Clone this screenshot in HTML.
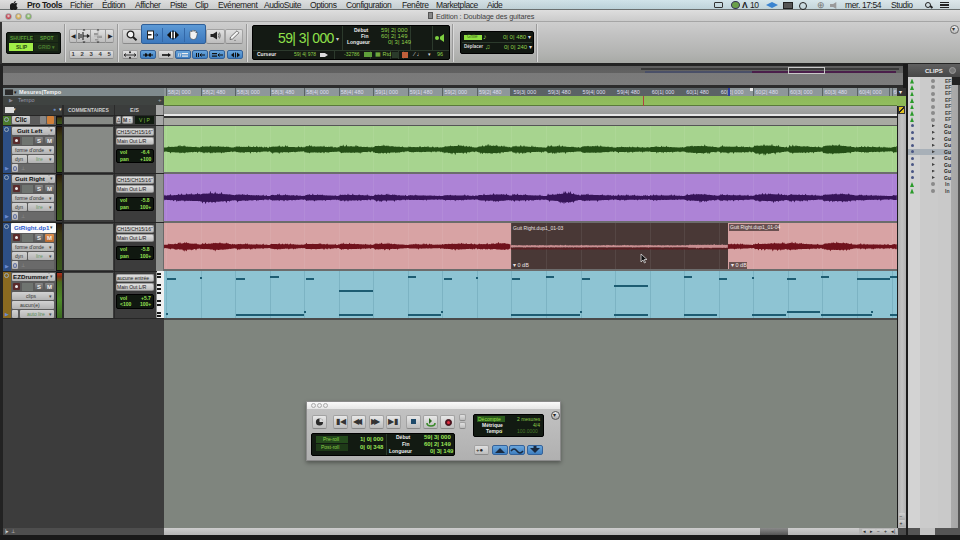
<!DOCTYPE html><html><head><meta charset="utf-8"><style>
*{margin:0;padding:0;box-sizing:border-box}
html,body{width:960px;height:540px;overflow:hidden;background:#1b1b1b;font-family:"Liberation Sans",sans-serif}
.a{position:absolute}
.mb{position:absolute;top:0;line-height:11px;font-size:8.5px;color:#1a1a1a;letter-spacing:-0.4px}
.btn{position:absolute;background:linear-gradient(#e0e0e0,#bdbdbd);border:1px solid #a2a2a2;border-bottom-color:#8a8a8a;border-radius:2px}
.bbl{position:absolute;background:linear-gradient(#6aa6dc,#3f7fc0);border:1px solid #34629a;border-radius:2px}
.lcd{position:absolute;background:#111611;border:1px solid #000;border-radius:2px}
.g{color:#9fe35a}
.w{color:#e8e8e8}
.t{position:absolute;white-space:nowrap}
.hb{position:absolute;background:linear-gradient(#d2d2d2,#b2b2b2);border-radius:1px}
.rl{position:absolute;top:88px;height:8px;font-size:5.5px;line-height:8px;color:#dde;white-space:nowrap}
</style></head><body>
<div class="a" style="left:0;top:0;width:960px;height:10px;background:linear-gradient(rgba(255,255,255,0.18),rgba(0,0,0,0.05)),linear-gradient(90deg,#d6d6d6 0,#d4d7d8 300px,#c4dce4 600px,#cde0e6 800px,#d6e2e6 960px);border-bottom:1px solid #6a7070"></div>
<svg class="a" style="left:10px;top:1px" width="8" height="9" viewBox="0 0 16 18"><path d="M11.5 0c.1 1.2-.4 2.3-1.1 3.1-.7.8-1.8 1.4-2.9 1.3-.1-1.1.4-2.3 1.1-3 .7-.8 1.9-1.4 2.9-1.4zM15.4 13.1c-.5 1.1-.7 1.5-1.3 2.5-.9 1.3-2.1 2.9-3.6 2.9-1.3 0-1.7-.9-3.5-.8-1.8 0-2.2.8-3.5.8-1.5 0-2.6-1.5-3.5-2.8C-1.6 12.200-.3 6.800 2.100 5.100c1-.7 2.200-1.100 3.300-1.100 1.200 0 2 .8 3.100.8 1 0 1.700-.8 3.200-.8 1 0 2.400.6 3.300 1.700-2.900 1.600-2.400 5.800.4 7.400z" fill="#1a1a1a"/></svg>
<span class="mb" style="left:27px;font-weight:bold;">Pro Tools</span>
<span class="mb" style="left:70px;">Fichier</span>
<span class="mb" style="left:102px;">Édition</span>
<span class="mb" style="left:135px;">Afficher</span>
<span class="mb" style="left:170px;">Piste</span>
<span class="mb" style="left:195px;">Clip</span>
<span class="mb" style="left:218px;">Evénement</span>
<span class="mb" style="left:264px;">AudioSuite</span>
<span class="mb" style="left:310px;">Options</span>
<span class="mb" style="left:346px;">Configuration</span>
<span class="mb" style="left:402px;">Fenêtre</span>
<span class="mb" style="left:436px;">Marketplace</span>
<span class="mb" style="left:487px;">Aide</span>
<span class="mb" style="left:845px;">mer. 17:54</span>
<span class="mb" style="left:891px;">Studio</span>
<div class="a" style="left:714px;top:2px;width:9px;height:6px;border:1.2px solid #333;border-radius:1px"></div>
<div class="a" style="left:731px;top:1px;width:9px;height:8px;border-radius:50%;background:#6aa04a;border:1px solid #335"></div>
<span class="mb" style="left:742px;font-weight:bold">&#923;</span><span class="mb" style="left:750px">10</span>
<div class="a" style="left:766px;top:2px;width:12px;height:6px;background:#3a84d0;transform:rotate(0deg);clip-path:polygon(0 50%,50% 0,100% 50%,50% 100%)"></div>
<div class="a" style="left:783px;top:2px;width:10px;height:7px;background:#555;border:1px solid #222"></div>
<div class="a" style="left:799px;top:1.5px;width:8px;height:8px;border:1.3px solid #222;border-radius:50%"></div>
<span class="mb" style="left:817px;color:#777">&#8853;</span>
<div class="a" style="left:830px;top:2px;width:9px;height:7px;background:#9a9a9a;clip-path:polygon(0 30%,35% 30%,70% 0,70% 100%,35% 70%,0 70%)"></div>
<div class="a" style="left:925px;top:1.5px;width:6px;height:6px;border:1.3px solid #222;border-radius:50%"></div><div class="a" style="left:930px;top:6px;width:3px;height:1.5px;background:#222;transform:rotate(45deg)"></div>
<div class="a" style="left:940px;top:2.0px;width:9px;height:1.3px;background:#222"></div>
<div class="a" style="left:940px;top:4.3px;width:9px;height:1.3px;background:#222"></div>
<div class="a" style="left:940px;top:6.6px;width:9px;height:1.3px;background:#222"></div>
<div class="a" style="left:0;top:10px;width:960px;height:12px;background:linear-gradient(#dedede,#cbcbcb);border-bottom:1px solid #a5a5a5"></div>
<div class="a" style="left:4.5px;top:12.5px;width:7px;height:7px;border-radius:50%;background:radial-gradient(circle at 50% 40%,#fff6 0,#c8404e 55%);border:1px solid #a0a0a0"></div>
<div class="a" style="left:14.5px;top:12.5px;width:7px;height:7px;border-radius:50%;background:radial-gradient(circle at 50% 40%,#fff6 0,#d8b050 55%);border:1px solid #a0a0a0"></div>
<div class="a" style="left:24.5px;top:12.5px;width:7px;height:7px;border-radius:50%;background:radial-gradient(circle at 50% 40%,#fff6 0,#80b860 55%);border:1px solid #a0a0a0"></div>
<div class="a" style="left:428px;top:12px;width:5px;height:7px;background:#888;border:1px solid #555"></div>
<span class="t" style="left:436px;top:11px;line-height:12px;font-size:7.3px;color:#404040;letter-spacing:-0.1px">Edition : Doublage des guitares</span>
<div class="a" style="left:0;top:22px;width:960px;height:42px;background:linear-gradient(#cecece,#c2c2c2 30%,#b2b3b1 75%,#a6a8a4)"></div>
<div class="a" style="left:64px;top:24px;width:1px;height:38px;background:#9a9a9a"></div><div class="a" style="left:65px;top:24px;width:1px;height:38px;background:#dadada"></div>
<div class="a" style="left:117px;top:24px;width:1px;height:38px;background:#9a9a9a"></div><div class="a" style="left:118px;top:24px;width:1px;height:38px;background:#dadada"></div>
<div class="a" style="left:246px;top:24px;width:1px;height:38px;background:#9a9a9a"></div><div class="a" style="left:247px;top:24px;width:1px;height:38px;background:#dadada"></div>
<div class="a" style="left:452px;top:24px;width:1px;height:38px;background:#9a9a9a"></div><div class="a" style="left:453px;top:24px;width:1px;height:38px;background:#dadada"></div>
<div class="a" style="left:536px;top:24px;width:1px;height:38px;background:#9a9a9a"></div><div class="a" style="left:537px;top:24px;width:1px;height:38px;background:#dadada"></div>
<div class="lcd" style="left:6px;top:32px;width:55px;height:22px;background:#142014;border:1px solid #050805"></div>
<div class="a" style="left:9px;top:35px;width:24px;height:7px;background:#1c2c16"></div>
<div class="a" style="left:34px;top:35px;width:24px;height:7px;background:#1c2c16"></div>
<div class="a" style="left:9px;top:43px;width:24px;height:8px;background:#a2ee48"></div>
<div class="a" style="left:34px;top:43px;width:24px;height:8px;background:#1c2c16"></div>
<span class="t" style="left:10px;top:35px;font-size:5px;line-height:7px;color:#5a9a3a;font-weight:bold">SHUFFLE</span>
<span class="t" style="left:40px;top:35px;font-size:5px;line-height:7px;color:#5a9a3a;font-weight:bold">SPOT</span>
<span class="t" style="left:16px;top:43px;font-size:5px;line-height:8px;color:#2a4a10;font-weight:bold">SLIP</span>
<span class="t" style="left:38px;top:43px;font-size:5px;line-height:8px;color:#4a7a30;font-weight:bold">GRID &#9662;</span>
<div class="btn" style="left:69px;top:29px;width:45px;height:14px"></div>
<div class="a" style="left:76px;top:29px;width:1px;height:14px;background:#9a9a9a"></div>
<div class="a" style="left:90px;top:29px;width:1px;height:14px;background:#9a9a9a"></div>
<div class="a" style="left:105px;top:29px;width:1px;height:14px;background:#9a9a9a"></div>
<span class="t" style="left:71px;top:32px;font-size:6px;color:#222">&#9664;</span><span class="t" style="left:108px;top:32px;font-size:6px;color:#222">&#9654;</span>
<svg class="a" style="left:77px;top:29px" width="14" height="14" viewBox="0 0 14 14"><path d="M2 4 V10 M4 5 V9 M6 3 V11" stroke="#333" stroke-width="1.2"/><path d="M6 7 H12 M10 5.5 L12 7 L10 8.5" stroke="#222" stroke-width="1.2" fill="none"/><path d="M5.5 1.5 L7 0 L8.5 1.5Z M5.5 12.5 L7 14 L8.5 12.5Z" fill="#222"/></svg>
<svg class="a" style="left:91px;top:29px" width="14" height="14" viewBox="0 0 14 14"><rect x="3" y="4" width="4" height="2" fill="#999"/><rect x="6" y="7" width="5" height="2" fill="#999"/><rect x="4" y="10" width="3" height="1.5" fill="#999"/><path d="M7 2 V12 M3 7 H11" stroke="#aaa" stroke-width="0.8"/><path d="M5.5 1.5 L7 0 L8.5 1.5Z M5.5 12.5 L7 14 L8.5 12.5Z" fill="#333"/></svg>
<div class="btn" style="left:69px;top:50px;width:45px;height:9px"></div>
<span class="t" style="left:71.5px;top:50px;font-size:6px;line-height:9px;color:#3a3a3a;font-weight:bold">1</span>
<span class="t" style="left:80.5px;top:50px;font-size:6px;line-height:9px;color:#3a3a3a;font-weight:bold">2</span>
<span class="t" style="left:89.5px;top:50px;font-size:6px;line-height:9px;color:#3a3a3a;font-weight:bold">3</span>
<span class="t" style="left:98.5px;top:50px;font-size:6px;line-height:9px;color:#3a3a3a;font-weight:bold">4</span>
<span class="t" style="left:107.5px;top:50px;font-size:6px;line-height:9px;color:#3a3a3a;font-weight:bold">5</span>
<div class="btn" style="left:122px;top:29px;width:20px;height:15px"></div>
<svg class="a" style="left:126px;top:30px" width="12" height="11" viewBox="0 0 12 11"><circle cx="4.5" cy="4.5" r="3.3" fill="#f4f4f4" stroke="#222" stroke-width="1.3"/><path d="M7 7 L10.5 10.2" stroke="#222" stroke-width="2"/></svg>
<div class="a" style="left:141px;top:24px;width:65px;height:20px;background:linear-gradient(#5d9ad6,#3c78bd);border:1px solid #2f5f98;border-radius:2px"></div>
<div class="a" style="left:162px;top:28px;width:1px;height:14px;background:#3368a8"></div>
<div class="a" style="left:184px;top:28px;width:1px;height:14px;background:#3368a8"></div>
<svg class="a" style="left:146px;top:30px" width="14" height="10" viewBox="0 0 14 10"><rect x="1.5" y="1" width="6" height="8" fill="#fff" stroke="#222" stroke-width="1"/><rect x="1.5" y="4" width="4" height="1.5" fill="#222"/><path d="M8.5 5 H12 M10.5 3.5 L12 5 L10.5 6.5" stroke="#1a3a6a" stroke-width="0.9" fill="none"/></svg>
<svg class="a" style="left:166px;top:30px" width="14" height="10" viewBox="0 0 14 10"><path d="M1 5 L5 1 L5 9 Z M13 5 L9 1 L9 9 Z" fill="#111"/><rect x="5" y="2" width="4" height="6" fill="#fff"/><rect x="6.3" y="0.5" width="1.4" height="9" fill="#111"/></svg>
<svg class="a" style="left:188px;top:30px" width="10" height="10" viewBox="0 0 10 10"><path d="M2 4 V2 Q2 1 3 1 Q4 1 4 2 V1 Q4 0 5 0 Q6 0 6 1 V1.5 Q6 0.5 7 0.5 Q8 0.5 8 1.5 V3 Q8 2 9 2.2 Q9.5 2.4 9.3 3.5 L8.5 7 Q8 9.5 5.5 9.5 Q2.5 9.5 2 7 Z" fill="#f2f2f2" stroke="#333" stroke-width="0.5"/></svg>
<div class="btn" style="left:206px;top:29px;width:19px;height:15px"></div>
<svg class="a" style="left:210px;top:31px" width="11" height="9" viewBox="0 0 11 9"><path d="M0.5 3 H3 L7 0.5 V8.5 L3 6 H0.5 Z" fill="#222"/><path d="M8.3 2.5 Q9.5 4.5 8.3 6.5 M9.5 1.5 Q11 4.5 9.5 7.5" stroke="#555" stroke-width="0.8" fill="none"/></svg>
<div class="btn" style="left:225px;top:29px;width:18px;height:15px"></div>
<svg class="a" style="left:228px;top:30px" width="12" height="11" viewBox="0 0 12 11"><path d="M2 9.5 L2.5 7 L9 0.8 L11 2.8 L4.5 9 Z" fill="#f4f4f4" stroke="#555" stroke-width="0.8"/><path d="M6 10.5 L7 9.8 L8 10.5 Z" fill="#333"/></svg>
<div class="btn" style="left:122px;top:50px;width:16px;height:9px"></div>
<svg class="a" style="left:123px;top:49.5px" width="14" height="10" viewBox="0 0 14 10"><path d="M1 5 H13 M1 5 L3 3.5 M1 5 L3 6.5 M13 5 L11 3.5 M13 5 L11 6.5" stroke="#222" stroke-width="0.9" fill="none"/><circle cx="7" cy="2.2" r="1" fill="#222"/><circle cx="7" cy="7.8" r="1" fill="#222"/></svg>
<div class="bbl" style="left:140px;top:50px;width:16px;height:9px"></div>
<svg class="a" style="left:141px;top:49.5px" width="14" height="10" viewBox="0 0 14 10"><path d="M2 5 H6 L5 3.5 M6 5 L5 6.5 M12 5 H8 L9 3.5 M8 5 L9 6.5" stroke="#111" stroke-width="1.1" fill="none"/><path d="M4 3 L7 5 L4 7Z M10 3 L7 5 L10 7Z" fill="#111"/></svg>
<div class="btn" style="left:158px;top:50px;width:16px;height:9px"></div>
<svg class="a" style="left:159px;top:49.5px" width="14" height="10" viewBox="0 0 14 10"><rect x="3" y="4.2" width="6" height="1.6" fill="#111"/><path d="M9 3 L12 5 L9 7Z" fill="#111"/></svg>
<div class="bbl" style="left:175px;top:50px;width:16px;height:9px"></div>
<svg class="a" style="left:176px;top:49.5px" width="14" height="10" viewBox="0 0 14 10"><path d="M2 7 L3 3 M4 7 L5 3" stroke="#eee" stroke-width="0.8"/><rect x="6" y="3" width="6" height="1.2" fill="#eee"/><rect x="6" y="5.5" width="6" height="1.2" fill="#eee"/></svg>
<div class="bbl" style="left:192px;top:50px;width:16px;height:9px"></div>
<svg class="a" style="left:193px;top:49.5px" width="14" height="10" viewBox="0 0 14 10"><rect x="3" y="3" width="1" height="4" fill="#111"/><rect x="5" y="3" width="1" height="4" fill="#111"/><path d="M7 5 H12 M8.5 3.5 L7 5 L8.5 6.5" stroke="#111" stroke-width="1" fill="none"/></svg>
<div class="bbl" style="left:209px;top:50px;width:16px;height:9px"></div>
<svg class="a" style="left:210px;top:49.5px" width="14" height="10" viewBox="0 0 14 10"><rect x="2" y="3" width="5" height="1.2" fill="#111"/><rect x="2" y="5.5" width="5" height="1.2" fill="#111"/><path d="M8 5 H13 M9.5 3.5 L8 5 L9.5 6.5" stroke="#111" stroke-width="1" fill="none"/></svg>
<div class="bbl" style="left:227px;top:50px;width:16px;height:9px"></div>
<svg class="a" style="left:228px;top:49.5px" width="14" height="10" viewBox="0 0 14 10"><path d="M6 2.5 L3 5 L6 7.5Z" fill="#111"/><rect x="7" y="2.5" width="1" height="5" fill="#111"/><path d="M9 2.5 L12 5 L9 7.5Z" fill="#111"/></svg>
<div class="lcd" style="left:252px;top:25px;width:198px;height:35px;background:#141a14"></div>
<div class="a" style="left:253px;top:50px;width:196px;height:1px;background:#2c3a2c"></div>
<div class="a" style="left:342px;top:26px;width:1px;height:24px;background:#2c3a2c"></div>
<div class="a" style="left:410px;top:26px;width:1px;height:24px;background:#2c3a2c"></div>
<div class="a" style="left:432px;top:26px;width:1px;height:24px;background:#2c3a2c"></div>
<div class="a" style="left:334px;top:51px;width:1px;height:8px;background:#2c3a2c"></div>
<div class="a" style="left:370px;top:51px;width:1px;height:8px;background:#2c3a2c"></div>
<div class="a" style="left:390px;top:51px;width:1px;height:8px;background:#2c3a2c"></div>
<div class="a" style="left:398px;top:51px;width:1px;height:8px;background:#2c3a2c"></div>
<div class="a" style="left:403px;top:51px;width:1px;height:8px;background:#2c3a2c"></div>
<span class="t g" style="left:278px;top:30px;font-size:14px;line-height:16px;color:#8fe04a;letter-spacing:-0.6px">59| 3| 000</span>
<span class="t" style="left:336px;top:35px;font-size:6px;color:#ccc">&#9662;</span>
<span class="t w" style="left:354px;top:27px;font-size:5px;line-height:6px;font-weight:bold">Début</span>
<span class="t w" style="left:361px;top:33px;font-size:5px;line-height:6px;font-weight:bold">Fin</span>
<span class="t w" style="left:347px;top:39px;font-size:5px;line-height:6px;font-weight:bold">Longueur</span>
<span class="t" style="left:381px;top:27px;font-size:6px;line-height:6px;color:#8fd04a">59| 2| 000</span>
<span class="t" style="left:381px;top:33px;font-size:6px;line-height:6px;color:#8fd04a">60| 2| 149</span>
<span class="t" style="left:388px;top:39px;font-size:6px;line-height:6px;color:#8fd04a">0| 3| 149</span>
<div class="a" style="left:435px;top:36px;width:4px;height:4px;border-radius:50%;background:#7ed040"></div><div class="a" style="left:440px;top:34px;width:4px;height:8px;background:#7ed040;clip-path:polygon(0 35%,100% 0,100% 100%,0 65%)"></div>
<span class="t w" style="left:257px;top:51px;font-size:5px;line-height:6px;font-weight:bold">Curseur</span>
<span class="t" style="left:294px;top:51px;font-size:5px;line-height:7px;color:#8fd04a">59| 4| 978</span>
<div class="a" style="left:320px;top:53px;width:8px;height:4px;background:#ddd;clip-path:polygon(0 0,60% 0,100% 50%,60% 100%,0 100%)"></div>
<span class="t" style="left:344px;top:51px;font-size:5px;line-height:7px;color:#8fd04a">-32786</span>
<div class="a" style="left:364px;top:52px;width:8px;height:5px;background:#5fa03a"></div>
<span class="t" style="left:375px;top:51px;font-size:5.5px;line-height:7px;color:#8fd04a">&#9638; Rtd</span>
<div class="a" style="left:392px;top:52px;width:6px;height:6px;background:#2a3a2a"></div>
<div class="a" style="left:402px;top:52px;width:6px;height:6px;background:#c0603a"></div>
<span class="t" style="left:414px;top:50px;font-size:6px;line-height:8px;color:#ddd">&#8260; &#9833;</span>
<span class="t" style="left:428px;top:51px;font-size:5px;line-height:6px;color:#ddd">&#9662;</span>
<span class="t" style="left:437px;top:51px;font-size:5.5px;line-height:7px;color:#8fd04a">96</span>
<div class="lcd" style="left:460px;top:31px;width:74px;height:23px;background:#121812"></div>
<div class="a" style="left:462px;top:42px;width:70px;height:1px;background:#2c3a2c"></div>
<div class="a" style="left:464px;top:35px;width:18px;height:5px;background:#8fe040"></div>
<span class="t" style="left:467px;top:34px;font-size:4.5px;line-height:6px;color:#3a6a1a">Grille</span>
<span class="t" style="left:483px;top:33px;font-size:7px;line-height:8px;color:#8fd04a">&#9834;</span>
<span class="t" style="left:464px;top:44px;font-size:4.5px;line-height:6px;color:#ddd;font-weight:bold">Déplacer</span>
<span class="t" style="left:485px;top:43px;font-size:7px;line-height:8px;color:#8fd04a">&#9835;</span>
<span class="t" style="left:503px;top:34px;font-size:6px;line-height:7px;color:#8fd04a">0| 0| 480 <span style="color:#ddd">&#9662;</span></span>
<span class="t" style="left:504px;top:44px;font-size:6px;line-height:7px;color:#8fd04a">0| 0| 240 <span style="color:#ddd">&#9662;</span></span>
<div class="a" style="left:950px;top:25px;width:9px;height:9px;border-radius:50%;border:1px solid #666;background:linear-gradient(#eee,#bbb)"></div><span class="t" style="left:952px;top:25px;font-size:6px;line-height:9px;color:#333">&#9662;</span>
<div class="a" style="left:0;top:63px;width:960px;height:3px;background:#242424"></div><div class="a" style="left:0;top:22px;width:2px;height:42px;background:#333"></div>
<div class="a" style="left:0;top:66px;width:3px;height:474px;background:#222"></div>
<div class="a" style="left:3px;top:66px;width:900px;height:20px;background:linear-gradient(#5e5e5e 0,#626262 35%,#7a7a7a 36%,#7c7c7c)"></div>
<div class="a" style="left:641px;top:68px;width:258px;height:2px;background:#3a3a3a"></div>
<div class="a" style="left:645px;top:71px;width:107px;height:2px;background:#4a5068"></div>
<div class="a" style="left:752px;top:71px;width:144px;height:2px;background:#4a1e4a"></div>
<div class="a" style="left:788px;top:67px;width:37px;height:7px;border:1px solid #c8c8c8"></div>
<div class="a" style="left:3px;top:85px;width:900px;height:3px;background:#2c2c2c"></div>
<div class="a" style="left:3px;top:88px;width:161px;height:440px;background:#3c3c3c"></div>
<div class="a" style="left:3px;top:88px;width:161px;height:8px;background:#7f8a8d"></div>
<div class="a" style="left:5px;top:89px;width:8px;height:6px;background:#2a2a2a;border-top:1px solid #555"></div>
<span class="t" style="left:14px;top:88px;font-size:5px;line-height:8px;color:#111">&#9662;</span><span class="t" style="left:19px;top:88px;font-size:5.6px;line-height:8px;color:#f4f4f4;font-weight:bold">Mesures|Tempo</span>
<div class="a" style="left:3px;top:96px;width:161px;height:9px;background:#3f4341"></div>
<span class="t" style="left:9px;top:96px;font-size:5px;line-height:9px;color:#889">&#9654;</span><span class="t" style="left:18px;top:96px;font-size:5.5px;line-height:9px;color:#99a">Tempo</span>
<span class="t" style="left:158px;top:96px;font-size:6px;line-height:9px;color:#aaa">+</span>
<div class="a" style="left:3px;top:105px;width:161px;height:10px;background:#3b3d3c"></div>
<div class="a" style="left:5px;top:107px;width:9px;height:6px;background:#ddd"></div><span class="t" style="left:13px;top:106px;font-size:5px;color:#ddd">&#9662;</span>
<span class="t" style="left:53px;top:106px;font-size:5px;color:#6a8ac0">&#9679;</span><span class="t" style="left:59px;top:106px;font-size:5px;color:#ddd">&#9662;</span>
<span class="t" style="left:68px;top:105px;font-size:5px;line-height:10px;color:#ccc;font-weight:bold">COMMENTAIRES</span>
<span class="t" style="left:130px;top:105px;font-size:5.5px;line-height:10px;color:#ccc;font-weight:bold">E/S</span>
<div class="a" style="left:62px;top:105px;width:2px;height:213px;background:#2a2a2a"></div>
<div class="a" style="left:114px;top:105px;width:1px;height:213px;background:#2a2a2a"></div>
<div class="a" style="left:156px;top:105px;width:8px;height:213px;background:#8f918f"></div><div class="a" style="left:156px;top:105px;width:8px;height:20px;background:#a6a6a6"></div>
<div class="a" style="left:163px;top:105px;width:1px;height:213px;background:#6a6a6a"></div>
<div class="a" style="left:3px;top:115px;width:161px;height:1px;background:#262626"></div>
<div class="a" style="left:3px;top:116px;width:8px;height:9px;background:#4c7a2c"></div>
<div class="a" style="left:4px;top:117px;width:5px;height:5px;border-radius:50%;border:1px solid #9ab"></div>
<div class="a" style="left:11px;top:116px;width:45px;height:9px;background:#5b5b5b"></div>
<div class="a" style="left:56px;top:116px;width:6px;height:9px;background:#101010"></div>
<div class="a" style="left:56.5px;top:117px;width:5px;height:7px;background:linear-gradient(#2a1a0c,#3a3a14 20%,#3a5a1e)"></div>
<div class="a" style="left:64px;top:117px;width:49px;height:7px;background:#878a86"></div>
<div class="hb" style="left:12px;top:116px;width:18px;height:8px"></div><span class="t" style="left:15px;top:116px;font-size:6.5px;line-height:8px;color:#111;font-weight:bold">Clic</span>
<div class="hb" style="left:40px;top:116px;width:6px;height:8px;background:#888"></div><div class="a" style="left:47px;top:116px;width:7px;height:8px;background:#d0803a;border-radius:1px"></div>
<div class="btn" style="left:116px;top:116px;width:5px;height:8px"></div><span class="t" style="left:117px;top:116px;font-size:5px;line-height:8px;color:#333">&#916;</span><div class="btn" style="left:122px;top:116px;width:11px;height:8px"></div><span class="t" style="left:123px;top:116px;font-size:5px;line-height:8px;color:#333;font-weight:bold">M &#8597;</span>
<div class="a" style="left:135px;top:116px;width:19px;height:8px;background:#101a10"></div><span class="t" style="left:139px;top:116px;font-size:5px;line-height:8px;color:#7fc040">V | P</span>
<div class="a" style="left:3px;top:125px;width:161px;height:1px;background:#262626"></div>
<div class="a" style="left:3px;top:126px;width:8px;height:47px;background:#2d4f86"></div>
<div class="a" style="left:4px;top:127px;width:5px;height:5px;border-radius:50%;border:1px solid #9ab"></div>
<div class="a" style="left:11px;top:126px;width:45px;height:47px;background:#5b5b5b"></div>
<div class="a" style="left:56px;top:126px;width:6px;height:47px;background:#101010"></div>
<div class="a" style="left:56.5px;top:127px;width:5px;height:45px;background:linear-gradient(#2a1a0c,#3a3a14 20%,#3a5a1e)"></div>
<div class="a" style="left:64px;top:127px;width:49px;height:45px;background:#878a86"></div>
<div class="hb" style="left:12px;top:127px;width:37px;height:8px"></div>
<div class="hb" style="left:49px;top:127px;width:6px;height:8px"></div>
<span class="t" style="left:50px;top:127px;font-size:5px;line-height:6px;color:#444">&#9662;</span>
<span class="t" style="left:17px;top:127px;font-size:6.2px;line-height:8px;color:#111;font-weight:bold">Guit Left</span>
<div class="a" style="left:13px;top:137px;width:7px;height:7px;border-radius:1px;background:#5a2a2a"></div><div class="a" style="left:15px;top:139px;width:3px;height:3px;border-radius:50%;background:#eee"></div>
<div class="a" style="left:22px;top:137px;width:11px;height:8px;background:#6f7470"></div>
<div class="hb" style="left:35px;top:137px;width:8px;height:8px;background:linear-gradient(#888,#555)"></div><span class="t" style="left:37px;top:137px;font-size:6px;line-height:8px;color:#eee;font-weight:bold">S</span>
<div class="hb" style="left:45px;top:137px;width:9px;height:8px;background:linear-gradient(#888,#555)"></div><span class="t" style="left:47px;top:137px;font-size:6px;line-height:8px;color:#eee;font-weight:bold">M</span>
<div class="hb" style="left:12px;top:146px;width:42px;height:8px"></div><span class="t" style="left:15px;top:146px;font-size:5px;line-height:8px;color:#333">forme d'onde</span>
<div class="hb" style="left:12px;top:155px;width:15px;height:8px"></div><span class="t" style="left:15px;top:155px;font-size:5px;line-height:8px;color:#333">dyn</span>
<div class="hb" style="left:28px;top:155px;width:26px;height:8px"></div><span class="t" style="left:36px;top:155px;font-size:5px;line-height:8px;color:#6a9a6a">lire</span>
<div class="a" style="left:12px;top:164px;width:42px;height:8px;background:#6a6a6a"></div><div class="hb" style="left:12px;top:164px;width:6px;height:8px"></div><div class="a" style="left:13px;top:165.5px;width:4px;height:5px;border:1px solid #5a6aa0;border-radius:50%"></div><span class="t" style="left:21px;top:164px;font-size:5px;line-height:8px;color:#999">&#8869;</span>
<span class="t" style="left:49px;top:146px;font-size:5px;line-height:8px;color:#444">&#9662;</span>
<span class="t" style="left:49px;top:155px;font-size:5px;line-height:8px;color:#444">&#9662;</span>
<span class="t" style="left:5px;top:165px;font-size:5px;color:#6a8ad0">&#9654;</span>
<div class="btn" style="left:116px;top:128px;width:38px;height:8px"></div><span class="t" style="left:117px;top:128px;font-size:5px;line-height:8px;color:#222">CH15/CH15/16"</span>
<div class="btn" style="left:116px;top:137px;width:38px;height:8px"></div><span class="t" style="left:117px;top:137px;font-size:5px;line-height:8px;color:#222">Main Out L/R</span>
<div class="lcd" style="left:116px;top:148.5px;width:38px;height:14.5px;background:#101810"></div>
<span class="t" style="left:120px;top:149px;font-size:5px;line-height:7px;color:#96e052;font-weight:bold">vol</span><span class="t" style="left:141px;top:149px;font-size:5px;line-height:7px;color:#96e052;font-weight:bold">-6.4</span>
<span class="t" style="left:120px;top:155.5px;font-size:5px;line-height:7px;color:#96e052;font-weight:bold">pan</span><span class="t" style="left:140px;top:155.5px;font-size:5px;line-height:7px;color:#96e052;font-weight:bold">+100</span>
<div class="a" style="left:3px;top:173px;width:161px;height:1px;background:#262626"></div>
<div class="a" style="left:3px;top:174px;width:8px;height:47px;background:#2d4f86"></div>
<div class="a" style="left:4px;top:175px;width:5px;height:5px;border-radius:50%;border:1px solid #9ab"></div>
<div class="a" style="left:11px;top:174px;width:45px;height:47px;background:#5b5b5b"></div>
<div class="a" style="left:56px;top:174px;width:6px;height:47px;background:#101010"></div>
<div class="a" style="left:56.5px;top:175px;width:5px;height:45px;background:linear-gradient(#2a1a0c,#3a3a14 20%,#3a5a1e)"></div>
<div class="a" style="left:64px;top:175px;width:49px;height:45px;background:#878a86"></div>
<div class="hb" style="left:12px;top:175px;width:37px;height:8px"></div>
<div class="hb" style="left:49px;top:175px;width:6px;height:8px"></div>
<span class="t" style="left:50px;top:175px;font-size:5px;line-height:6px;color:#444">&#9662;</span>
<span class="t" style="left:15px;top:175px;font-size:6.2px;line-height:8px;color:#111;font-weight:bold">Guit Right</span>
<div class="a" style="left:13px;top:185px;width:7px;height:7px;border-radius:1px;background:#5a2a2a"></div><div class="a" style="left:15px;top:187px;width:3px;height:3px;border-radius:50%;background:#eee"></div>
<div class="a" style="left:22px;top:185px;width:11px;height:8px;background:#6f7470"></div>
<div class="hb" style="left:35px;top:185px;width:8px;height:8px;background:linear-gradient(#888,#555)"></div><span class="t" style="left:37px;top:185px;font-size:6px;line-height:8px;color:#eee;font-weight:bold">S</span>
<div class="hb" style="left:45px;top:185px;width:9px;height:8px;background:linear-gradient(#888,#555)"></div><span class="t" style="left:47px;top:185px;font-size:6px;line-height:8px;color:#eee;font-weight:bold">M</span>
<div class="hb" style="left:12px;top:194px;width:42px;height:8px"></div><span class="t" style="left:15px;top:194px;font-size:5px;line-height:8px;color:#333">forme d'onde</span>
<div class="hb" style="left:12px;top:203px;width:15px;height:8px"></div><span class="t" style="left:15px;top:203px;font-size:5px;line-height:8px;color:#333">dyn</span>
<div class="hb" style="left:28px;top:203px;width:26px;height:8px"></div><span class="t" style="left:36px;top:203px;font-size:5px;line-height:8px;color:#6a9a6a">lire</span>
<div class="a" style="left:12px;top:212px;width:42px;height:8px;background:#6a6a6a"></div><div class="hb" style="left:12px;top:212px;width:6px;height:8px"></div><div class="a" style="left:13px;top:213.5px;width:4px;height:5px;border:1px solid #5a6aa0;border-radius:50%"></div><span class="t" style="left:21px;top:212px;font-size:5px;line-height:8px;color:#999">&#8869;</span>
<span class="t" style="left:49px;top:194px;font-size:5px;line-height:8px;color:#444">&#9662;</span>
<span class="t" style="left:49px;top:203px;font-size:5px;line-height:8px;color:#444">&#9662;</span>
<span class="t" style="left:5px;top:213px;font-size:5px;color:#6a8ad0">&#9654;</span>
<div class="btn" style="left:116px;top:176px;width:38px;height:8px"></div><span class="t" style="left:117px;top:176px;font-size:5px;line-height:8px;color:#222">CH15/CH15/16"</span>
<div class="btn" style="left:116px;top:185px;width:38px;height:8px"></div><span class="t" style="left:117px;top:185px;font-size:5px;line-height:8px;color:#222">Main Out L/R</span>
<div class="lcd" style="left:116px;top:196.5px;width:38px;height:14.5px;background:#101810"></div>
<span class="t" style="left:120px;top:197px;font-size:5px;line-height:7px;color:#96e052;font-weight:bold">vol</span><span class="t" style="left:141px;top:197px;font-size:5px;line-height:7px;color:#96e052;font-weight:bold">-5.8</span>
<span class="t" style="left:120px;top:203.5px;font-size:5px;line-height:7px;color:#96e052;font-weight:bold">pan</span><span class="t" style="left:140px;top:203.5px;font-size:5px;line-height:7px;color:#96e052;font-weight:bold">100+</span>
<div class="a" style="left:3px;top:222px;width:161px;height:1px;background:#262626"></div>
<div class="a" style="left:3px;top:223px;width:8px;height:47.5px;background:#2d4f86"></div>
<div class="a" style="left:4px;top:224px;width:5px;height:5px;border-radius:50%;border:1px solid #9ab"></div>
<div class="a" style="left:11px;top:223px;width:45px;height:47.5px;background:#5b5b5b"></div>
<div class="a" style="left:56px;top:223px;width:6px;height:47.5px;background:#101010"></div>
<div class="a" style="left:56.5px;top:224px;width:5px;height:45.5px;background:linear-gradient(#2a1a0c,#3a3a14 20%,#3a5a1e)"></div>
<div class="a" style="left:64px;top:224px;width:49px;height:45.5px;background:#878a86"></div>
<div class="a" style="left:11px;top:223px;width:45px;height:10px;background:#fafafa;border-radius:1px"></div>
<span class="t" style="left:50px;top:224px;font-size:5px;line-height:6px;color:#444">&#9662;</span>
<span class="t" style="left:14px;top:224px;font-size:6.2px;line-height:8px;color:#2a5ad0;font-weight:bold">GtRight.dp1</span>
<div class="a" style="left:13px;top:234px;width:7px;height:7px;border-radius:1px;background:#5a2a2a"></div><div class="a" style="left:15px;top:236px;width:3px;height:3px;border-radius:50%;background:#eee"></div>
<div class="a" style="left:22px;top:234px;width:11px;height:8px;background:#6f7470"></div>
<div class="hb" style="left:35px;top:234px;width:8px;height:8px;background:linear-gradient(#888,#555)"></div><span class="t" style="left:37px;top:234px;font-size:6px;line-height:8px;color:#eee;font-weight:bold">S</span>
<div class="hb" style="left:45px;top:234px;width:9px;height:8px;background:linear-gradient(#e09050,#b86a30)"></div><span class="t" style="left:47px;top:234px;font-size:6px;line-height:8px;color:#eee;font-weight:bold">M</span>
<div class="hb" style="left:12px;top:243px;width:42px;height:8px"></div><span class="t" style="left:15px;top:243px;font-size:5px;line-height:8px;color:#333">forme d'onde</span>
<div class="hb" style="left:12px;top:252px;width:15px;height:8px"></div><span class="t" style="left:15px;top:252px;font-size:5px;line-height:8px;color:#333">dyn</span>
<div class="hb" style="left:28px;top:252px;width:26px;height:8px"></div><span class="t" style="left:36px;top:252px;font-size:5px;line-height:8px;color:#6a9a6a">lire</span>
<div class="a" style="left:12px;top:261px;width:42px;height:8px;background:#6a6a6a"></div><div class="hb" style="left:12px;top:261px;width:6px;height:8px"></div><div class="a" style="left:13px;top:262.5px;width:4px;height:5px;border:1px solid #5a6aa0;border-radius:50%"></div><span class="t" style="left:21px;top:261px;font-size:5px;line-height:8px;color:#999">&#8869;</span>
<span class="t" style="left:49px;top:243px;font-size:5px;line-height:8px;color:#444">&#9662;</span>
<span class="t" style="left:49px;top:252px;font-size:5px;line-height:8px;color:#444">&#9662;</span>
<span class="t" style="left:5px;top:262.5px;font-size:5px;color:#6a8ad0">&#9654;</span>
<div class="btn" style="left:116px;top:225px;width:38px;height:8px"></div><span class="t" style="left:117px;top:225px;font-size:5px;line-height:8px;color:#222">CH15/CH15/16"</span>
<div class="btn" style="left:116px;top:234px;width:38px;height:8px"></div><span class="t" style="left:117px;top:234px;font-size:5px;line-height:8px;color:#222">Main Out L/R</span>
<div class="lcd" style="left:116px;top:245.5px;width:38px;height:14.5px;background:#101810"></div>
<span class="t" style="left:120px;top:246px;font-size:5px;line-height:7px;color:#96e052;font-weight:bold">vol</span><span class="t" style="left:141px;top:246px;font-size:5px;line-height:7px;color:#96e052;font-weight:bold">-5.8</span>
<span class="t" style="left:120px;top:252.5px;font-size:5px;line-height:7px;color:#96e052;font-weight:bold">pan</span><span class="t" style="left:140px;top:252.5px;font-size:5px;line-height:7px;color:#96e052;font-weight:bold">100+</span>
<div class="a" style="left:3px;top:270.5px;width:161px;height:1px;background:#262626"></div>
<div class="a" style="left:3px;top:271.5px;width:8px;height:47.0px;background:#8a6a20"></div>
<div class="a" style="left:4px;top:272.5px;width:5px;height:5px;border-radius:50%;border:1px solid #9ab"></div>
<div class="a" style="left:11px;top:271.5px;width:45px;height:47.0px;background:#5b5b5b"></div>
<div class="a" style="left:56px;top:271.5px;width:6px;height:47.0px;background:#101010"></div>
<div class="a" style="left:56.5px;top:272.5px;width:5px;height:45.0px;background:linear-gradient(#b03020,#803010 8%,#4a6a20 20%,#4e8a2a 60%,#3a6a20)"></div>
<div class="a" style="left:64px;top:272.5px;width:49px;height:45.0px;background:#878a86"></div>
<div class="hb" style="left:12px;top:272.5px;width:37px;height:8px"></div>
<div class="hb" style="left:49px;top:272.5px;width:6px;height:8px"></div>
<span class="t" style="left:50px;top:272.5px;font-size:5px;line-height:6px;color:#444">&#9662;</span>
<span class="t" style="left:13px;top:272.5px;font-size:6.2px;line-height:8px;color:#111;font-weight:bold">EZDrummer</span>
<div class="a" style="left:13px;top:282.5px;width:7px;height:7px;border-radius:1px;background:#5a2a2a"></div><div class="a" style="left:15px;top:284.5px;width:3px;height:3px;border-radius:50%;background:#eee"></div>
<div class="a" style="left:22px;top:282.5px;width:11px;height:8px;background:#6f7470"></div>
<div class="hb" style="left:35px;top:282.5px;width:8px;height:8px;background:linear-gradient(#888,#555)"></div><span class="t" style="left:37px;top:282.5px;font-size:6px;line-height:8px;color:#eee;font-weight:bold">S</span>
<div class="hb" style="left:45px;top:282.5px;width:9px;height:8px;background:linear-gradient(#888,#555)"></div><span class="t" style="left:47px;top:282.5px;font-size:6px;line-height:8px;color:#eee;font-weight:bold">M</span>
<div class="hb" style="left:12px;top:291.5px;width:42px;height:8px"></div><span class="t" style="left:26px;top:291.5px;font-size:5px;line-height:8px;color:#333">clips</span>
<div class="hb" style="left:12px;top:300.5px;width:42px;height:8px"></div><span class="t" style="left:20px;top:300.5px;font-size:5px;line-height:8px;color:#333">aucun(e)</span>
<div class="hb" style="left:12px;top:309.5px;width:6px;height:8px"></div><div class="hb" style="left:20px;top:309.5px;width:34px;height:8px"></div><span class="t" style="left:27px;top:309.5px;font-size:5px;line-height:8px;color:#5a8a5a">auto lire</span>
<span class="t" style="left:49px;top:291.5px;font-size:5px;line-height:8px;color:#444">&#9662;</span>
<span class="t" style="left:49px;top:309.5px;font-size:5px;line-height:8px;color:#444">&#9662;</span>
<span class="t" style="left:5px;top:310.5px;font-size:5px;color:#6a8ad0">&#9654;</span>
<div class="btn" style="left:116px;top:273.5px;width:38px;height:8px"></div><span class="t" style="left:117px;top:273.5px;font-size:5px;line-height:8px;color:#222">aucune entrée</span>
<div class="btn" style="left:116px;top:282.5px;width:38px;height:8px"></div><span class="t" style="left:117px;top:282.5px;font-size:5px;line-height:8px;color:#222">Main Out L/R</span>
<div class="lcd" style="left:116px;top:294.0px;width:38px;height:14.5px;background:#101810"></div>
<span class="t" style="left:120px;top:294.5px;font-size:5px;line-height:7px;color:#96e052;font-weight:bold">vol</span><span class="t" style="left:141px;top:294.5px;font-size:5px;line-height:7px;color:#96e052;font-weight:bold">+5.7</span>
<span class="t" style="left:120px;top:301.0px;font-size:5px;line-height:7px;color:#96e052;font-weight:bold">&lt;100</span><span class="t" style="left:140px;top:301.0px;font-size:5px;line-height:7px;color:#96e052;font-weight:bold">100+</span>
<div class="a" style="left:3px;top:318px;width:161px;height:1px;background:#262626"></div>
<div class="a" style="left:164px;top:88px;width:733px;height:440px;background:#7f857e"></div>
<div class="a" style="left:164px;top:88px;width:733px;height:8px;background:#8e979a"></div>
<div class="a" style="left:510px;top:88px;width:218px;height:8px;background:#5b6265"></div>
<div class="a" style="left:166.0px;top:88px;width:1px;height:8px;background:#5a6366"></div>
<span class="rl" style="left:168.0px">58|2| 000</span>
<div class="a" style="left:200.6px;top:88px;width:1px;height:8px;background:#5a6366"></div>
<span class="rl" style="left:202.6px">58|2| 480</span>
<div class="a" style="left:235.1px;top:88px;width:1px;height:8px;background:#5a6366"></div>
<span class="rl" style="left:237.1px">58|3| 000</span>
<div class="a" style="left:269.6px;top:88px;width:1px;height:8px;background:#5a6366"></div>
<span class="rl" style="left:271.6px">58|3| 480</span>
<div class="a" style="left:304.2px;top:88px;width:1px;height:8px;background:#5a6366"></div>
<span class="rl" style="left:306.2px">58|4| 000</span>
<div class="a" style="left:338.8px;top:88px;width:1px;height:8px;background:#5a6366"></div>
<span class="rl" style="left:340.8px">58|4| 480</span>
<div class="a" style="left:373.3px;top:88px;width:1px;height:8px;background:#5a6366"></div>
<span class="rl" style="left:375.3px">59|1| 000</span>
<div class="a" style="left:407.8px;top:88px;width:1px;height:8px;background:#5a6366"></div>
<span class="rl" style="left:409.8px">59|1| 480</span>
<div class="a" style="left:442.4px;top:88px;width:1px;height:8px;background:#5a6366"></div>
<span class="rl" style="left:444.4px">59|2| 000</span>
<div class="a" style="left:476.9px;top:88px;width:1px;height:8px;background:#5a6366"></div>
<span class="rl" style="left:478.9px">59|2| 480</span>
<div class="a" style="left:511.5px;top:88px;width:1px;height:8px;background:#5a6366"></div>
<span class="rl" style="left:513.5px">59|3| 000</span>
<div class="a" style="left:546.0px;top:88px;width:1px;height:8px;background:#5a6366"></div>
<span class="rl" style="left:548.0px">59|3| 480</span>
<div class="a" style="left:580.6px;top:88px;width:1px;height:8px;background:#5a6366"></div>
<span class="rl" style="left:582.6px">59|4| 000</span>
<div class="a" style="left:615.1px;top:88px;width:1px;height:8px;background:#5a6366"></div>
<span class="rl" style="left:617.1px">59|4| 480</span>
<div class="a" style="left:649.7px;top:88px;width:1px;height:8px;background:#5a6366"></div>
<span class="rl" style="left:651.7px">60|1| 000</span>
<div class="a" style="left:684.2px;top:88px;width:1px;height:8px;background:#5a6366"></div>
<span class="rl" style="left:686.2px">60|1| 480</span>
<div class="a" style="left:718.8px;top:88px;width:1px;height:8px;background:#5a6366"></div>
<span class="rl" style="left:720.8px">60|2| 000</span>
<div class="a" style="left:753.3px;top:88px;width:1px;height:8px;background:#5a6366"></div>
<span class="rl" style="left:755.3px">60|2| 480</span>
<div class="a" style="left:787.9px;top:88px;width:1px;height:8px;background:#5a6366"></div>
<span class="rl" style="left:789.9px">60|3| 000</span>
<div class="a" style="left:822.4px;top:88px;width:1px;height:8px;background:#5a6366"></div>
<span class="rl" style="left:824.4px">60|3| 480</span>
<div class="a" style="left:857.0px;top:88px;width:1px;height:8px;background:#5a6366"></div>
<span class="rl" style="left:859.0px">60|4| 000</span>
<div class="a" style="left:891.5px;top:88px;width:1px;height:8px;background:#5a6366"></div>
<span class="rl" style="left:893.5px">60|4| 480</span>
<div class="a" style="left:889px;top:88px;width:1px;height:8px;background:#5a6366"></div>
<div class="a" style="left:728px;top:88px;width:2px;height:8px;background:#3040a0"></div><div class="a" style="left:750px;top:88px;width:3px;height:3px;background:#eee"></div>
<div class="a" style="left:164px;top:96px;width:733px;height:9.5px;background:linear-gradient(#8cb858,#92bd5e 85%,#5a7a3a 90%)"></div>
<div class="a" style="left:643px;top:96px;width:1px;height:19px;background:#b04040"></div>
<div class="a" style="left:164px;top:105.5px;width:733px;height:9px;background:linear-gradient(#aaabaa,#9a9c9a 85%,#777 90%)"></div>
<div class="a" style="left:164px;top:114px;width:733px;height:2px;background:#e6e6e6"></div>
<div class="a" style="left:164px;top:116px;width:733px;height:1.5px;background:#333"></div>
<div class="a" style="left:164px;top:117.5px;width:733px;height:8px;background:#a8aaa2"></div>
<div class="a" style="left:164px;top:125px;width:733px;height:1px;background:#555"></div>
<div class="a" style="left:164px;top:126px;width:733px;height:46px;background:#a7d48f"></div>
<div class="a" style="left:164px;top:172px;width:733px;height:2px;background:#6c6c6c"></div>
<div class="a" style="left:164px;top:174px;width:733px;height:47px;background:#ad83d6"></div>
<div class="a" style="left:164px;top:221px;width:733px;height:2px;background:#6c6c6c"></div>
<div class="a" style="left:164px;top:223px;width:347px;height:46px;background:#d8a3a4"></div>
<div class="a" style="left:511px;top:223px;width:217px;height:47px;background:#493836"></div>
<div class="a" style="left:728px;top:223px;width:169px;height:46px;background:#d8a3a4"></div>
<div class="a" style="left:164px;top:269px;width:733px;height:2px;background:#6c6c6c"></div>
<div class="a" style="left:164px;top:271px;width:733px;height:47.5px;background:#8ec4d3"></div>
<div class="a" style="left:164px;top:318px;width:733px;height:1.5px;background:#4a4a4a"></div>
<div class="a" style="left:165.9px;top:126px;width:1px;height:46px;background:rgba(255,255,255,0.07)"></div>
<div class="a" style="left:165.9px;top:174px;width:1px;height:47px;background:rgba(255,255,255,0.07)"></div>
<div class="a" style="left:165.9px;top:223px;width:1px;height:46px;background:rgba(255,255,255,0.07)"></div>
<div class="a" style="left:165.9px;top:271px;width:1px;height:47px;background:rgba(0,60,80,0.12)"></div>
<div class="a" style="left:200.5px;top:126px;width:1px;height:46px;background:rgba(255,255,255,0.07)"></div>
<div class="a" style="left:200.5px;top:174px;width:1px;height:47px;background:rgba(255,255,255,0.07)"></div>
<div class="a" style="left:200.5px;top:223px;width:1px;height:46px;background:rgba(255,255,255,0.07)"></div>
<div class="a" style="left:200.5px;top:271px;width:1px;height:47px;background:rgba(0,60,80,0.12)"></div>
<div class="a" style="left:235.1px;top:126px;width:1px;height:46px;background:rgba(255,255,255,0.07)"></div>
<div class="a" style="left:235.1px;top:174px;width:1px;height:47px;background:rgba(255,255,255,0.07)"></div>
<div class="a" style="left:235.1px;top:223px;width:1px;height:46px;background:rgba(255,255,255,0.07)"></div>
<div class="a" style="left:235.1px;top:271px;width:1px;height:47px;background:rgba(0,60,80,0.12)"></div>
<div class="a" style="left:269.6px;top:126px;width:1px;height:46px;background:rgba(255,255,255,0.07)"></div>
<div class="a" style="left:269.6px;top:174px;width:1px;height:47px;background:rgba(255,255,255,0.07)"></div>
<div class="a" style="left:269.6px;top:223px;width:1px;height:46px;background:rgba(255,255,255,0.07)"></div>
<div class="a" style="left:269.6px;top:271px;width:1px;height:47px;background:rgba(0,60,80,0.12)"></div>
<div class="a" style="left:304.1px;top:126px;width:1px;height:46px;background:rgba(255,255,255,0.07)"></div>
<div class="a" style="left:304.1px;top:174px;width:1px;height:47px;background:rgba(255,255,255,0.07)"></div>
<div class="a" style="left:304.1px;top:223px;width:1px;height:46px;background:rgba(255,255,255,0.07)"></div>
<div class="a" style="left:304.1px;top:271px;width:1px;height:47px;background:rgba(0,60,80,0.12)"></div>
<div class="a" style="left:338.7px;top:126px;width:1px;height:46px;background:rgba(255,255,255,0.07)"></div>
<div class="a" style="left:338.7px;top:174px;width:1px;height:47px;background:rgba(255,255,255,0.07)"></div>
<div class="a" style="left:338.7px;top:223px;width:1px;height:46px;background:rgba(255,255,255,0.07)"></div>
<div class="a" style="left:338.7px;top:271px;width:1px;height:47px;background:rgba(0,60,80,0.12)"></div>
<div class="a" style="left:373.2px;top:126px;width:1px;height:46px;background:rgba(255,255,255,0.07)"></div>
<div class="a" style="left:373.2px;top:174px;width:1px;height:47px;background:rgba(255,255,255,0.07)"></div>
<div class="a" style="left:373.2px;top:223px;width:1px;height:46px;background:rgba(255,255,255,0.07)"></div>
<div class="a" style="left:373.2px;top:271px;width:1px;height:47px;background:rgba(0,60,80,0.12)"></div>
<div class="a" style="left:407.8px;top:126px;width:1px;height:46px;background:rgba(255,255,255,0.07)"></div>
<div class="a" style="left:407.8px;top:174px;width:1px;height:47px;background:rgba(255,255,255,0.07)"></div>
<div class="a" style="left:407.8px;top:223px;width:1px;height:46px;background:rgba(255,255,255,0.07)"></div>
<div class="a" style="left:407.8px;top:271px;width:1px;height:47px;background:rgba(0,60,80,0.12)"></div>
<div class="a" style="left:442.3px;top:126px;width:1px;height:46px;background:rgba(255,255,255,0.07)"></div>
<div class="a" style="left:442.3px;top:174px;width:1px;height:47px;background:rgba(255,255,255,0.07)"></div>
<div class="a" style="left:442.3px;top:223px;width:1px;height:46px;background:rgba(255,255,255,0.07)"></div>
<div class="a" style="left:442.3px;top:271px;width:1px;height:47px;background:rgba(0,60,80,0.12)"></div>
<div class="a" style="left:476.9px;top:126px;width:1px;height:46px;background:rgba(255,255,255,0.07)"></div>
<div class="a" style="left:476.9px;top:174px;width:1px;height:47px;background:rgba(255,255,255,0.07)"></div>
<div class="a" style="left:476.9px;top:223px;width:1px;height:46px;background:rgba(255,255,255,0.07)"></div>
<div class="a" style="left:476.9px;top:271px;width:1px;height:47px;background:rgba(0,60,80,0.12)"></div>
<div class="a" style="left:511.4px;top:126px;width:1px;height:46px;background:rgba(255,255,255,0.07)"></div>
<div class="a" style="left:511.4px;top:174px;width:1px;height:47px;background:rgba(255,255,255,0.07)"></div>
<div class="a" style="left:511.4px;top:223px;width:1px;height:46px;background:rgba(255,255,255,0.07)"></div>
<div class="a" style="left:511.4px;top:271px;width:1px;height:47px;background:rgba(0,60,80,0.12)"></div>
<div class="a" style="left:546.0px;top:126px;width:1px;height:46px;background:rgba(255,255,255,0.07)"></div>
<div class="a" style="left:546.0px;top:174px;width:1px;height:47px;background:rgba(255,255,255,0.07)"></div>
<div class="a" style="left:546.0px;top:223px;width:1px;height:46px;background:rgba(255,255,255,0.07)"></div>
<div class="a" style="left:546.0px;top:271px;width:1px;height:47px;background:rgba(0,60,80,0.12)"></div>
<div class="a" style="left:580.5px;top:126px;width:1px;height:46px;background:rgba(255,255,255,0.07)"></div>
<div class="a" style="left:580.5px;top:174px;width:1px;height:47px;background:rgba(255,255,255,0.07)"></div>
<div class="a" style="left:580.5px;top:223px;width:1px;height:46px;background:rgba(255,255,255,0.07)"></div>
<div class="a" style="left:580.5px;top:271px;width:1px;height:47px;background:rgba(0,60,80,0.12)"></div>
<div class="a" style="left:615.1px;top:126px;width:1px;height:46px;background:rgba(255,255,255,0.07)"></div>
<div class="a" style="left:615.1px;top:174px;width:1px;height:47px;background:rgba(255,255,255,0.07)"></div>
<div class="a" style="left:615.1px;top:223px;width:1px;height:46px;background:rgba(255,255,255,0.07)"></div>
<div class="a" style="left:615.1px;top:271px;width:1px;height:47px;background:rgba(0,60,80,0.12)"></div>
<div class="a" style="left:649.6px;top:126px;width:1px;height:46px;background:rgba(255,255,255,0.07)"></div>
<div class="a" style="left:649.6px;top:174px;width:1px;height:47px;background:rgba(255,255,255,0.07)"></div>
<div class="a" style="left:649.6px;top:223px;width:1px;height:46px;background:rgba(255,255,255,0.07)"></div>
<div class="a" style="left:649.6px;top:271px;width:1px;height:47px;background:rgba(0,60,80,0.12)"></div>
<div class="a" style="left:684.2px;top:126px;width:1px;height:46px;background:rgba(255,255,255,0.07)"></div>
<div class="a" style="left:684.2px;top:174px;width:1px;height:47px;background:rgba(255,255,255,0.07)"></div>
<div class="a" style="left:684.2px;top:223px;width:1px;height:46px;background:rgba(255,255,255,0.07)"></div>
<div class="a" style="left:684.2px;top:271px;width:1px;height:47px;background:rgba(0,60,80,0.12)"></div>
<div class="a" style="left:718.8px;top:126px;width:1px;height:46px;background:rgba(255,255,255,0.07)"></div>
<div class="a" style="left:718.8px;top:174px;width:1px;height:47px;background:rgba(255,255,255,0.07)"></div>
<div class="a" style="left:718.8px;top:223px;width:1px;height:46px;background:rgba(255,255,255,0.07)"></div>
<div class="a" style="left:718.8px;top:271px;width:1px;height:47px;background:rgba(0,60,80,0.12)"></div>
<div class="a" style="left:753.3px;top:126px;width:1px;height:46px;background:rgba(255,255,255,0.07)"></div>
<div class="a" style="left:753.3px;top:174px;width:1px;height:47px;background:rgba(255,255,255,0.07)"></div>
<div class="a" style="left:753.3px;top:223px;width:1px;height:46px;background:rgba(255,255,255,0.07)"></div>
<div class="a" style="left:753.3px;top:271px;width:1px;height:47px;background:rgba(0,60,80,0.12)"></div>
<div class="a" style="left:787.8px;top:126px;width:1px;height:46px;background:rgba(255,255,255,0.07)"></div>
<div class="a" style="left:787.8px;top:174px;width:1px;height:47px;background:rgba(255,255,255,0.07)"></div>
<div class="a" style="left:787.8px;top:223px;width:1px;height:46px;background:rgba(255,255,255,0.07)"></div>
<div class="a" style="left:787.8px;top:271px;width:1px;height:47px;background:rgba(0,60,80,0.12)"></div>
<div class="a" style="left:822.4px;top:126px;width:1px;height:46px;background:rgba(255,255,255,0.07)"></div>
<div class="a" style="left:822.4px;top:174px;width:1px;height:47px;background:rgba(255,255,255,0.07)"></div>
<div class="a" style="left:822.4px;top:223px;width:1px;height:46px;background:rgba(255,255,255,0.07)"></div>
<div class="a" style="left:822.4px;top:271px;width:1px;height:47px;background:rgba(0,60,80,0.12)"></div>
<div class="a" style="left:856.9px;top:126px;width:1px;height:46px;background:rgba(255,255,255,0.07)"></div>
<div class="a" style="left:856.9px;top:174px;width:1px;height:47px;background:rgba(255,255,255,0.07)"></div>
<div class="a" style="left:856.9px;top:223px;width:1px;height:46px;background:rgba(255,255,255,0.07)"></div>
<div class="a" style="left:856.9px;top:271px;width:1px;height:47px;background:rgba(0,60,80,0.12)"></div>
<div class="a" style="left:891.5px;top:126px;width:1px;height:46px;background:rgba(255,255,255,0.07)"></div>
<div class="a" style="left:891.5px;top:174px;width:1px;height:47px;background:rgba(255,255,255,0.07)"></div>
<div class="a" style="left:891.5px;top:223px;width:1px;height:46px;background:rgba(255,255,255,0.07)"></div>
<div class="a" style="left:891.5px;top:271px;width:1px;height:47px;background:rgba(0,60,80,0.12)"></div>
<svg class="a" style="left:0;top:0" width="960" height="540" viewBox="0 0 960 540"><path d="M164.0,147.5 L164.8,147.5 L165.6,147.5 L166.4,147.5 L167.2,147.3 L168.0,146.9 L168.8,146.3 L169.6,146.9 L170.4,147.0 L171.2,146.8 L172.0,146.9 L172.8,146.7 L173.6,146.9 L174.4,146.7 L175.2,146.7 L176.0,146.6 L176.8,146.8 L177.6,146.6 L178.4,145.6 L179.2,146.5 L180.0,144.7 L180.8,146.5 L181.6,145.9 L182.4,146.5 L183.2,145.5 L184.0,146.5 L184.8,145.3 L185.6,146.6 L186.4,146.8 L187.2,146.6 L188.0,146.8 L188.8,146.7 L189.6,146.8 L190.4,146.8 L191.2,146.7 L192.0,146.9 L192.8,147.1 L193.6,147.0 L194.4,147.1 L195.2,147.1 L196.0,146.5 L196.8,147.2 L197.6,147.2 L198.4,147.3 L199.2,147.4 L200.0,147.4 L200.8,146.7 L201.6,147.0 L202.4,145.9 L203.2,146.6 L204.0,146.8 L204.8,146.6 L205.6,146.5 L206.4,146.6 L207.2,146.4 L208.0,146.5 L208.8,146.7 L209.6,146.5 L210.4,145.4 L211.2,146.5 L212.0,146.6 L212.8,146.5 L213.6,146.6 L214.4,146.5 L215.2,146.6 L216.0,146.5 L216.8,146.7 L217.6,146.5 L218.4,146.0 L219.2,146.5 L220.0,146.8 L220.8,146.6 L221.6,146.8 L222.4,146.7 L223.2,146.5 L224.0,146.8 L224.8,147.0 L225.6,146.9 L226.4,146.6 L227.2,147.0 L228.0,146.4 L228.8,147.1 L229.6,147.2 L230.4,147.2 L231.2,147.4 L232.0,147.4 L232.8,147.5 L233.6,147.5 L234.4,147.1 L235.2,147.6 L236.0,146.3 L236.8,146.8 L237.6,146.5 L238.4,146.7 L239.2,146.2 L240.0,146.7 L240.8,146.9 L241.6,146.7 L242.4,146.9 L243.2,146.8 L244.0,146.9 L244.8,146.8 L245.6,146.9 L246.4,146.8 L247.2,146.9 L248.0,146.8 L248.8,145.5 L249.6,146.9 L250.4,146.8 L251.2,146.9 L252.0,147.1 L252.8,146.9 L253.6,146.3 L254.4,147.0 L255.2,147.1 L256.0,147.0 L256.8,145.7 L257.6,147.1 L258.4,147.3 L259.2,147.1 L260.0,146.5 L260.8,147.2 L261.6,146.6 L262.4,147.3 L263.2,147.5 L264.0,147.4 L264.8,146.4 L265.6,147.5 L266.4,146.8 L267.2,147.5 L268.0,147.7 L268.8,147.7 L269.6,146.6 L270.4,147.3 L271.2,147.0 L272.0,146.6 L272.8,146.7 L273.6,146.6 L274.4,146.7 L275.2,146.6 L276.0,146.8 L276.8,146.6 L277.6,146.4 L278.4,146.6 L279.2,145.3 L280.0,146.6 L280.8,146.8 L281.6,146.7 L282.4,146.2 L283.2,146.7 L284.0,146.8 L284.8,146.7 L285.6,145.1 L286.4,146.8 L287.2,145.4 L288.0,146.8 L288.8,146.9 L289.6,146.9 L290.4,147.0 L291.2,146.9 L292.0,147.1 L292.8,147.0 L293.6,146.9 L294.4,147.1 L295.2,147.2 L296.0,147.2 L296.8,147.3 L297.6,147.2 L298.4,146.1 L299.2,147.3 L300.0,146.7 L300.8,147.5 L301.6,146.6 L302.4,147.6 L303.2,146.8 L304.0,147.7 L304.8,146.7 L305.6,146.8 L306.4,145.9 L307.2,146.4 L308.0,145.8 L308.8,146.4 L309.6,144.7 L310.4,146.4 L311.2,145.3 L312.0,146.4 L312.8,146.6 L313.6,146.5 L314.4,146.3 L315.2,146.5 L316.0,146.7 L316.8,146.5 L317.6,146.6 L318.4,146.6 L319.2,146.5 L320.0,146.6 L320.8,146.2 L321.6,146.6 L322.4,146.6 L323.2,146.7 L324.0,145.5 L324.8,146.8 L325.6,147.0 L326.4,146.8 L327.2,147.0 L328.0,146.9 L328.8,146.5 L329.6,147.0 L330.4,146.5 L331.2,147.1 L332.0,145.9 L332.8,147.2 L333.6,147.4 L334.4,147.3 L335.2,147.1 L336.0,147.5 L336.8,147.6 L337.6,147.6 L338.4,147.1 L339.2,147.4 L340.0,145.4 L340.8,146.3 L341.6,145.8 L342.4,146.2 L343.2,144.4 L344.0,146.3 L344.8,146.5 L345.6,146.3 L346.4,144.5 L347.2,146.3 L348.0,146.5 L348.8,146.3 L349.6,146.5 L350.4,146.3 L351.2,146.0 L352.0,146.4 L352.8,146.5 L353.6,146.4 L354.4,146.6 L355.2,146.5 L356.0,144.8 L356.8,146.5 L357.6,145.8 L358.4,146.6 L359.2,146.8 L360.0,146.7 L360.8,146.6 L361.6,146.8 L362.4,147.0 L363.2,146.9 L364.0,146.8 L364.8,147.0 L365.6,147.0 L366.4,147.1 L367.2,146.5 L368.0,147.2 L368.8,147.3 L369.6,147.3 L370.4,147.2 L371.2,147.5 L372.0,146.4 L372.8,147.7 L373.6,147.0 L374.4,146.8 L375.2,145.9 L376.0,146.1 L376.8,146.1 L377.6,146.1 L378.4,145.8 L379.2,146.1 L380.0,146.0 L380.8,146.1 L381.6,145.7 L382.4,146.1 L383.2,144.4 L384.0,146.2 L384.8,145.1 L385.6,146.2 L386.4,145.6 L387.2,146.2 L388.0,145.2 L388.8,146.3 L389.6,146.2 L390.4,146.4 L391.2,146.0 L392.0,146.4 L392.8,146.0 L393.6,146.5 L394.4,146.7 L395.2,146.6 L396.0,146.8 L396.8,146.7 L397.6,146.7 L398.4,146.8 L399.2,146.4 L400.0,146.9 L400.8,147.1 L401.6,147.1 L402.4,146.2 L403.2,147.2 L404.0,146.9 L404.8,147.4 L405.6,147.2 L406.4,147.5 L407.2,147.1 L408.0,147.7 L408.8,146.2 L409.6,147.1 L410.4,146.8 L411.2,147.0 L412.0,147.2 L412.8,147.0 L413.6,147.1 L414.4,147.0 L415.2,147.2 L416.0,147.0 L416.8,147.2 L417.6,147.0 L418.4,147.2 L419.2,147.1 L420.0,145.7 L420.8,147.1 L421.6,147.2 L422.4,147.1 L423.2,147.0 L424.0,147.1 L424.8,146.4 L425.6,147.1 L426.4,146.7 L427.2,147.2 L428.0,145.8 L428.8,147.2 L429.6,147.3 L430.4,147.2 L431.2,147.3 L432.0,147.3 L432.8,146.3 L433.6,147.3 L434.4,147.5 L435.2,147.4 L436.0,146.7 L436.8,147.4 L437.6,146.7 L438.4,147.5 L439.2,147.6 L440.0,147.5 L440.8,147.2 L441.6,147.5 L442.4,147.3 L443.2,147.2 L444.0,146.9 L444.8,146.5 L445.6,146.2 L446.4,146.4 L447.2,146.5 L448.0,146.3 L448.8,146.3 L449.6,146.2 L450.4,145.5 L451.2,146.1 L452.0,146.3 L452.8,146.0 L453.6,146.2 L454.4,146.0 L455.2,146.1 L456.0,145.9 L456.8,145.9 L457.6,145.9 L458.4,144.5 L459.2,146.0 L460.0,145.0 L460.8,146.1 L461.6,145.4 L462.4,146.2 L463.2,145.3 L464.0,146.3 L464.8,146.6 L465.6,146.5 L466.4,145.8 L467.2,146.7 L468.0,146.4 L468.8,146.8 L469.6,146.0 L470.4,147.0 L471.2,146.3 L472.0,147.2 L472.8,147.2 L473.6,147.3 L474.4,147.5 L475.2,147.4 L476.0,147.6 L476.8,147.5 L477.6,147.2 L478.4,146.8 L479.2,146.6 L480.0,146.4 L480.8,146.4 L481.6,146.4 L482.4,145.3 L483.2,146.3 L484.0,146.4 L484.8,146.2 L485.6,145.2 L486.4,146.1 L487.2,144.2 L488.0,145.9 L488.8,143.8 L489.6,145.9 L490.4,145.2 L491.2,145.8 L492.0,145.9 L492.8,145.8 L493.6,145.6 L494.4,145.9 L495.2,145.5 L496.0,146.0 L496.8,144.8 L497.6,146.1 L498.4,146.4 L499.2,146.3 L500.0,146.6 L500.8,146.5 L501.6,145.4 L502.4,146.7 L503.2,145.5 L504.0,146.9 L504.8,145.5 L505.6,147.1 L506.4,146.6 L507.2,147.3 L508.0,146.5 L508.8,147.4 L509.6,146.8 L510.4,147.6 L511.2,147.3 L512.0,147.4 L512.8,145.9 L513.6,146.5 L514.4,146.3 L515.2,146.5 L516.0,145.6 L516.8,146.5 L517.6,146.6 L518.4,146.5 L519.2,146.4 L520.0,146.5 L520.8,144.7 L521.6,146.6 L522.4,146.6 L523.2,146.6 L524.0,145.3 L524.8,146.6 L525.6,146.6 L526.4,146.6 L527.2,146.6 L528.0,146.7 L528.8,146.8 L529.6,146.7 L530.4,146.9 L531.2,146.8 L532.0,145.2 L532.8,146.9 L533.6,146.5 L534.4,146.9 L535.2,146.5 L536.0,147.0 L536.8,147.2 L537.6,147.1 L538.4,147.3 L539.2,147.2 L540.0,147.3 L540.8,147.3 L541.6,147.2 L542.4,147.4 L543.2,147.5 L544.0,147.5 L544.8,147.5 L545.6,147.7 L546.4,147.6 L547.2,146.9 L548.0,145.3 L548.8,146.3 L549.6,146.4 L550.4,146.3 L551.2,144.9 L552.0,146.3 L552.8,146.4 L553.6,146.4 L554.4,146.4 L555.2,146.4 L556.0,146.3 L556.8,146.4 L557.6,145.7 L558.4,146.4 L559.2,144.6 L560.0,146.5 L560.8,146.6 L561.6,146.5 L562.4,145.5 L563.2,146.6 L564.0,146.6 L564.8,146.6 L565.6,146.4 L566.4,146.7 L567.2,146.9 L568.0,146.8 L568.8,146.9 L569.6,146.9 L570.4,147.0 L571.2,146.9 L572.0,146.6 L572.8,147.1 L573.6,146.7 L574.4,147.2 L575.2,147.3 L576.0,147.3 L576.8,147.5 L577.6,147.4 L578.4,147.1 L579.2,147.6 L580.0,147.8 L580.8,147.6 L581.6,147.1 L582.4,146.4 L583.2,146.4 L584.0,146.2 L584.8,146.3 L585.6,146.2 L586.4,146.3 L587.2,146.2 L588.0,145.7 L588.8,146.2 L589.6,146.4 L590.4,146.2 L591.2,146.4 L592.0,146.3 L592.8,145.9 L593.6,146.3 L594.4,146.2 L595.2,146.3 L596.0,145.4 L596.8,146.4 L597.6,145.2 L598.4,146.4 L599.2,146.4 L600.0,146.5 L600.8,145.3 L601.6,146.6 L602.4,146.6 L603.2,146.7 L604.0,146.6 L604.8,146.8 L605.6,146.8 L606.4,146.9 L607.2,146.6 L608.0,147.0 L608.8,146.6 L609.6,147.2 L610.4,146.9 L611.2,147.3 L612.0,146.5 L612.8,147.5 L613.6,147.6 L614.4,147.6 L615.2,147.7 L616.0,147.5 L616.8,147.3 L617.6,147.1 L618.4,147.2 L619.2,147.1 L620.0,147.2 L620.8,147.1 L621.6,146.5 L622.4,147.1 L623.2,147.1 L624.0,147.1 L624.8,147.3 L625.6,147.1 L626.4,147.3 L627.2,147.1 L628.0,147.3 L628.8,147.2 L629.6,146.5 L630.4,147.2 L631.2,147.3 L632.0,147.2 L632.8,146.6 L633.6,147.2 L634.4,147.3 L635.2,147.3 L636.0,147.4 L636.8,147.3 L637.6,146.6 L638.4,147.3 L639.2,147.3 L640.0,147.4 L640.8,147.5 L641.6,147.4 L642.4,147.1 L643.2,147.5 L644.0,147.5 L644.8,147.5 L645.6,147.7 L646.4,147.6 L647.2,147.1 L648.0,147.6 L648.8,147.2 L649.6,147.7 L650.4,147.3 L651.2,147.1 L652.0,147.1 L652.8,146.9 L653.6,147.1 L654.4,146.9 L655.2,146.2 L656.0,146.9 L656.8,146.1 L657.6,146.9 L658.4,146.7 L659.2,147.0 L660.0,147.0 L660.8,147.0 L661.6,145.8 L662.4,147.0 L663.2,146.4 L664.0,147.0 L664.8,146.8 L665.6,147.0 L666.4,145.8 L667.2,147.1 L668.0,146.8 L668.8,147.1 L669.6,147.3 L670.4,147.1 L671.2,146.9 L672.0,147.2 L672.8,147.3 L673.6,147.2 L674.4,147.3 L675.2,147.3 L676.0,147.4 L676.8,147.3 L677.6,147.4 L678.4,147.4 L679.2,147.5 L680.0,147.4 L680.8,147.3 L681.6,147.5 L682.4,147.1 L683.2,147.5 L684.0,147.6 L684.8,147.3 L685.6,147.0 L686.4,146.5 L687.2,146.3 L688.0,146.4 L688.8,146.2 L689.6,146.4 L690.4,146.0 L691.2,146.3 L692.0,145.5 L692.8,146.2 L693.6,146.4 L694.4,146.1 L695.2,146.2 L696.0,146.1 L696.8,146.2 L697.6,146.0 L698.4,146.1 L699.2,146.0 L700.0,146.2 L700.8,146.0 L701.6,145.7 L702.4,146.0 L703.2,146.3 L704.0,146.1 L704.8,144.3 L705.6,146.2 L706.4,145.9 L707.2,146.3 L708.0,146.6 L708.8,146.5 L709.6,146.6 L710.4,146.6 L711.2,146.8 L712.0,146.8 L712.8,146.2 L713.6,146.9 L714.4,147.1 L715.2,147.1 L716.0,147.1 L716.8,147.3 L717.6,147.4 L718.4,147.5 L719.2,147.4 L720.0,146.9 L720.8,146.6 L721.6,146.5 L722.4,145.1 L723.2,146.5 L724.0,146.5 L724.8,146.5 L725.6,146.7 L726.4,146.6 L727.2,146.7 L728.0,146.6 L728.8,146.8 L729.6,146.6 L730.4,146.8 L731.2,146.7 L732.0,146.8 L732.8,146.7 L733.6,146.8 L734.4,146.7 L735.2,146.4 L736.0,146.8 L736.8,145.4 L737.6,146.8 L738.4,146.9 L739.2,146.9 L740.0,146.7 L740.8,146.9 L741.6,146.2 L742.4,147.0 L743.2,146.3 L744.0,147.0 L744.8,147.2 L745.6,147.1 L746.4,147.0 L747.2,147.1 L748.0,146.9 L748.8,147.2 L749.6,146.5 L750.4,147.2 L751.2,147.4 L752.0,147.3 L752.8,147.4 L753.6,147.1 L754.4,145.6 L755.2,146.1 L756.0,145.5 L756.8,145.8 L757.6,145.6 L758.4,145.7 L759.2,145.9 L760.0,145.6 L760.8,145.8 L761.6,145.6 L762.4,145.7 L763.2,145.5 L764.0,143.9 L764.8,145.5 L765.6,145.7 L766.4,145.5 L767.2,145.5 L768.0,145.6 L768.8,145.8 L769.6,145.6 L770.4,145.4 L771.2,145.7 L772.0,143.7 L772.8,145.9 L773.6,145.7 L774.4,146.0 L775.2,146.3 L776.0,146.2 L776.8,145.6 L777.6,146.4 L778.4,144.7 L779.2,146.6 L780.0,146.8 L780.8,146.8 L781.6,147.0 L782.4,147.0 L783.2,147.0 L784.0,147.1 L784.8,147.4 L785.6,147.3 L786.4,146.4 L787.2,147.5 L788.0,147.7 L788.8,147.0 L789.6,144.8 L790.4,146.2 L791.2,146.4 L792.0,146.2 L792.8,144.5 L793.6,146.2 L794.4,146.2 L795.2,146.3 L796.0,145.1 L796.8,146.3 L797.6,145.8 L798.4,146.3 L799.2,146.0 L800.0,146.3 L800.8,146.6 L801.6,146.4 L802.4,146.4 L803.2,146.4 L804.0,146.1 L804.8,146.5 L805.6,146.6 L806.4,146.5 L807.2,145.9 L808.0,146.6 L808.8,146.4 L809.6,146.7 L810.4,146.9 L811.2,146.8 L812.0,147.0 L812.8,146.9 L813.6,147.0 L814.4,147.0 L815.2,146.4 L816.0,147.0 L816.8,147.2 L817.6,147.2 L818.4,146.3 L819.2,147.3 L820.0,147.1 L820.8,147.4 L821.6,147.5 L822.4,147.5 L823.2,146.3 L824.0,146.2 L824.8,145.9 L825.6,145.7 L826.4,145.8 L827.2,145.6 L828.0,145.8 L828.8,145.6 L829.6,145.4 L830.4,145.5 L831.2,145.8 L832.0,145.5 L832.8,144.6 L833.6,145.5 L834.4,145.6 L835.2,145.5 L836.0,145.3 L836.8,145.5 L837.6,145.7 L838.4,145.5 L839.2,144.1 L840.0,145.6 L840.8,145.8 L841.6,145.7 L842.4,146.0 L843.2,145.8 L844.0,146.1 L844.8,146.0 L845.6,145.9 L846.4,146.2 L847.2,146.5 L848.0,146.4 L848.8,146.6 L849.6,146.6 L850.4,145.9 L851.2,146.8 L852.0,147.0 L852.8,147.0 L853.6,146.9 L854.4,147.2 L855.2,147.5 L856.0,147.4 L856.8,146.5 L857.6,147.4 L858.4,147.3 L859.2,146.9 L860.0,147.1 L860.8,147.0 L861.6,146.0 L862.4,147.0 L863.2,147.0 L864.0,147.0 L864.8,146.0 L865.6,147.0 L866.4,147.2 L867.2,147.0 L868.0,145.9 L868.8,147.0 L869.6,147.1 L870.4,147.1 L871.2,147.2 L872.0,147.1 L872.8,146.2 L873.6,147.1 L874.4,146.9 L875.2,147.1 L876.0,147.3 L876.8,147.2 L877.6,147.3 L878.4,147.2 L879.2,146.2 L880.0,147.3 L880.8,147.4 L881.6,147.3 L882.4,147.5 L883.2,147.4 L884.0,146.6 L884.8,147.4 L885.6,147.2 L886.4,147.5 L887.2,147.6 L888.0,147.5 L888.8,147.7 L889.6,147.6 L890.4,147.7 L891.2,147.7 L892.0,147.2 L892.8,147.2 L893.6,146.9 L894.4,146.8 L895.2,147.0 L896.0,146.8 L896.8,145.7 L896.8,152.3 L896.0,152.2 L895.2,152.2 L894.4,152.2 L893.6,153.3 L892.8,151.8 L892.0,151.4 L891.2,151.3 L890.4,151.3 L889.6,151.4 L888.8,151.3 L888.0,151.5 L887.2,151.4 L886.4,151.5 L885.6,151.5 L884.8,151.6 L884.0,152.4 L883.2,151.6 L882.4,151.6 L881.6,151.7 L880.8,151.8 L880.0,151.7 L879.2,152.6 L878.4,151.8 L877.6,151.8 L876.8,151.8 L876.0,152.1 L875.2,151.9 L874.4,151.7 L873.6,151.9 L872.8,152.3 L872.0,151.9 L871.2,151.8 L870.4,151.9 L869.6,151.9 L868.8,152.0 L868.0,153.2 L867.2,152.0 L866.4,152.7 L865.6,152.0 L864.8,153.1 L864.0,152.0 L863.2,152.0 L862.4,152.0 L861.6,152.4 L860.8,152.0 L860.0,151.9 L859.2,152.1 L858.4,151.8 L857.6,151.6 L856.8,152.0 L856.0,151.6 L855.2,151.5 L854.4,151.8 L853.6,151.9 L852.8,152.0 L852.0,151.9 L851.2,152.2 L850.4,153.5 L849.6,152.4 L848.8,152.4 L848.0,152.6 L847.2,152.5 L846.4,152.8 L845.6,152.9 L844.8,153.0 L844.0,152.9 L843.2,153.2 L842.4,153.1 L841.6,153.3 L840.8,153.1 L840.0,153.4 L839.2,153.2 L838.4,153.5 L837.6,153.3 L836.8,153.5 L836.0,153.3 L835.2,153.5 L834.4,153.3 L833.6,153.5 L832.8,154.4 L832.0,153.5 L831.2,153.6 L830.4,153.5 L829.6,153.3 L828.8,153.4 L828.0,153.7 L827.2,153.4 L826.4,153.5 L825.6,153.3 L824.8,153.3 L824.0,152.8 L823.2,153.2 L822.4,151.5 L821.6,151.5 L820.8,151.6 L820.0,151.9 L819.2,151.7 L818.4,151.7 L817.6,151.8 L816.8,151.9 L816.0,152.0 L815.2,152.1 L814.4,152.0 L813.6,153.5 L812.8,152.1 L812.0,152.6 L811.2,152.2 L810.4,152.1 L809.6,152.3 L808.8,153.1 L808.0,152.4 L807.2,152.3 L806.4,152.5 L805.6,153.3 L804.8,152.5 L804.0,152.5 L803.2,152.6 L802.4,153.1 L801.6,152.6 L800.8,152.7 L800.0,152.7 L799.2,152.5 L798.4,152.7 L797.6,152.8 L796.8,152.7 L796.0,152.7 L795.2,152.7 L794.4,152.8 L793.6,152.8 L792.8,153.9 L792.0,152.8 L791.2,152.8 L790.4,152.8 L789.6,152.5 L788.8,152.0 L788.0,151.3 L787.2,151.5 L786.4,151.6 L785.6,151.7 L784.8,151.6 L784.0,151.9 L783.2,151.9 L782.4,152.0 L781.6,152.2 L780.8,152.2 L780.0,153.0 L779.2,152.4 L778.4,152.3 L777.6,152.6 L776.8,152.5 L776.0,152.8 L775.2,154.8 L774.4,153.0 L773.6,152.8 L772.8,153.1 L772.0,153.0 L771.2,153.3 L770.4,153.8 L769.6,153.4 L768.8,154.3 L768.0,153.4 L767.2,153.3 L766.4,153.5 L765.6,155.4 L764.8,153.5 L764.0,155.8 L763.2,153.5 L762.4,153.5 L761.6,153.4 L760.8,154.2 L760.0,153.4 L759.2,155.2 L758.4,153.3 L757.6,153.5 L756.8,153.2 L756.0,154.3 L755.2,152.9 L754.4,152.7 L753.6,151.9 L752.8,151.8 L752.0,151.7 L751.2,152.7 L750.4,151.8 L749.6,151.6 L748.8,151.8 L748.0,152.7 L747.2,151.9 L746.4,152.2 L745.6,151.9 L744.8,153.0 L744.0,152.0 L743.2,152.2 L742.4,152.0 L741.6,152.7 L740.8,152.1 L740.0,153.1 L739.2,152.1 L738.4,152.4 L737.6,152.2 L736.8,152.4 L736.0,152.2 L735.2,152.2 L734.4,152.3 L733.6,154.0 L732.8,152.3 L732.0,152.4 L731.2,152.3 L730.4,152.2 L729.6,152.4 L728.8,153.7 L728.0,152.4 L727.2,153.6 L726.4,152.4 L725.6,152.5 L724.8,152.5 L724.0,152.5 L723.2,152.5 L722.4,152.3 L721.6,152.5 L720.8,153.5 L720.0,152.1 L719.2,151.8 L718.4,151.5 L717.6,151.5 L716.8,151.7 L716.0,152.7 L715.2,151.9 L714.4,152.3 L713.6,152.1 L712.8,152.1 L712.0,152.2 L711.2,152.1 L710.4,152.4 L709.6,153.9 L708.8,152.5 L708.0,154.0 L707.2,152.7 L706.4,152.6 L705.6,152.8 L704.8,153.2 L704.0,152.9 L703.2,154.1 L702.4,153.0 L701.6,153.3 L700.8,153.0 L700.0,153.0 L699.2,153.0 L698.4,153.1 L697.6,153.0 L696.8,154.1 L696.0,152.9 L695.2,152.7 L694.4,152.9 L693.6,153.0 L692.8,152.8 L692.0,152.7 L691.2,152.7 L690.4,152.5 L689.6,152.6 L688.8,152.8 L688.0,152.6 L687.2,152.4 L686.4,152.5 L685.6,152.0 L684.8,151.7 L684.0,151.4 L683.2,151.5 L682.4,151.4 L681.6,151.5 L680.8,152.3 L680.0,151.6 L679.2,152.3 L678.4,151.6 L677.6,151.5 L676.8,151.7 L676.0,151.8 L675.2,151.7 L674.4,151.9 L673.6,151.8 L672.8,153.0 L672.0,151.8 L671.2,151.9 L670.4,151.9 L669.6,152.2 L668.8,151.9 L668.0,152.0 L667.2,151.9 L666.4,152.4 L665.6,152.0 L664.8,152.1 L664.0,152.0 L663.2,153.3 L662.4,152.0 L661.6,152.4 L660.8,152.0 L660.0,151.9 L659.2,152.0 L658.4,152.6 L657.6,152.1 L656.8,153.4 L656.0,152.1 L655.2,152.0 L654.4,152.1 L653.6,151.9 L652.8,152.1 L652.0,152.0 L651.2,151.9 L650.4,151.7 L649.6,151.3 L648.8,151.7 L648.0,151.4 L647.2,151.4 L646.4,151.4 L645.6,151.4 L644.8,151.5 L644.0,152.2 L643.2,151.5 L642.4,152.8 L641.6,151.6 L640.8,151.9 L640.0,151.6 L639.2,151.5 L638.4,151.7 L637.6,151.7 L636.8,151.7 L636.0,151.7 L635.2,151.7 L634.4,152.1 L633.6,151.8 L632.8,152.9 L632.0,151.8 L631.2,152.0 L630.4,151.8 L629.6,152.6 L628.8,151.8 L628.0,153.3 L627.2,151.9 L626.4,151.7 L625.6,151.9 L624.8,152.3 L624.0,151.9 L623.2,152.1 L622.4,151.9 L621.6,152.1 L620.8,151.9 L620.0,152.0 L619.2,151.9 L618.4,153.2 L617.6,151.9 L616.8,152.1 L616.0,151.5 L615.2,151.3 L614.4,151.4 L613.6,152.3 L612.8,151.5 L612.0,151.5 L611.2,151.7 L610.4,151.6 L609.6,151.8 L608.8,152.3 L608.0,152.0 L607.2,152.2 L606.4,152.1 L605.6,152.1 L604.8,152.2 L604.0,152.1 L603.2,152.3 L602.4,152.2 L601.6,152.4 L600.8,152.8 L600.0,152.5 L599.2,152.7 L598.4,152.6 L597.6,152.5 L596.8,152.6 L596.0,153.0 L595.2,152.7 L594.4,152.6 L593.6,152.7 L592.8,152.6 L592.0,152.7 L591.2,152.6 L590.4,152.8 L589.6,152.7 L588.8,152.8 L588.0,152.6 L587.2,152.8 L586.4,152.6 L585.6,152.8 L584.8,153.1 L584.0,152.8 L583.2,152.7 L582.4,152.6 L581.6,151.9 L580.8,151.4 L580.0,151.5 L579.2,151.4 L578.4,151.6 L577.6,151.6 L576.8,151.5 L576.0,151.7 L575.2,151.8 L574.4,151.8 L573.6,152.2 L572.8,151.9 L572.0,152.1 L571.2,152.1 L570.4,152.3 L569.6,152.1 L568.8,152.0 L568.0,152.2 L567.2,152.2 L566.4,152.3 L565.6,153.9 L564.8,152.4 L564.0,152.2 L563.2,152.4 L562.4,152.3 L561.6,152.5 L560.8,152.6 L560.0,152.5 L559.2,153.0 L558.4,152.6 L557.6,152.5 L556.8,152.6 L556.0,154.0 L555.2,152.6 L554.4,153.9 L553.6,152.6 L552.8,154.1 L552.0,152.7 L551.2,152.5 L550.4,152.7 L549.6,153.1 L548.8,152.7 L548.0,153.4 L547.2,152.1 L546.4,151.4 L545.6,151.3 L544.8,151.4 L544.0,151.5 L543.2,152.6 L542.4,151.6 L541.6,153.0 L540.8,151.7 L540.0,152.2 L539.2,151.8 L538.4,151.7 L537.6,151.9 L536.8,151.8 L536.0,152.0 L535.2,152.1 L534.4,152.1 L533.6,152.1 L532.8,152.1 L532.0,152.0 L531.2,152.2 L530.4,153.3 L529.6,152.3 L528.8,152.3 L528.0,152.3 L527.2,152.2 L526.4,152.4 L525.6,153.2 L524.8,152.4 L524.0,153.8 L523.2,152.4 L522.4,153.9 L521.6,152.4 L520.8,153.1 L520.0,152.5 L519.2,154.2 L518.4,152.5 L517.6,152.4 L516.8,152.5 L516.0,154.1 L515.2,152.5 L514.4,152.7 L513.6,152.5 L512.8,152.6 L512.0,151.6 L511.2,151.2 L510.4,151.4 L509.6,151.5 L508.8,151.6 L508.0,152.3 L507.2,151.7 L506.4,151.9 L505.6,151.9 L504.8,151.9 L504.0,152.1 L503.2,152.9 L502.4,152.3 L501.6,152.3 L500.8,152.5 L500.0,153.9 L499.2,152.7 L498.4,152.7 L497.6,152.9 L496.8,153.4 L496.0,153.0 L495.2,153.2 L494.4,153.1 L493.6,153.0 L492.8,153.2 L492.0,154.0 L491.2,153.2 L490.4,153.4 L489.6,153.1 L488.8,153.3 L488.0,153.1 L487.2,153.4 L486.4,152.9 L485.6,153.5 L484.8,152.8 L484.0,152.9 L483.2,152.7 L482.4,154.2 L481.6,152.6 L480.8,154.0 L480.0,152.6 L479.2,152.4 L478.4,152.2 L477.6,151.9 L476.8,151.5 L476.0,151.4 L475.2,151.6 L474.4,152.3 L473.6,151.7 L472.8,151.6 L472.0,151.8 L471.2,151.8 L470.4,152.0 L469.6,152.5 L468.8,152.2 L468.0,152.3 L467.2,152.3 L466.4,154.0 L465.6,152.5 L464.8,152.8 L464.0,152.7 L463.2,154.0 L462.4,152.8 L461.6,152.7 L460.8,152.9 L460.0,152.8 L459.2,153.0 L458.4,152.8 L457.6,153.1 L456.8,152.8 L456.0,153.1 L455.2,155.2 L454.4,153.0 L453.6,152.8 L452.8,153.0 L452.0,154.5 L451.2,152.9 L450.4,153.6 L449.6,152.8 L448.8,153.2 L448.0,152.7 L447.2,152.6 L446.4,152.6 L445.6,152.7 L444.8,152.5 L444.0,153.6 L443.2,151.8 L442.4,152.6 L441.6,151.5 L440.8,152.2 L440.0,151.5 L439.2,151.4 L438.4,151.5 L437.6,151.4 L436.8,151.6 L436.0,152.6 L435.2,151.6 L434.4,151.6 L433.6,151.7 L432.8,151.6 L432.0,151.7 L431.2,152.6 L430.4,151.8 L429.6,151.7 L428.8,151.8 L428.0,151.7 L427.2,151.8 L426.4,151.8 L425.6,151.9 L424.8,151.9 L424.0,151.9 L423.2,151.8 L422.4,151.9 L421.6,152.3 L420.8,151.9 L420.0,152.2 L419.2,151.9 L418.4,151.8 L417.6,152.0 L416.8,151.8 L416.0,152.0 L415.2,151.9 L414.4,152.0 L413.6,152.5 L412.8,152.0 L412.0,152.5 L411.2,152.0 L410.4,151.9 L409.6,151.9 L408.8,151.6 L408.0,151.3 L407.2,151.3 L406.4,151.5 L405.6,151.5 L404.8,151.6 L404.0,152.5 L403.2,151.8 L402.4,151.8 L401.6,151.9 L400.8,152.2 L400.0,152.1 L399.2,152.9 L398.4,152.2 L397.6,152.8 L396.8,152.3 L396.0,153.3 L395.2,152.4 L394.4,152.3 L393.6,152.5 L392.8,152.5 L392.0,152.6 L391.2,152.4 L390.4,152.6 L389.6,153.4 L388.8,152.7 L388.0,152.8 L387.2,152.8 L386.4,154.1 L385.6,152.8 L384.8,153.1 L384.0,152.8 L383.2,153.8 L382.4,152.9 L381.6,152.8 L380.8,152.9 L380.0,153.7 L379.2,152.9 L378.4,153.6 L377.6,152.9 L376.8,152.9 L376.0,152.9 L375.2,152.9 L374.4,152.2 L373.6,152.7 L372.8,151.3 L372.0,151.4 L371.2,151.5 L370.4,152.4 L369.6,151.7 L368.8,151.6 L368.0,151.8 L367.2,152.2 L366.4,151.9 L365.6,152.0 L364.8,152.0 L364.0,152.0 L363.2,152.1 L362.4,152.3 L361.6,152.2 L360.8,153.8 L360.0,152.3 L359.2,153.2 L358.4,152.4 L357.6,152.6 L356.8,152.5 L356.0,152.6 L355.2,152.5 L354.4,153.0 L353.6,152.6 L352.8,152.8 L352.0,152.6 L351.2,152.9 L350.4,152.7 L349.6,152.5 L348.8,152.7 L348.0,152.6 L347.2,152.7 L346.4,152.5 L345.6,152.7 L344.8,152.6 L344.0,152.7 L343.2,152.7 L342.4,152.8 L341.6,153.3 L340.8,152.7 L340.0,152.0 L339.2,151.6 L338.4,151.5 L337.6,151.4 L336.8,151.9 L336.0,151.5 L335.2,152.0 L334.4,151.7 L333.6,151.9 L332.8,151.8 L332.0,152.0 L331.2,151.9 L330.4,152.1 L329.6,152.0 L328.8,152.9 L328.0,152.1 L327.2,152.8 L326.4,152.2 L325.6,152.0 L324.8,152.2 L324.0,153.6 L323.2,152.3 L322.4,152.2 L321.6,152.4 L320.8,153.0 L320.0,152.4 L319.2,152.5 L318.4,152.4 L317.6,152.8 L316.8,152.5 L316.0,152.4 L315.2,152.5 L314.4,152.3 L313.6,152.5 L312.8,152.4 L312.0,152.6 L311.2,152.6 L310.4,152.6 L309.6,153.5 L308.8,152.6 L308.0,153.0 L307.2,152.6 L306.4,152.4 L305.6,152.2 L304.8,152.6 L304.0,151.3 L303.2,151.3 L302.4,151.4 L301.6,151.4 L300.8,151.5 L300.0,151.5 L299.2,151.7 L298.4,151.6 L297.6,151.8 L296.8,151.9 L296.0,151.8 L295.2,152.6 L294.4,151.9 L293.6,151.8 L292.8,152.0 L292.0,151.9 L291.2,152.1 L290.4,152.2 L289.6,152.1 L288.8,153.1 L288.0,152.2 L287.2,152.2 L286.4,152.2 L285.6,152.3 L284.8,152.3 L284.0,152.1 L283.2,152.3 L282.4,152.7 L281.6,152.3 L280.8,152.6 L280.0,152.4 L279.2,154.0 L278.4,152.4 L277.6,152.4 L276.8,152.4 L276.0,152.2 L275.2,152.4 L274.4,152.4 L273.6,152.4 L272.8,154.1 L272.0,152.4 L271.2,152.7 L270.4,151.7 L269.6,151.3 L268.8,151.3 L268.0,152.2 L267.2,151.5 L266.4,151.4 L265.6,151.5 L264.8,151.6 L264.0,151.6 L263.2,151.6 L262.4,151.7 L261.6,151.7 L260.8,151.8 L260.0,152.6 L259.2,151.9 L258.4,151.7 L257.6,151.9 L256.8,153.0 L256.0,152.0 L255.2,151.9 L254.4,152.0 L253.6,152.3 L252.8,152.1 L252.0,151.9 L251.2,152.1 L250.4,153.7 L249.6,152.1 L248.8,152.1 L248.0,152.2 L247.2,152.0 L246.4,152.2 L245.6,152.1 L244.8,152.2 L244.0,153.3 L243.2,152.2 L242.4,152.6 L241.6,152.3 L240.8,152.7 L240.0,152.3 L239.2,152.4 L238.4,152.3 L237.6,152.1 L236.8,152.2 L236.0,151.7 L235.2,151.4 L234.4,151.4 L233.6,151.5 L232.8,152.3 L232.0,151.6 L231.2,151.6 L230.4,151.8 L229.6,152.0 L228.8,151.9 L228.0,152.0 L227.2,152.0 L226.4,152.2 L225.6,152.1 L224.8,152.7 L224.0,152.2 L223.2,153.1 L222.4,152.3 L221.6,153.6 L220.8,152.4 L220.0,152.4 L219.2,152.5 L218.4,152.5 L217.6,152.5 L216.8,152.6 L216.0,152.5 L215.2,152.9 L214.4,152.5 L213.6,152.4 L212.8,152.5 L212.0,153.6 L211.2,152.5 L210.4,153.4 L209.6,152.5 L208.8,152.3 L208.0,152.5 L207.2,152.8 L206.4,152.4 L205.6,152.5 L204.8,152.4 L204.0,153.5 L203.2,152.4 L202.4,152.4 L201.6,152.0 L200.8,152.4 L200.0,151.6 L199.2,151.8 L198.4,151.7 L197.6,153.0 L196.8,151.8 L196.0,152.0 L195.2,151.9 L194.4,151.8 L193.6,152.0 L192.8,152.5 L192.0,152.1 L191.2,152.1 L190.4,152.2 L189.6,152.2 L188.8,152.3 L188.0,152.5 L187.2,152.4 L186.4,152.2 L185.6,152.4 L184.8,153.5 L184.0,152.5 L183.2,152.9 L182.4,152.5 L181.6,153.0 L180.8,152.5 L180.0,153.6 L179.2,152.5 L178.4,152.6 L177.6,152.4 L176.8,152.4 L176.0,152.4 L175.2,152.4 L174.4,152.3 L173.6,152.3 L172.8,152.3 L172.0,152.3 L171.2,152.2 L170.4,153.5 L169.6,152.1 L168.8,152.0 L168.0,152.1 L167.2,151.7 L166.4,151.5 L165.6,151.5 L164.8,151.5 L164.0,152.3Z" fill="#244f16"/><path d="M164.0,194.6 L164.8,195.8 L165.6,195.2 L166.4,195.7 L167.2,195.3 L168.0,195.3 L168.8,195.3 L169.6,195.3 L170.4,194.0 L171.2,195.2 L172.0,195.4 L172.8,195.2 L173.6,195.2 L174.4,195.1 L175.2,195.2 L176.0,195.1 L176.8,195.0 L177.6,195.0 L178.4,193.8 L179.2,195.0 L180.0,194.3 L180.8,194.9 L181.6,193.3 L182.4,194.8 L183.2,194.8 L184.0,194.8 L184.8,194.7 L185.6,194.7 L186.4,193.3 L187.2,194.6 L188.0,194.0 L188.8,194.6 L189.6,194.0 L190.4,194.5 L191.2,193.0 L192.0,194.4 L192.8,194.3 L193.6,194.4 L194.4,194.5 L195.2,194.3 L196.0,193.9 L196.8,194.3 L197.6,192.7 L198.4,194.2 L199.2,193.8 L200.0,194.2 L200.8,194.4 L201.6,193.9 L202.4,193.8 L203.2,193.5 L204.0,193.7 L204.8,193.4 L205.6,193.7 L206.4,193.4 L207.2,193.7 L208.0,193.4 L208.8,193.6 L209.6,193.4 L210.4,190.8 L211.2,193.4 L212.0,193.0 L212.8,193.4 L213.6,193.7 L214.4,193.5 L215.2,191.6 L216.0,193.5 L216.8,193.5 L217.6,193.6 L218.4,193.9 L219.2,193.7 L220.0,193.5 L220.8,193.8 L221.6,191.8 L222.4,193.9 L223.2,194.2 L224.0,194.1 L224.8,194.3 L225.6,194.2 L226.4,194.2 L227.2,194.3 L228.0,194.6 L228.8,194.5 L229.6,194.2 L230.4,194.6 L231.2,194.7 L232.0,194.8 L232.8,194.9 L233.6,195.0 L234.4,195.2 L235.2,195.1 L236.0,194.7 L236.8,194.6 L237.6,194.7 L238.4,194.5 L239.2,194.6 L240.0,194.6 L240.8,194.7 L241.6,194.7 L242.4,193.9 L243.2,194.8 L244.0,194.5 L244.8,194.8 L245.6,195.1 L246.4,194.9 L247.2,194.0 L248.0,195.0 L248.8,195.1 L249.6,195.1 L250.4,195.3 L251.2,195.1 L252.0,195.3 L252.8,195.2 L253.6,195.3 L254.4,195.3 L255.2,195.4 L256.0,195.3 L256.8,195.1 L257.6,195.4 L258.4,195.1 L259.2,195.5 L260.0,195.6 L260.8,195.5 L261.6,195.5 L262.4,195.6 L263.2,194.6 L264.0,195.7 L264.8,195.7 L265.6,195.8 L266.4,194.9 L267.2,195.9 L268.0,196.0 L268.8,195.9 L269.6,196.1 L270.4,195.7 L271.2,195.0 L272.0,195.1 L272.8,194.7 L273.6,195.1 L274.4,195.3 L275.2,195.1 L276.0,195.3 L276.8,195.1 L277.6,194.0 L278.4,195.1 L279.2,193.5 L280.0,195.1 L280.8,195.2 L281.6,195.2 L282.4,195.3 L283.2,195.2 L284.0,194.7 L284.8,195.2 L285.6,193.9 L286.4,195.2 L287.2,194.7 L288.0,195.3 L288.8,195.3 L289.6,195.3 L290.4,195.5 L291.2,195.4 L292.0,195.1 L292.8,195.4 L293.6,195.0 L294.4,195.5 L295.2,195.7 L296.0,195.6 L296.8,195.1 L297.6,195.6 L298.4,195.8 L299.2,195.7 L300.0,195.6 L300.8,195.8 L301.6,196.0 L302.4,195.9 L303.2,195.7 L304.0,196.0 L304.8,195.8 L305.6,195.3 L306.4,195.1 L307.2,195.0 L308.0,194.2 L308.8,195.0 L309.6,193.9 L310.4,195.0 L311.2,195.0 L312.0,195.0 L312.8,193.5 L313.6,195.0 L314.4,195.0 L315.2,195.0 L316.0,195.0 L316.8,195.0 L317.6,194.2 L318.4,195.1 L319.2,194.8 L320.0,195.1 L320.8,194.8 L321.6,195.1 L322.4,194.4 L323.2,195.2 L324.0,195.2 L324.8,195.2 L325.6,195.4 L326.4,195.3 L327.2,195.4 L328.0,195.4 L328.8,195.4 L329.6,195.4 L330.4,195.5 L331.2,195.5 L332.0,195.7 L332.8,195.6 L333.6,195.7 L334.4,195.7 L335.2,195.2 L336.0,195.8 L336.8,195.9 L337.6,195.9 L338.4,195.7 L339.2,195.8 L340.0,194.4 L340.8,194.8 L341.6,195.0 L342.4,194.8 L343.2,194.9 L344.0,194.8 L344.8,194.8 L345.6,194.8 L346.4,195.0 L347.2,194.9 L348.0,193.5 L348.8,194.9 L349.6,194.8 L350.4,194.9 L351.2,195.0 L352.0,194.9 L352.8,193.6 L353.6,195.0 L354.4,195.1 L355.2,195.0 L356.0,195.2 L356.8,195.1 L357.6,195.2 L358.4,195.1 L359.2,194.2 L360.0,195.2 L360.8,195.1 L361.6,195.2 L362.4,195.1 L363.2,195.3 L364.0,195.3 L364.8,195.4 L365.6,195.3 L366.4,195.5 L367.2,194.3 L368.0,195.6 L368.8,195.6 L369.6,195.7 L370.4,195.9 L371.2,195.8 L372.0,196.0 L372.8,196.0 L373.6,195.9 L374.4,195.3 L375.2,194.4 L376.0,194.7 L376.8,194.9 L377.6,194.7 L378.4,194.5 L379.2,194.7 L380.0,194.9 L380.8,194.7 L381.6,194.3 L382.4,194.7 L383.2,194.9 L384.0,194.8 L384.8,194.9 L385.6,194.8 L386.4,193.7 L387.2,194.8 L388.0,193.5 L388.8,194.9 L389.6,194.6 L390.4,194.9 L391.2,195.0 L392.0,195.0 L392.8,194.2 L393.6,195.0 L394.4,194.4 L395.2,195.1 L396.0,194.7 L396.8,195.2 L397.6,195.4 L398.4,195.3 L399.2,195.1 L400.0,195.4 L400.8,195.6 L401.6,195.5 L402.4,195.4 L403.2,195.6 L404.0,195.4 L404.8,195.7 L405.6,194.7 L406.4,195.9 L407.2,196.1 L408.0,196.0 L408.8,194.9 L409.6,195.5 L410.4,195.0 L411.2,195.4 L412.0,195.1 L412.8,195.5 L413.6,195.5 L414.4,195.5 L415.2,194.4 L416.0,195.5 L416.8,194.9 L417.6,195.5 L418.4,195.5 L419.2,195.5 L420.0,195.6 L420.8,195.5 L421.6,195.6 L422.4,195.5 L423.2,195.3 L424.0,195.5 L424.8,195.6 L425.6,195.6 L426.4,195.7 L427.2,195.6 L428.0,195.7 L428.8,195.6 L429.6,195.6 L430.4,195.6 L431.2,195.5 L432.0,195.7 L432.8,195.8 L433.6,195.7 L434.4,195.5 L435.2,195.8 L436.0,195.9 L436.8,195.8 L437.6,195.9 L438.4,195.9 L439.2,195.6 L440.0,195.9 L440.8,196.1 L441.6,196.0 L442.4,196.1 L443.2,195.7 L444.0,195.4 L444.8,195.3 L445.6,195.2 L446.4,195.3 L447.2,195.0 L448.0,195.3 L448.8,195.2 L449.6,195.3 L450.4,194.7 L451.2,195.3 L452.0,195.5 L452.8,195.3 L453.6,195.5 L454.4,195.4 L455.2,195.1 L456.0,195.4 L456.8,195.5 L457.6,195.4 L458.4,195.5 L459.2,195.4 L460.0,195.5 L460.8,195.5 L461.6,195.6 L462.4,195.5 L463.2,195.3 L464.0,195.5 L464.8,194.3 L465.6,195.6 L466.4,195.7 L467.2,195.6 L468.0,194.9 L468.8,195.7 L469.6,195.7 L470.4,195.7 L471.2,195.9 L472.0,195.8 L472.8,195.5 L473.6,195.8 L474.4,196.0 L475.2,195.9 L476.0,195.1 L476.8,196.0 L477.6,195.8 L478.4,195.3 L479.2,195.0 L480.0,195.1 L480.8,194.9 L481.6,195.0 L482.4,195.2 L483.2,195.0 L484.0,193.4 L484.8,194.9 L485.6,194.9 L486.4,194.9 L487.2,195.0 L488.0,194.8 L488.8,194.9 L489.6,194.7 L490.4,194.5 L491.2,194.7 L492.0,194.7 L492.8,194.6 L493.6,192.9 L494.4,194.6 L495.2,194.7 L496.0,194.5 L496.8,194.3 L497.6,194.5 L498.4,194.6 L499.2,194.6 L500.0,194.4 L500.8,194.6 L501.6,193.9 L502.4,194.7 L503.2,194.1 L504.0,194.8 L504.8,194.6 L505.6,194.9 L506.4,193.5 L507.2,195.1 L508.0,194.7 L508.8,195.3 L509.6,195.5 L510.4,195.4 L511.2,195.5 L512.0,195.4 L512.8,193.8 L513.6,194.7 L514.4,193.9 L515.2,194.8 L516.0,194.8 L516.8,194.8 L517.6,193.4 L518.4,194.9 L519.2,195.1 L520.0,194.9 L520.8,194.7 L521.6,195.0 L522.4,195.2 L523.2,195.0 L524.0,194.6 L524.8,195.1 L525.6,194.0 L526.4,195.1 L527.2,195.0 L528.0,195.2 L528.8,195.3 L529.6,195.2 L530.4,195.2 L531.2,195.3 L532.0,195.4 L532.8,195.3 L533.6,195.5 L534.4,195.4 L535.2,195.2 L536.0,195.4 L536.8,195.4 L537.6,195.5 L538.4,195.6 L539.2,195.6 L540.0,194.6 L540.8,195.7 L541.6,195.8 L542.4,195.8 L543.2,195.9 L544.0,195.9 L544.8,196.0 L545.6,196.0 L546.4,195.9 L547.2,195.4 L548.0,193.4 L548.8,194.8 L549.6,194.8 L550.4,194.8 L551.2,194.7 L552.0,194.7 L552.8,193.8 L553.6,194.7 L554.4,194.8 L555.2,194.5 L556.0,194.4 L556.8,194.4 L557.6,193.4 L558.4,194.2 L559.2,193.6 L560.0,193.9 L560.8,194.1 L561.6,193.7 L562.4,193.8 L563.2,193.5 L564.0,190.9 L564.8,193.3 L565.6,190.9 L566.4,193.2 L567.2,193.5 L568.0,193.2 L568.8,191.6 L569.6,193.4 L570.4,191.0 L571.2,193.6 L572.0,194.0 L572.8,193.9 L573.6,192.9 L574.4,194.2 L575.2,194.6 L576.0,194.6 L576.8,194.7 L577.6,195.0 L578.4,194.5 L579.2,195.3 L580.0,195.6 L580.8,195.5 L581.6,194.2 L582.4,194.7 L583.2,194.7 L584.0,194.6 L584.8,194.8 L585.6,194.7 L586.4,194.0 L587.2,194.7 L588.0,193.4 L588.8,194.8 L589.6,194.9 L590.4,194.8 L591.2,194.7 L592.0,194.8 L592.8,194.8 L593.6,194.9 L594.4,195.0 L595.2,194.9 L596.0,195.1 L596.8,194.9 L597.6,195.1 L598.4,195.0 L599.2,195.2 L600.0,195.0 L600.8,195.1 L601.6,195.1 L602.4,194.3 L603.2,195.2 L604.0,195.3 L604.8,195.3 L605.6,195.4 L606.4,195.4 L607.2,194.7 L608.0,195.5 L608.8,194.8 L609.6,195.6 L610.4,195.0 L611.2,195.7 L612.0,195.6 L612.8,195.8 L613.6,195.0 L614.4,196.0 L615.2,195.4 L616.0,195.8 L616.8,195.7 L617.6,195.5 L618.4,194.2 L619.2,195.5 L620.0,195.5 L620.8,195.5 L621.6,194.9 L622.4,195.5 L623.2,195.2 L624.0,195.5 L624.8,195.4 L625.6,195.5 L626.4,194.2 L627.2,195.6 L628.0,194.5 L628.8,195.6 L629.6,195.7 L630.4,195.6 L631.2,195.4 L632.0,195.6 L632.8,195.1 L633.6,195.6 L634.4,194.5 L635.2,195.6 L636.0,195.8 L636.8,195.7 L637.6,195.4 L638.4,195.7 L639.2,195.7 L640.0,195.7 L640.8,195.9 L641.6,195.8 L642.4,195.9 L643.2,195.8 L644.0,194.8 L644.8,195.9 L645.6,194.8 L646.4,195.9 L647.2,195.0 L648.0,196.0 L648.8,196.1 L649.6,196.0 L650.4,195.1 L651.2,195.6 L652.0,195.5 L652.8,195.4 L653.6,194.2 L654.4,195.4 L655.2,195.0 L656.0,195.4 L656.8,194.4 L657.6,195.4 L658.4,195.5 L659.2,195.4 L660.0,195.5 L660.8,195.4 L661.6,194.4 L662.4,195.4 L663.2,195.2 L664.0,195.4 L664.8,195.6 L665.6,195.5 L666.4,195.6 L667.2,195.5 L668.0,195.6 L668.8,195.5 L669.6,195.3 L670.4,195.6 L671.2,194.2 L672.0,195.6 L672.8,195.6 L673.6,195.6 L674.4,194.5 L675.2,195.7 L676.0,195.4 L676.8,195.7 L677.6,195.8 L678.4,195.8 L679.2,195.6 L680.0,195.8 L680.8,195.9 L681.6,195.8 L682.4,195.9 L683.2,195.9 L684.0,195.9 L684.8,195.7 L685.6,195.5 L686.4,195.1 L687.2,193.7 L688.0,195.0 L688.8,195.1 L689.6,194.9 L690.4,194.6 L691.2,194.8 L692.0,194.1 L692.8,194.7 L693.6,193.6 L694.4,194.6 L695.2,194.4 L696.0,194.5 L696.8,193.7 L697.6,194.4 L698.4,193.9 L699.2,194.4 L700.0,193.9 L700.8,194.4 L701.6,194.1 L702.4,194.4 L703.2,194.5 L704.0,194.4 L704.8,193.7 L705.6,194.6 L706.4,194.6 L707.2,194.7 L708.0,194.9 L708.8,194.8 L709.6,194.7 L710.4,195.0 L711.2,195.1 L712.0,195.2 L712.8,195.3 L713.6,195.4 L714.4,195.0 L715.2,195.5 L716.0,195.4 L716.8,195.7 L717.6,195.7 L718.4,195.8 L719.2,195.3 L720.0,195.4 L720.8,194.0 L721.6,195.0 L722.4,194.0 L723.2,195.1 L724.0,195.1 L724.8,195.1 L725.6,195.3 L726.4,195.1 L727.2,194.3 L728.0,195.1 L728.8,195.3 L729.6,195.1 L730.4,195.2 L731.2,195.2 L732.0,195.3 L732.8,195.2 L733.6,194.4 L734.4,195.2 L735.2,195.2 L736.0,195.3 L736.8,195.4 L737.6,195.3 L738.4,195.2 L739.2,195.3 L740.0,194.6 L740.8,195.4 L741.6,195.6 L742.4,195.4 L743.2,195.6 L744.0,195.5 L744.8,195.3 L745.6,195.6 L746.4,195.4 L747.2,195.6 L748.0,194.6 L748.8,195.7 L749.6,195.9 L750.4,195.8 L751.2,195.4 L752.0,195.9 L752.8,195.8 L753.6,195.8 L754.4,195.5 L755.2,194.9 L756.0,194.2 L756.8,194.8 L757.6,194.9 L758.4,194.7 L759.2,194.0 L760.0,194.7 L760.8,194.3 L761.6,194.6 L762.4,192.8 L763.2,194.5 L764.0,194.1 L764.8,194.4 L765.6,193.0 L766.4,194.4 L767.2,194.5 L768.0,194.3 L768.8,193.2 L769.6,194.3 L770.4,193.4 L771.2,194.2 L772.0,194.0 L772.8,194.2 L773.6,194.3 L774.4,194.3 L775.2,194.4 L776.0,194.3 L776.8,194.4 L777.6,194.4 L778.4,193.0 L779.2,194.6 L780.0,194.5 L780.8,194.7 L781.6,193.8 L782.4,194.9 L783.2,195.1 L784.0,195.1 L784.8,194.5 L785.6,195.3 L786.4,194.7 L787.2,195.5 L788.0,195.6 L788.8,195.1 L789.6,194.9 L790.4,194.5 L791.2,194.0 L792.0,194.6 L792.8,194.8 L793.6,194.7 L794.4,194.8 L795.2,194.7 L796.0,194.8 L796.8,194.8 L797.6,195.0 L798.4,194.8 L799.2,194.3 L800.0,194.9 L800.8,195.0 L801.6,194.9 L802.4,194.5 L803.2,195.0 L804.0,195.1 L804.8,195.0 L805.6,193.8 L806.4,195.1 L807.2,195.2 L808.0,195.1 L808.8,195.3 L809.6,195.2 L810.4,195.2 L811.2,195.3 L812.0,194.4 L812.8,195.3 L813.6,195.4 L814.4,195.4 L815.2,194.4 L816.0,195.5 L816.8,195.5 L817.6,195.6 L818.4,195.6 L819.2,195.8 L820.0,195.6 L820.8,195.9 L821.6,195.5 L822.4,196.0 L823.2,194.7 L824.0,195.0 L824.8,194.5 L825.6,194.6 L826.4,194.7 L827.2,194.6 L828.0,194.8 L828.8,194.6 L829.6,194.5 L830.4,194.5 L831.2,194.3 L832.0,194.5 L832.8,193.7 L833.6,194.4 L834.4,194.0 L835.2,194.3 L836.0,193.3 L836.8,194.3 L837.6,194.4 L838.4,194.2 L839.2,194.4 L840.0,194.1 L840.8,193.5 L841.6,194.1 L842.4,193.5 L843.2,194.1 L844.0,194.3 L844.8,194.1 L845.6,194.4 L846.4,194.2 L847.2,194.5 L848.0,194.3 L848.8,193.3 L849.6,194.5 L850.4,194.8 L851.2,194.7 L852.0,194.8 L852.8,194.9 L853.6,195.0 L854.4,195.2 L855.2,195.4 L856.0,195.4 L856.8,195.5 L857.6,195.5 L858.4,195.3 L859.2,195.1 L860.0,194.6 L860.8,195.2 L861.6,194.6 L862.4,195.3 L863.2,195.4 L864.0,195.4 L864.8,195.2 L865.6,195.4 L866.4,194.8 L867.2,195.4 L868.0,195.4 L868.8,195.5 L869.6,195.6 L870.4,195.5 L871.2,194.8 L872.0,195.5 L872.8,195.7 L873.6,195.5 L874.4,195.6 L875.2,195.6 L876.0,195.2 L876.8,195.6 L877.6,195.7 L878.4,195.6 L879.2,195.7 L880.0,195.7 L880.8,195.6 L881.6,195.7 L882.4,195.7 L883.2,195.7 L884.0,195.7 L884.8,195.8 L885.6,195.9 L886.4,195.8 L887.2,196.0 L888.0,195.9 L888.8,196.0 L889.6,195.9 L890.4,195.9 L891.2,196.0 L892.0,195.9 L892.8,195.6 L893.6,195.1 L894.4,195.3 L895.2,195.4 L896.0,195.3 L896.8,195.3 L896.8,199.9 L896.0,200.1 L895.2,199.9 L894.4,200.1 L893.6,200.0 L892.8,199.8 L892.0,199.5 L891.2,199.4 L890.4,199.3 L889.6,199.5 L888.8,200.0 L888.0,199.5 L887.2,199.5 L886.4,199.6 L885.6,199.6 L884.8,199.6 L884.0,199.5 L883.2,199.7 L882.4,199.8 L881.6,199.7 L880.8,200.9 L880.0,199.7 L879.2,199.6 L878.4,199.8 L877.6,200.2 L876.8,199.8 L876.0,199.7 L875.2,199.8 L874.4,199.7 L873.6,199.9 L872.8,199.8 L872.0,199.9 L871.2,199.8 L870.4,199.9 L869.6,199.8 L868.8,199.9 L868.0,199.8 L867.2,200.0 L866.4,200.0 L865.6,200.0 L864.8,200.6 L864.0,200.0 L863.2,200.9 L862.4,200.1 L861.6,200.5 L860.8,200.2 L860.0,200.1 L859.2,200.3 L858.4,200.2 L857.6,199.9 L856.8,200.2 L856.0,200.0 L855.2,201.4 L854.4,200.2 L853.6,200.6 L852.8,200.5 L852.0,200.4 L851.2,200.7 L850.4,201.8 L849.6,200.9 L848.8,200.8 L848.0,201.1 L847.2,201.9 L846.4,201.2 L845.6,201.8 L844.8,201.3 L844.0,201.5 L843.2,201.3 L842.4,202.4 L841.6,201.3 L840.8,201.1 L840.0,201.3 L839.2,201.0 L838.4,201.2 L837.6,201.7 L836.8,201.1 L836.0,200.9 L835.2,201.1 L834.4,201.6 L833.6,201.0 L832.8,202.2 L832.0,200.9 L831.2,200.8 L830.4,200.9 L829.6,202.1 L828.8,200.8 L828.0,200.9 L827.2,200.8 L826.4,201.1 L825.6,200.8 L824.8,201.7 L824.0,200.4 L823.2,201.1 L822.4,199.4 L821.6,199.8 L820.8,199.5 L820.0,199.9 L819.2,199.6 L818.4,199.6 L817.6,199.8 L816.8,199.7 L816.0,199.9 L815.2,199.9 L814.4,200.0 L813.6,200.3 L812.8,200.1 L812.0,200.0 L811.2,200.1 L810.4,200.3 L809.6,200.2 L808.8,200.1 L808.0,200.3 L807.2,201.8 L806.4,200.3 L805.6,200.7 L804.8,200.4 L804.0,200.3 L803.2,200.4 L802.4,201.5 L801.6,200.5 L800.8,201.7 L800.0,200.5 L799.2,201.4 L798.4,200.6 L797.6,200.7 L796.8,200.6 L796.0,200.6 L795.2,200.7 L794.4,202.5 L793.6,200.7 L792.8,200.7 L792.0,200.8 L791.2,202.2 L790.4,200.9 L789.6,201.5 L788.8,200.3 L788.0,200.7 L787.2,199.9 L786.4,199.9 L785.6,200.1 L784.8,200.2 L784.0,200.3 L783.2,201.3 L782.4,200.5 L781.6,200.4 L780.8,200.7 L780.0,201.1 L779.2,200.8 L778.4,201.9 L777.6,201.0 L776.8,201.0 L776.0,201.1 L775.2,202.0 L774.4,201.1 L773.6,203.3 L772.8,201.2 L772.0,201.4 L771.2,201.2 L770.4,201.0 L769.6,201.1 L768.8,201.0 L768.0,201.1 L767.2,201.6 L766.4,201.0 L765.6,200.9 L764.8,201.0 L764.0,200.8 L763.2,200.9 L762.4,200.7 L761.6,200.8 L760.8,202.0 L760.0,200.7 L759.2,202.1 L758.4,200.7 L757.6,200.5 L756.8,200.6 L756.0,201.0 L755.2,200.5 L754.4,199.9 L753.6,199.6 L752.8,199.5 L752.0,199.5 L751.2,199.6 L750.4,199.6 L749.6,199.8 L748.8,199.7 L748.0,200.1 L747.2,199.8 L746.4,199.7 L745.6,199.8 L744.8,199.8 L744.0,199.9 L743.2,200.5 L742.4,200.0 L741.6,200.1 L740.8,200.0 L740.0,199.9 L739.2,200.1 L738.4,200.8 L737.6,200.1 L736.8,200.1 L736.0,200.1 L735.2,200.2 L734.4,200.2 L733.6,201.5 L732.8,200.2 L732.0,200.1 L731.2,200.2 L730.4,200.4 L729.6,200.3 L728.8,200.3 L728.0,200.3 L727.2,201.5 L726.4,200.3 L725.6,200.6 L724.8,200.3 L724.0,200.3 L723.2,200.3 L722.4,201.0 L721.6,200.4 L720.8,201.2 L720.0,200.0 L719.2,200.5 L718.4,199.6 L717.6,199.6 L716.8,199.7 L716.0,200.6 L715.2,199.9 L714.4,200.8 L713.6,200.0 L712.8,200.1 L712.0,200.2 L711.2,200.6 L710.4,200.4 L709.6,200.3 L708.8,200.6 L708.0,200.9 L707.2,200.7 L706.4,201.9 L705.6,200.8 L704.8,202.1 L704.0,201.0 L703.2,200.8 L702.4,201.0 L701.6,202.2 L700.8,201.0 L700.0,203.0 L699.2,201.0 L698.4,200.8 L697.6,201.0 L696.8,200.8 L696.0,200.9 L695.2,200.7 L694.4,200.8 L693.6,200.6 L692.8,200.7 L692.0,200.5 L691.2,200.6 L690.4,200.9 L689.6,200.5 L688.8,200.3 L688.0,200.4 L687.2,201.0 L686.4,200.3 L685.6,199.9 L684.8,199.7 L684.0,199.4 L683.2,199.5 L682.4,199.5 L681.6,199.6 L680.8,199.8 L680.0,199.6 L679.2,199.6 L678.4,199.6 L677.6,199.9 L676.8,199.7 L676.0,199.6 L675.2,199.7 L674.4,200.0 L673.6,199.8 L672.8,200.1 L672.0,199.8 L671.2,199.7 L670.4,199.8 L669.6,199.8 L668.8,199.9 L668.0,199.8 L667.2,199.9 L666.4,200.0 L665.6,199.9 L664.8,199.8 L664.0,200.0 L663.2,199.9 L662.4,200.0 L661.6,199.8 L660.8,200.0 L660.0,200.3 L659.2,200.0 L658.4,199.9 L657.6,200.0 L656.8,201.0 L656.0,200.0 L655.2,200.3 L654.4,200.0 L653.6,201.0 L652.8,200.0 L652.0,199.9 L651.2,199.8 L650.4,200.1 L649.6,199.4 L648.8,199.3 L648.0,199.4 L647.2,200.3 L646.4,199.5 L645.6,199.7 L644.8,199.5 L644.0,199.7 L643.2,199.6 L642.4,200.1 L641.6,199.6 L640.8,200.0 L640.0,199.7 L639.2,199.6 L638.4,199.7 L637.6,200.5 L636.8,199.7 L636.0,199.7 L635.2,199.8 L634.4,200.0 L633.6,199.8 L632.8,199.7 L632.0,199.8 L631.2,199.8 L630.4,199.8 L629.6,199.7 L628.8,199.8 L628.0,200.0 L627.2,199.8 L626.4,200.3 L625.6,199.9 L624.8,200.8 L624.0,199.9 L623.2,199.8 L622.4,199.9 L621.6,199.7 L620.8,199.9 L620.0,200.8 L619.2,199.9 L618.4,199.9 L617.6,199.9 L616.8,199.7 L616.0,199.6 L615.2,199.4 L614.4,199.4 L613.6,200.3 L612.8,199.6 L612.0,199.6 L611.2,199.7 L610.4,199.7 L609.6,199.8 L608.8,200.4 L608.0,199.9 L607.2,199.9 L606.4,200.0 L605.6,200.0 L604.8,200.1 L604.0,200.1 L603.2,200.2 L602.4,200.1 L601.6,200.3 L600.8,200.2 L600.0,200.4 L599.2,200.2 L598.4,200.4 L597.6,201.9 L596.8,200.5 L596.0,200.6 L595.2,200.5 L594.4,200.5 L593.6,200.5 L592.8,200.5 L592.0,200.6 L591.2,200.5 L590.4,200.6 L589.6,201.0 L588.8,200.6 L588.0,200.5 L587.2,200.7 L586.4,200.5 L585.6,200.7 L584.8,201.2 L584.0,200.8 L583.2,200.7 L582.4,200.7 L581.6,200.2 L580.8,199.9 L580.0,199.9 L579.2,200.1 L578.4,200.1 L577.6,200.4 L576.8,200.4 L576.0,200.8 L575.2,200.8 L574.4,201.2 L573.6,202.9 L572.8,201.5 L572.0,202.1 L571.2,201.8 L570.4,202.6 L569.6,202.0 L568.8,203.1 L568.0,202.2 L567.2,201.9 L566.4,202.2 L565.6,203.1 L564.8,202.1 L564.0,204.3 L563.2,201.9 L562.4,202.9 L561.6,201.7 L560.8,203.4 L560.0,201.5 L559.2,202.4 L558.4,201.2 L557.6,200.9 L556.8,201.0 L556.0,200.8 L555.2,200.9 L554.4,200.8 L553.6,200.7 L552.8,200.6 L552.0,200.7 L551.2,200.4 L550.4,200.6 L549.6,202.1 L548.8,200.6 L548.0,200.3 L547.2,200.0 L546.4,199.7 L545.6,199.4 L544.8,200.1 L544.0,199.5 L543.2,200.1 L542.4,199.6 L541.6,199.6 L540.8,199.7 L540.0,200.5 L539.2,199.8 L538.4,199.7 L537.6,199.9 L536.8,199.8 L536.0,200.0 L535.2,199.9 L534.4,200.0 L533.6,200.8 L532.8,200.1 L532.0,201.0 L531.2,200.1 L530.4,200.0 L529.6,200.2 L528.8,201.0 L528.0,200.2 L527.2,200.1 L526.4,200.3 L525.6,201.8 L524.8,200.3 L524.0,200.2 L523.2,200.4 L522.4,200.2 L521.6,200.4 L520.8,200.4 L520.0,200.5 L519.2,201.4 L518.4,200.5 L517.6,200.5 L516.8,200.6 L516.0,200.4 L515.2,200.6 L514.4,202.0 L513.6,200.7 L512.8,200.6 L512.0,200.0 L511.2,201.2 L510.4,200.0 L509.6,200.4 L508.8,200.1 L508.0,200.2 L507.2,200.3 L506.4,200.3 L505.6,200.5 L504.8,200.8 L504.0,200.6 L503.2,201.0 L502.4,200.7 L501.6,200.7 L500.8,200.8 L500.0,201.0 L499.2,200.8 L498.4,202.0 L497.6,200.9 L496.8,201.4 L496.0,200.9 L495.2,201.9 L494.4,200.8 L493.6,201.8 L492.8,200.8 L492.0,200.6 L491.2,200.7 L490.4,200.6 L489.6,200.7 L488.8,201.2 L488.0,200.6 L487.2,200.8 L486.4,200.5 L485.6,202.0 L484.8,200.5 L484.0,200.6 L483.2,200.4 L482.4,200.4 L481.6,200.4 L480.8,200.5 L480.0,200.3 L479.2,200.2 L478.4,200.1 L477.6,199.6 L476.8,199.4 L476.0,199.4 L475.2,199.5 L474.4,200.0 L473.6,199.6 L472.8,199.5 L472.0,199.6 L471.2,199.8 L470.4,199.7 L469.6,199.7 L468.8,199.7 L468.0,199.6 L467.2,199.8 L466.4,200.1 L465.6,199.8 L464.8,199.7 L464.0,199.9 L463.2,200.5 L462.4,199.9 L461.6,200.5 L460.8,199.9 L460.0,199.9 L459.2,200.0 L458.4,200.3 L457.6,200.0 L456.8,200.3 L456.0,200.0 L455.2,201.2 L454.4,200.0 L453.6,200.0 L452.8,200.1 L452.0,199.9 L451.2,200.1 L450.4,200.2 L449.6,200.1 L448.8,199.9 L448.0,200.1 L447.2,199.9 L446.4,200.1 L445.6,200.8 L444.8,200.1 L444.0,199.9 L443.2,199.7 L442.4,199.4 L441.6,199.4 L440.8,199.7 L440.0,199.5 L439.2,199.6 L438.4,199.5 L437.6,199.9 L436.8,199.6 L436.0,199.5 L435.2,199.6 L434.4,199.7 L433.6,199.7 L432.8,199.6 L432.0,199.7 L431.2,199.6 L430.4,199.8 L429.6,199.7 L428.8,199.8 L428.0,199.7 L427.2,199.8 L426.4,200.7 L425.6,199.8 L424.8,199.7 L424.0,199.9 L423.2,200.2 L422.4,199.9 L421.6,200.1 L420.8,199.9 L420.0,199.9 L419.2,199.9 L418.4,199.8 L417.6,199.9 L416.8,199.9 L416.0,199.9 L415.2,199.8 L414.4,199.9 L413.6,200.0 L412.8,199.9 L412.0,199.8 L411.2,200.0 L410.4,200.0 L409.6,199.9 L408.8,199.8 L408.0,199.4 L407.2,200.0 L406.4,199.5 L405.6,200.4 L404.8,199.7 L404.0,199.8 L403.2,199.8 L402.4,199.7 L401.6,199.9 L400.8,200.5 L400.0,200.0 L399.2,200.6 L398.4,200.1 L397.6,200.0 L396.8,200.2 L396.0,200.6 L395.2,200.3 L394.4,201.9 L393.6,200.4 L392.8,200.6 L392.0,200.4 L391.2,200.4 L390.4,200.5 L389.6,200.4 L388.8,200.5 L388.0,200.4 L387.2,200.6 L386.4,201.9 L385.6,200.6 L384.8,200.5 L384.0,200.6 L383.2,200.5 L382.4,200.7 L381.6,201.9 L380.8,200.7 L380.0,202.1 L379.2,200.7 L378.4,200.5 L377.6,200.7 L376.8,202.0 L376.0,200.7 L375.2,200.4 L374.4,200.1 L373.6,199.5 L372.8,199.4 L372.0,199.4 L371.2,199.6 L370.4,200.6 L369.6,199.7 L368.8,199.6 L368.0,199.8 L367.2,200.6 L366.4,199.9 L365.6,200.1 L364.8,200.0 L364.0,200.3 L363.2,200.1 L362.4,200.1 L361.6,200.2 L360.8,201.1 L360.0,200.2 L359.2,200.2 L358.4,200.3 L357.6,201.0 L356.8,200.3 L356.0,200.2 L355.2,200.4 L354.4,200.4 L353.6,200.4 L352.8,200.3 L352.0,200.5 L351.2,200.8 L350.4,200.5 L349.6,200.4 L348.8,200.5 L348.0,201.7 L347.2,200.5 L346.4,200.4 L345.6,200.6 L344.8,201.8 L344.0,200.6 L343.2,200.4 L342.4,200.6 L341.6,200.9 L340.8,200.6 L340.0,201.3 L339.2,199.6 L338.4,200.3 L337.6,199.5 L336.8,200.3 L336.0,199.6 L335.2,199.8 L334.4,199.7 L333.6,199.7 L332.8,199.8 L332.0,199.7 L331.2,199.9 L330.4,200.2 L329.6,200.0 L328.8,199.9 L328.0,200.0 L327.2,199.9 L326.4,200.1 L325.6,200.9 L324.8,200.2 L324.0,200.0 L323.2,200.2 L322.4,200.5 L321.6,200.3 L320.8,200.2 L320.0,200.3 L319.2,200.3 L318.4,200.3 L317.6,200.2 L316.8,200.4 L316.0,200.5 L315.2,200.4 L314.4,201.4 L313.6,200.4 L312.8,200.3 L312.0,200.4 L311.2,200.3 L310.4,200.4 L309.6,200.3 L308.8,200.4 L308.0,200.4 L307.2,200.4 L306.4,201.1 L305.6,200.1 L304.8,199.6 L304.0,199.4 L303.2,199.9 L302.4,199.5 L301.6,199.4 L300.8,199.6 L300.0,199.7 L299.2,199.7 L298.4,199.9 L297.6,199.8 L296.8,200.0 L296.0,199.8 L295.2,200.5 L294.4,199.9 L293.6,200.1 L292.8,200.0 L292.0,200.7 L291.2,200.0 L290.4,200.1 L289.6,200.1 L288.8,200.4 L288.0,200.1 L287.2,201.0 L286.4,200.2 L285.6,200.1 L284.8,200.2 L284.0,201.5 L283.2,200.2 L282.4,200.3 L281.6,200.2 L280.8,200.1 L280.0,200.3 L279.2,201.0 L278.4,200.3 L277.6,200.3 L276.8,200.3 L276.0,200.4 L275.2,200.3 L274.4,200.4 L273.6,200.3 L272.8,200.7 L272.0,200.3 L271.2,199.9 L270.4,199.7 L269.6,199.3 L268.8,199.5 L268.0,200.6 L267.2,199.5 L266.4,199.7 L265.6,199.6 L264.8,199.6 L264.0,199.7 L263.2,200.4 L262.4,199.8 L261.6,199.9 L260.8,199.9 L260.0,199.9 L259.2,199.9 L258.4,200.6 L257.6,200.0 L256.8,201.3 L256.0,200.1 L255.2,200.0 L254.4,200.1 L253.6,200.2 L252.8,200.2 L252.0,200.8 L251.2,200.3 L250.4,200.2 L249.6,200.3 L248.8,200.4 L248.0,200.4 L247.2,200.9 L246.4,200.5 L245.6,201.0 L244.8,200.6 L244.0,200.5 L243.2,200.6 L242.4,200.6 L241.6,200.7 L240.8,200.9 L240.0,200.8 L239.2,200.9 L238.4,200.9 L237.6,202.4 L236.8,200.8 L236.0,200.6 L235.2,200.3 L234.4,200.2 L233.6,200.4 L232.8,200.3 L232.0,200.6 L231.2,200.8 L230.4,200.8 L229.6,201.8 L228.8,200.9 L228.0,201.0 L227.2,201.1 L226.4,203.2 L225.6,201.2 L224.8,201.1 L224.0,201.3 L223.2,201.6 L222.4,201.5 L221.6,201.3 L220.8,201.6 L220.0,201.6 L219.2,201.7 L218.4,201.7 L217.6,201.8 L216.8,201.6 L216.0,201.9 L215.2,202.9 L214.4,201.9 L213.6,201.9 L212.8,202.0 L212.0,202.9 L211.2,202.0 L210.4,201.8 L209.6,202.0 L208.8,202.7 L208.0,202.0 L207.2,201.8 L206.4,202.0 L205.6,204.3 L204.8,202.0 L204.0,201.8 L203.2,201.9 L202.4,203.5 L201.6,201.5 L200.8,201.4 L200.0,201.2 L199.2,201.0 L198.4,201.2 L197.6,200.9 L196.8,201.1 L196.0,200.9 L195.2,201.1 L194.4,200.9 L193.6,201.0 L192.8,201.1 L192.0,201.0 L191.2,200.8 L190.4,200.9 L189.6,200.7 L188.8,200.8 L188.0,200.9 L187.2,200.8 L186.4,200.8 L185.6,200.7 L184.8,201.7 L184.0,200.6 L183.2,200.7 L182.4,200.6 L181.6,200.4 L180.8,200.5 L180.0,201.2 L179.2,200.4 L178.4,201.2 L177.6,200.4 L176.8,202.0 L176.0,200.3 L175.2,200.1 L174.4,200.3 L173.6,201.3 L172.8,200.2 L172.0,200.0 L171.2,200.2 L170.4,200.3 L169.6,200.1 L168.8,200.1 L168.0,200.1 L167.2,200.1 L166.4,199.7 L165.6,200.0 L164.8,199.6 L164.0,200.7Z" fill="#361458"/><path d="M164.0,244.8 L164.8,244.8 L165.6,244.7 L166.4,244.8 L167.2,244.7 L168.0,244.4 L168.8,243.6 L169.6,244.3 L170.4,244.0 L171.2,244.3 L172.0,243.9 L172.8,244.2 L173.6,244.2 L174.4,244.1 L175.2,243.5 L176.0,243.9 L176.8,243.9 L177.6,243.8 L178.4,242.6 L179.2,243.6 L180.0,241.9 L180.8,243.5 L181.6,243.4 L182.4,243.4 L183.2,243.1 L184.0,243.3 L184.8,242.1 L185.6,243.3 L186.4,242.0 L187.2,243.3 L188.0,242.7 L188.8,243.3 L189.6,243.5 L190.4,243.4 L191.2,243.7 L192.0,243.6 L192.8,243.8 L193.6,243.7 L194.4,243.6 L195.2,243.9 L196.0,243.0 L196.8,244.1 L197.6,244.3 L198.4,244.3 L199.2,244.5 L200.0,244.4 L200.8,244.5 L201.6,244.2 L202.4,242.9 L203.2,244.0 L204.0,243.6 L204.8,243.9 L205.6,242.6 L206.4,243.9 L207.2,244.0 L208.0,243.8 L208.8,243.6 L209.6,243.7 L210.4,243.8 L211.2,243.6 L212.0,243.2 L212.8,243.5 L213.6,242.8 L214.4,243.3 L215.2,242.8 L216.0,243.2 L216.8,242.9 L217.6,243.2 L218.4,243.2 L219.2,243.1 L220.0,242.3 L220.8,243.2 L221.6,243.3 L222.4,243.3 L223.2,243.5 L224.0,243.4 L224.8,243.6 L225.6,243.5 L226.4,242.6 L227.2,243.7 L228.0,242.7 L228.8,243.9 L229.6,243.9 L230.4,244.1 L231.2,244.4 L232.0,244.3 L232.8,243.8 L233.6,244.5 L234.4,244.0 L235.2,244.6 L236.0,244.4 L236.8,244.2 L237.6,244.2 L238.4,244.1 L239.2,244.1 L240.0,244.2 L240.8,243.7 L241.6,244.2 L242.4,244.3 L243.2,244.2 L244.0,244.1 L244.8,244.2 L245.6,243.3 L246.4,244.3 L247.2,243.3 L248.0,244.3 L248.8,244.4 L249.6,244.3 L250.4,244.4 L251.2,244.3 L252.0,244.5 L252.8,244.4 L253.6,244.5 L254.4,244.4 L255.2,244.5 L256.0,244.4 L256.8,243.8 L257.6,244.5 L258.4,244.6 L259.2,244.5 L260.0,244.6 L260.8,244.6 L261.6,244.7 L262.4,244.6 L263.2,243.6 L264.0,244.7 L264.8,244.8 L265.6,244.7 L266.4,244.6 L267.2,244.8 L268.0,245.0 L268.8,244.9 L269.6,245.0 L270.4,244.6 L271.2,243.7 L272.0,244.1 L272.8,244.1 L273.6,244.1 L274.4,244.1 L275.2,244.1 L276.0,244.0 L276.8,244.1 L277.6,244.2 L278.4,244.1 L279.2,243.1 L280.0,244.2 L280.8,244.3 L281.6,244.2 L282.4,243.5 L283.2,244.2 L284.0,244.3 L284.8,244.2 L285.6,243.6 L286.4,244.2 L287.2,243.4 L288.0,244.3 L288.8,244.4 L289.6,244.3 L290.4,243.2 L291.2,244.4 L292.0,243.9 L292.8,244.4 L293.6,244.0 L294.4,244.5 L295.2,244.4 L296.0,244.5 L296.8,244.7 L297.6,244.6 L298.4,244.7 L299.2,244.7 L300.0,244.8 L300.8,244.7 L301.6,244.4 L302.4,244.8 L303.2,244.6 L304.0,244.9 L304.8,243.9 L305.6,244.3 L306.4,242.8 L307.2,244.0 L308.0,244.1 L308.8,244.0 L309.6,244.1 L310.4,244.0 L311.2,244.1 L312.0,244.0 L312.8,243.8 L313.6,244.0 L314.4,244.0 L315.2,244.0 L316.0,244.1 L316.8,244.1 L317.6,244.0 L318.4,244.1 L319.2,243.3 L320.0,244.1 L320.8,243.3 L321.6,244.2 L322.4,244.2 L323.2,244.2 L324.0,243.9 L324.8,244.2 L325.6,244.4 L326.4,244.3 L327.2,243.5 L328.0,244.4 L328.8,244.5 L329.6,244.4 L330.4,244.6 L331.2,244.5 L332.0,244.4 L332.8,244.6 L333.6,244.6 L334.4,244.7 L335.2,243.7 L336.0,244.8 L336.8,244.9 L337.6,244.9 L338.4,244.2 L339.2,244.7 L340.0,243.7 L340.8,243.9 L341.6,243.5 L342.4,243.9 L343.2,242.4 L344.0,243.9 L344.8,243.8 L345.6,243.9 L346.4,243.7 L347.2,243.9 L348.0,244.1 L348.8,243.9 L349.6,242.7 L350.4,243.9 L351.2,243.7 L352.0,244.0 L352.8,244.1 L353.6,244.0 L354.4,243.4 L355.2,244.0 L356.0,244.2 L356.8,244.1 L357.6,244.0 L358.4,244.1 L359.2,244.2 L360.0,244.2 L360.8,244.3 L361.6,244.2 L362.4,244.4 L363.2,244.3 L364.0,244.5 L364.8,244.4 L365.6,243.8 L366.4,244.5 L367.2,244.6 L368.0,244.6 L368.8,244.7 L369.6,244.7 L370.4,244.2 L371.2,244.8 L372.0,244.7 L372.8,244.9 L373.6,244.5 L374.4,244.3 L375.2,243.6 L376.0,243.7 L376.8,243.4 L377.6,243.7 L378.4,243.9 L379.2,243.8 L380.0,243.4 L380.8,243.8 L381.6,242.6 L382.4,243.8 L383.2,244.0 L384.0,243.8 L384.8,243.7 L385.6,243.8 L386.4,243.4 L387.2,243.9 L388.0,242.6 L388.8,243.9 L389.6,243.2 L390.4,243.9 L391.2,243.4 L392.0,244.0 L392.8,244.2 L393.6,244.1 L394.4,243.7 L395.2,244.1 L396.0,244.3 L396.8,244.2 L397.6,244.4 L398.4,244.3 L399.2,244.4 L400.0,244.4 L400.8,244.5 L401.6,244.5 L402.4,244.5 L403.2,244.6 L404.0,244.7 L404.8,244.7 L405.6,244.9 L406.4,244.8 L407.2,244.9 L408.0,244.9 L408.8,244.7 L409.6,244.5 L410.4,244.5 L411.2,244.4 L412.0,244.2 L412.8,244.4 L413.6,244.0 L414.4,244.4 L415.2,243.4 L416.0,244.4 L416.8,243.8 L417.6,244.4 L418.4,244.1 L419.2,244.5 L420.0,244.6 L420.8,244.5 L421.6,244.6 L422.4,244.5 L423.2,243.3 L424.0,244.5 L424.8,243.5 L425.6,244.5 L426.4,243.5 L427.2,244.5 L428.0,244.7 L428.8,244.6 L429.6,243.6 L430.4,244.6 L431.2,244.0 L432.0,244.6 L432.8,244.7 L433.6,244.7 L434.4,244.8 L435.2,244.7 L436.0,244.4 L436.8,244.7 L437.6,244.4 L438.4,244.8 L439.2,244.5 L440.0,244.8 L440.8,244.6 L441.6,244.8 L442.4,244.1 L443.2,244.6 L444.0,244.4 L444.8,244.1 L445.6,243.9 L446.4,244.1 L447.2,244.2 L448.0,244.0 L448.8,243.8 L449.6,244.0 L450.4,244.1 L451.2,243.9 L452.0,243.6 L452.8,243.8 L453.6,243.9 L454.4,243.8 L455.2,243.9 L456.0,243.7 L456.8,243.9 L457.6,243.7 L458.4,243.4 L459.2,243.6 L460.0,243.7 L460.8,243.7 L461.6,242.7 L462.4,243.7 L463.2,243.6 L464.0,243.7 L464.8,243.9 L465.6,243.8 L466.4,243.3 L467.2,243.9 L468.0,244.1 L468.8,244.0 L469.6,244.1 L470.4,244.1 L471.2,243.1 L472.0,244.3 L472.8,244.1 L473.6,244.4 L474.4,243.4 L475.2,244.5 L476.0,244.1 L476.8,244.7 L477.6,244.6 L478.4,244.2 L479.2,243.5 L480.0,244.0 L480.8,244.2 L481.6,244.1 L482.4,244.2 L483.2,244.1 L484.0,244.3 L484.8,244.1 L485.6,244.3 L486.4,244.1 L487.2,242.8 L488.0,244.2 L488.8,244.2 L489.6,244.1 L490.4,244.2 L491.2,244.1 L492.0,243.0 L492.8,244.0 L493.6,243.2 L494.4,243.9 L495.2,243.7 L496.0,243.7 L496.8,242.9 L497.6,243.5 L498.4,241.7 L499.2,243.4 L500.0,243.3 L500.8,243.2 L501.6,243.4 L502.4,243.2 L503.2,243.3 L504.0,243.3 L504.8,243.0 L505.6,243.4 L506.4,243.7 L507.2,243.7 L508.0,243.8 L508.8,244.0 L509.6,244.3 L510.4,244.3 L510.4,248.7 L509.6,248.7 L508.8,249.0 L508.0,250.0 L507.2,249.3 L506.4,249.3 L505.6,249.6 L504.8,250.1 L504.0,249.7 L503.2,249.6 L502.4,249.8 L501.6,249.7 L500.8,249.8 L500.0,249.6 L499.2,249.6 L498.4,249.4 L497.6,249.5 L496.8,249.4 L496.0,249.3 L495.2,249.0 L494.4,249.1 L493.6,248.9 L492.8,249.0 L492.0,249.7 L491.2,248.9 L490.4,249.7 L489.6,248.9 L488.8,248.9 L488.0,248.8 L487.2,249.8 L486.4,248.9 L485.6,249.4 L484.8,248.9 L484.0,248.8 L483.2,248.9 L482.4,249.4 L481.6,248.9 L480.8,249.5 L480.0,249.0 L479.2,248.9 L478.4,248.8 L477.6,249.5 L476.8,248.3 L476.0,248.4 L475.2,248.5 L474.4,249.4 L473.6,248.6 L472.8,249.7 L472.0,248.7 L471.2,249.3 L470.4,248.9 L469.6,248.8 L468.8,249.0 L468.0,249.0 L467.2,249.1 L466.4,249.1 L465.6,249.2 L464.8,249.3 L464.0,249.3 L463.2,249.3 L462.4,249.3 L461.6,249.6 L460.8,249.3 L460.0,249.6 L459.2,249.4 L458.4,249.7 L457.6,249.3 L456.8,249.3 L456.0,249.3 L455.2,250.8 L454.4,249.2 L453.6,249.0 L452.8,249.2 L452.0,249.9 L451.2,249.1 L450.4,249.2 L449.6,249.0 L448.8,248.9 L448.0,249.0 L447.2,248.8 L446.4,248.9 L445.6,248.8 L444.8,248.9 L444.0,248.7 L443.2,248.4 L442.4,248.5 L441.6,248.2 L440.8,248.9 L440.0,248.2 L439.2,248.1 L438.4,248.2 L437.6,248.2 L436.8,248.3 L436.0,248.3 L435.2,248.3 L434.4,248.2 L433.6,248.3 L432.8,248.3 L432.0,248.4 L431.2,248.5 L430.4,248.4 L429.6,248.3 L428.8,248.4 L428.0,248.4 L427.2,248.5 L426.4,248.3 L425.6,248.5 L424.8,248.4 L424.0,248.5 L423.2,248.5 L422.4,248.5 L421.6,248.8 L420.8,248.5 L420.0,248.4 L419.2,248.5 L418.4,249.7 L417.6,248.6 L416.8,248.8 L416.0,248.6 L415.2,248.5 L414.4,248.6 L413.6,248.5 L412.8,248.6 L412.0,248.5 L411.2,248.6 L410.4,248.4 L409.6,248.5 L408.8,248.3 L408.0,248.1 L407.2,248.1 L406.4,248.2 L405.6,248.3 L404.8,248.3 L404.0,248.3 L403.2,248.4 L402.4,248.4 L401.6,248.5 L400.8,248.5 L400.0,248.6 L399.2,248.8 L398.4,248.7 L397.6,249.8 L396.8,248.8 L396.0,248.9 L395.2,248.9 L394.4,249.0 L393.6,248.9 L392.8,248.8 L392.0,249.0 L391.2,249.1 L390.4,249.1 L389.6,250.4 L388.8,249.1 L388.0,249.6 L387.2,249.1 L386.4,249.0 L385.6,249.2 L384.8,250.5 L384.0,249.2 L383.2,249.1 L382.4,249.2 L381.6,249.1 L380.8,249.2 L380.0,249.2 L379.2,249.2 L378.4,249.4 L377.6,249.3 L376.8,249.3 L376.0,249.3 L375.2,249.7 L374.4,248.7 L373.6,248.2 L372.8,248.1 L372.0,248.3 L371.2,248.2 L370.4,249.0 L369.6,248.3 L368.8,248.3 L368.0,248.4 L367.2,248.4 L366.4,248.5 L365.6,249.0 L364.8,248.6 L364.0,248.5 L363.2,248.7 L362.4,248.6 L361.6,248.8 L360.8,249.6 L360.0,248.8 L359.2,248.8 L358.4,248.9 L357.6,248.8 L356.8,248.9 L356.0,248.9 L355.2,249.0 L354.4,249.1 L353.6,249.0 L352.8,248.9 L352.0,249.0 L351.2,249.2 L350.4,249.1 L349.6,248.9 L348.8,249.1 L348.0,250.2 L347.2,249.1 L346.4,249.0 L345.6,249.1 L344.8,249.0 L344.0,249.1 L343.2,249.5 L342.4,249.1 L341.6,249.9 L340.8,249.1 L340.0,249.2 L339.2,248.3 L338.4,248.0 L337.6,248.1 L336.8,248.4 L336.0,248.2 L335.2,248.3 L334.4,248.3 L333.6,248.4 L332.8,248.4 L332.0,248.8 L331.2,248.5 L330.4,249.2 L329.6,248.6 L328.8,248.6 L328.0,248.6 L327.2,249.6 L326.4,248.7 L325.6,248.6 L324.8,248.8 L324.0,250.0 L323.2,248.8 L322.4,248.7 L321.6,248.8 L320.8,248.8 L320.0,248.9 L319.2,249.0 L318.4,248.9 L317.6,249.1 L316.8,248.9 L316.0,249.6 L315.2,249.0 L314.4,248.9 L313.6,249.0 L312.8,248.9 L312.0,249.0 L311.2,249.4 L310.4,249.0 L309.6,248.9 L308.8,249.0 L308.0,248.9 L307.2,249.0 L306.4,249.1 L305.6,248.7 L304.8,248.2 L304.0,248.1 L303.2,248.2 L302.4,248.2 L301.6,248.1 L300.8,248.3 L300.0,248.3 L299.2,248.3 L298.4,248.3 L297.6,248.4 L296.8,248.6 L296.0,248.5 L295.2,249.2 L294.4,248.5 L293.6,249.6 L292.8,248.6 L292.0,248.7 L291.2,248.6 L290.4,248.8 L289.6,248.7 L288.8,249.5 L288.0,248.7 L287.2,248.6 L286.4,248.8 L285.6,248.6 L284.8,248.8 L284.0,249.0 L283.2,248.8 L282.4,249.1 L281.6,248.8 L280.8,249.6 L280.0,248.8 L279.2,249.5 L278.4,248.9 L277.6,249.8 L276.8,248.9 L276.0,249.3 L275.2,248.9 L274.4,249.3 L273.6,248.9 L272.8,248.8 L272.0,248.9 L271.2,248.6 L270.4,248.4 L269.6,248.0 L268.8,248.1 L268.0,248.2 L267.2,248.2 L266.4,248.2 L265.6,248.3 L264.8,248.2 L264.0,248.3 L263.2,249.0 L262.4,248.4 L261.6,248.3 L260.8,248.4 L260.0,248.5 L259.2,248.5 L258.4,248.4 L257.6,248.5 L256.8,248.4 L256.0,248.6 L255.2,249.2 L254.4,248.6 L253.6,248.5 L252.8,248.6 L252.0,249.5 L251.2,248.7 L250.4,249.8 L249.6,248.7 L248.8,248.6 L248.0,248.7 L247.2,248.9 L246.4,248.7 L245.6,249.1 L244.8,248.8 L244.0,248.7 L243.2,248.8 L242.4,248.7 L241.6,248.8 L240.8,249.6 L240.0,248.8 L239.2,250.1 L238.4,248.9 L237.6,250.2 L236.8,248.8 L236.0,248.6 L235.2,248.4 L234.4,248.3 L233.6,248.5 L232.8,248.5 L232.0,248.7 L231.2,248.7 L230.4,248.9 L229.6,248.8 L228.8,249.1 L228.0,249.2 L227.2,249.3 L226.4,249.2 L225.6,249.5 L224.8,249.4 L224.0,249.6 L223.2,249.7 L222.4,249.7 L221.6,249.6 L220.8,249.8 L220.0,249.6 L219.2,249.9 L218.4,250.1 L217.6,249.8 L216.8,249.7 L216.0,249.8 L215.2,251.5 L214.4,249.7 L213.6,250.3 L212.8,249.5 L212.0,249.5 L211.2,249.4 L210.4,249.6 L209.6,249.3 L208.8,249.1 L208.0,249.2 L207.2,249.0 L206.4,249.1 L205.6,249.1 L204.8,249.1 L204.0,249.3 L203.2,249.0 L202.4,248.9 L201.6,248.8 L200.8,249.4 L200.0,248.6 L199.2,248.6 L198.4,248.7 L197.6,248.7 L196.8,248.9 L196.0,250.5 L195.2,249.1 L194.4,249.0 L193.6,249.3 L192.8,250.1 L192.0,249.4 L191.2,250.4 L190.4,249.6 L189.6,249.4 L188.8,249.7 L188.0,249.5 L187.2,249.7 L186.4,251.5 L185.6,249.7 L184.8,251.7 L184.0,249.7 L183.2,251.1 L182.4,249.6 L181.6,249.5 L180.8,249.5 L180.0,249.4 L179.2,249.4 L178.4,249.1 L177.6,249.2 L176.8,249.9 L176.0,249.1 L175.2,250.0 L174.4,248.9 L173.6,248.7 L172.8,248.8 L172.0,248.6 L171.2,248.7 L170.4,249.6 L169.6,248.7 L168.8,248.7 L168.0,248.6 L167.2,248.3 L166.4,248.2 L165.6,248.1 L164.8,248.2 L164.0,248.3Z" fill="#70121c"/><path d="M728.0,244.3 L728.8,244.1 L729.6,244.3 L730.4,244.2 L731.2,243.6 L732.0,244.2 L732.8,244.3 L733.6,244.2 L734.4,243.5 L735.2,244.2 L736.0,244.3 L736.8,244.3 L737.6,243.4 L738.4,244.3 L739.2,244.3 L740.0,244.4 L740.8,243.3 L741.6,244.4 L742.4,243.5 L743.2,244.5 L744.0,244.4 L744.8,244.5 L745.6,244.7 L746.4,244.6 L747.2,244.7 L748.0,244.6 L748.8,244.7 L749.6,244.7 L750.4,244.8 L751.2,244.8 L752.0,244.9 L752.8,244.9 L753.6,244.0 L754.4,244.4 L755.2,243.5 L756.0,243.9 L756.8,244.1 L757.6,243.9 L758.4,242.8 L759.2,243.9 L760.0,244.0 L760.8,243.9 L761.6,243.9 L762.4,243.8 L763.2,243.9 L764.0,243.8 L764.8,243.8 L765.6,243.7 L766.4,243.9 L767.2,243.7 L768.0,243.8 L768.8,243.6 L769.6,243.7 L770.4,243.5 L771.2,243.0 L772.0,243.4 L772.8,243.6 L773.6,243.4 L774.4,242.6 L775.2,243.3 L776.0,243.5 L776.8,243.3 L777.6,243.5 L778.4,243.3 L779.2,243.5 L780.0,243.4 L780.8,243.6 L781.6,243.4 L782.4,242.0 L783.2,243.6 L784.0,242.3 L784.8,243.7 L785.6,243.7 L786.4,243.9 L787.2,242.9 L788.0,244.0 L788.8,242.8 L789.6,243.3 L790.4,242.7 L791.2,243.2 L792.0,241.5 L792.8,243.3 L793.6,242.9 L794.4,243.4 L795.2,241.8 L796.0,243.5 L796.8,243.3 L797.6,243.6 L798.4,243.8 L799.2,243.7 L800.0,242.7 L800.8,243.8 L801.6,242.8 L802.4,243.9 L803.2,243.5 L804.0,243.9 L804.8,244.0 L805.6,244.0 L806.4,243.8 L807.2,244.1 L808.0,244.3 L808.8,244.1 L809.6,244.3 L810.4,244.2 L811.2,244.1 L812.0,244.3 L812.8,244.4 L813.6,244.4 L814.4,244.5 L815.2,244.4 L816.0,244.5 L816.8,244.5 L817.6,243.8 L818.4,244.6 L819.2,244.7 L820.0,244.7 L820.8,244.8 L821.6,244.8 L822.4,244.7 L823.2,244.4 L824.0,244.0 L824.8,243.6 L825.6,243.5 L826.4,243.5 L827.2,243.6 L828.0,243.4 L828.8,242.9 L829.6,243.3 L830.4,243.3 L831.2,243.3 L832.0,242.3 L832.8,243.2 L833.6,242.3 L834.4,243.1 L835.2,243.3 L836.0,243.1 L836.8,241.5 L837.6,243.0 L838.4,242.7 L839.2,243.0 L840.0,243.3 L840.8,243.1 L841.6,243.3 L842.4,243.2 L843.2,242.3 L844.0,243.3 L844.8,243.1 L845.6,243.5 L846.4,242.8 L847.2,243.6 L848.0,243.3 L848.8,243.8 L849.6,244.0 L850.4,244.0 L851.2,243.1 L852.0,244.2 L852.8,244.4 L853.6,244.4 L854.4,244.5 L855.2,244.6 L856.0,244.7 L856.8,244.8 L857.6,244.4 L858.4,244.5 L859.2,244.1 L860.0,244.4 L860.8,243.1 L861.6,244.4 L862.4,244.5 L863.2,244.4 L864.0,243.5 L864.8,244.4 L865.6,244.5 L866.4,244.4 L867.2,244.1 L868.0,244.4 L868.8,244.4 L869.6,244.5 L870.4,244.6 L871.2,244.5 L872.0,244.6 L872.8,244.5 L873.6,244.2 L874.4,244.5 L875.2,244.4 L876.0,244.5 L876.8,244.5 L877.6,244.6 L878.4,244.7 L879.2,244.6 L880.0,244.6 L880.8,244.6 L881.6,244.7 L882.4,244.7 L883.2,244.8 L884.0,244.7 L884.8,244.1 L885.6,244.7 L886.4,244.7 L887.2,244.8 L888.0,243.8 L888.8,244.8 L889.6,244.9 L890.4,244.9 L891.2,245.0 L892.0,244.8 L892.8,244.3 L893.6,244.3 L894.4,244.1 L895.2,244.3 L896.0,244.4 L896.8,244.3 L896.8,248.7 L896.0,249.6 L895.2,248.7 L894.4,248.6 L893.6,248.7 L892.8,249.3 L892.0,248.2 L891.2,248.2 L890.4,248.1 L889.6,248.7 L888.8,248.2 L888.0,248.5 L887.2,248.2 L886.4,248.6 L885.6,248.3 L884.8,248.9 L884.0,248.3 L883.2,249.3 L882.4,248.3 L881.6,248.3 L880.8,248.4 L880.0,248.7 L879.2,248.4 L878.4,248.3 L877.6,248.4 L876.8,248.3 L876.0,248.5 L875.2,248.8 L874.4,248.5 L873.6,249.6 L872.8,248.5 L872.0,249.4 L871.2,248.5 L870.4,248.4 L869.6,248.5 L868.8,248.4 L868.0,248.6 L867.2,248.7 L866.4,248.6 L865.6,249.7 L864.8,248.6 L864.0,249.1 L863.2,248.6 L862.4,248.5 L861.6,248.6 L860.8,249.6 L860.0,248.6 L859.2,248.5 L858.4,248.5 L857.6,248.5 L856.8,248.2 L856.0,248.2 L855.2,248.4 L854.4,248.5 L853.6,248.6 L852.8,248.9 L852.0,248.8 L851.2,249.3 L850.4,249.0 L849.6,250.3 L848.8,249.2 L848.0,249.9 L847.2,249.4 L846.4,251.1 L845.6,249.5 L844.8,249.7 L844.0,249.7 L843.2,250.7 L842.4,249.8 L841.6,249.7 L840.8,249.9 L840.0,250.4 L839.2,250.0 L838.4,249.8 L837.6,250.0 L836.8,249.9 L836.0,249.9 L835.2,249.7 L834.4,249.9 L833.6,249.8 L832.8,249.8 L832.0,250.1 L831.2,249.7 L830.4,251.2 L829.6,249.7 L828.8,249.9 L828.0,249.6 L827.2,250.3 L826.4,249.5 L825.6,249.3 L824.8,249.4 L824.0,249.2 L823.2,248.6 L822.4,248.9 L821.6,248.2 L820.8,248.2 L820.0,248.3 L819.2,248.9 L818.4,248.4 L817.6,248.3 L816.8,248.5 L816.0,249.3 L815.2,248.6 L814.4,248.8 L813.6,248.6 L812.8,248.7 L812.0,248.7 L811.2,248.7 L810.4,248.8 L809.6,249.6 L808.8,248.9 L808.0,248.8 L807.2,248.9 L806.4,249.0 L805.6,249.0 L804.8,249.1 L804.0,249.1 L803.2,249.0 L802.4,249.1 L801.6,249.3 L800.8,249.2 L800.0,249.1 L799.2,249.3 L798.4,249.1 L797.6,249.4 L796.8,249.6 L796.0,249.5 L795.2,249.9 L794.4,249.6 L793.6,249.4 L792.8,249.7 L792.0,249.5 L791.2,249.8 L790.4,250.4 L789.6,249.7 L788.8,249.7 L788.0,249.0 L787.2,250.3 L786.4,249.1 L785.6,249.1 L784.8,249.3 L784.0,249.8 L783.2,249.4 L782.4,249.7 L781.6,249.6 L780.8,250.8 L780.0,249.6 L779.2,249.5 L778.4,249.7 L777.6,251.0 L776.8,249.7 L776.0,249.6 L775.2,249.7 L774.4,249.6 L773.6,249.6 L772.8,251.5 L772.0,249.6 L771.2,249.3 L770.4,249.5 L769.6,249.3 L768.8,249.4 L768.0,249.2 L767.2,249.3 L766.4,249.1 L765.6,249.3 L764.8,250.8 L764.0,249.2 L763.2,249.0 L762.4,249.2 L761.6,250.5 L760.8,249.1 L760.0,249.0 L759.2,249.1 L758.4,250.5 L757.6,249.1 L756.8,249.1 L756.0,249.1 L755.2,249.2 L754.4,248.6 L753.6,248.1 L752.8,248.1 L752.0,248.5 L751.2,248.2 L750.4,248.1 L749.6,248.3 L748.8,248.3 L748.0,248.4 L747.2,248.6 L746.4,248.4 L745.6,248.4 L744.8,248.5 L744.0,248.5 L743.2,248.5 L742.4,248.7 L741.6,248.6 L740.8,249.4 L740.0,248.6 L739.2,248.5 L738.4,248.7 L737.6,248.6 L736.8,248.7 L736.0,249.0 L735.2,248.8 L734.4,249.5 L733.6,248.8 L732.8,248.7 L732.0,248.8 L731.2,248.7 L730.4,248.8 L729.6,248.8 L728.8,248.9 L728.0,248.7Z" fill="#70121c"/><path d="M511.0,247.4 L511.8,247.6 L512.6,247.7 L513.4,247.6 L514.2,247.6 L515.0,247.6 L515.8,247.4 L516.6,247.6 L517.4,247.7 L518.2,247.6 L519.0,247.3 L519.8,247.6 L520.6,247.7 L521.4,247.6 L522.2,247.7 L523.0,247.6 L523.8,247.1 L524.6,247.6 L525.4,247.6 L526.2,247.6 L527.0,247.5 L527.8,247.6 L528.6,247.7 L529.4,247.6 L530.2,247.5 L531.0,247.6 L531.8,247.7 L532.6,247.6 L533.4,247.6 L534.2,247.6 L535.0,247.5 L535.8,247.6 L536.6,247.6 L537.4,247.6 L538.2,247.6 L539.0,247.6 L539.8,247.7 L540.6,247.6 L541.4,247.1 L542.2,247.6 L543.0,247.5 L543.8,247.6 L544.6,247.3 L545.4,247.6 L546.2,247.6 L547.0,247.6 L547.8,247.6 L548.6,247.6 L549.4,247.7 L550.2,247.6 L551.0,247.6 L551.8,247.6 L552.6,247.2 L553.4,247.6 L554.2,247.6 L555.0,247.6 L555.8,247.3 L556.6,247.6 L557.4,247.2 L558.2,247.6 L559.0,247.6 L559.8,247.6 L560.6,247.6 L561.4,247.6 L562.2,247.7 L563.0,247.6 L563.8,247.6 L564.6,247.6 L565.4,247.7 L566.2,247.6 L567.0,247.4 L567.8,247.6 L568.6,247.7 L569.4,247.6 L570.2,247.5 L571.0,247.6 L571.8,247.7 L572.6,247.6 L573.4,247.5 L574.2,247.6 L575.0,247.7 L575.8,247.6 L576.6,247.2 L577.4,247.6 L578.2,247.7 L579.0,247.6 L579.8,247.4 L580.6,247.6 L581.4,247.7 L582.2,247.6 L583.0,247.1 L583.8,247.6 L584.6,247.1 L585.4,247.6 L586.2,247.7 L587.0,247.6 L587.8,247.7 L588.6,247.6 L589.4,247.1 L590.2,247.6 L591.0,247.6 L591.8,247.6 L592.6,247.6 L593.4,247.6 L594.2,247.7 L595.0,247.6 L595.8,247.7 L596.6,247.6 L597.4,247.6 L598.2,247.6 L599.0,247.2 L599.8,247.6 L600.6,247.7 L601.4,247.6 L602.2,247.7 L603.0,247.6 L603.8,247.6 L604.6,247.6 L605.4,247.4 L606.2,247.6 L607.0,247.5 L607.8,247.6 L608.6,247.6 L609.4,247.6 L610.2,247.7 L611.0,247.6 L611.8,247.7 L612.6,247.6 L613.4,247.5 L614.2,247.6 L615.0,247.4 L615.8,247.6 L616.6,247.7 L617.4,247.6 L618.2,247.2 L619.0,247.6 L619.8,247.5 L620.6,247.6 L621.4,247.3 L622.2,247.6 L623.0,247.5 L623.8,247.6 L624.6,247.1 L625.4,247.6 L626.2,247.7 L627.0,247.6 L627.8,247.7 L628.6,247.6 L629.4,247.1 L630.2,247.6 L631.0,247.7 L631.8,247.6 L632.6,247.3 L633.4,247.6 L634.2,247.7 L635.0,247.6 L635.8,247.6 L636.6,247.6 L637.4,247.6 L638.2,247.6 L639.0,247.7 L639.8,247.6 L640.6,247.1 L641.4,247.6 L642.2,247.5 L643.0,247.6 L643.8,247.5 L644.6,247.6 L645.4,247.2 L646.2,247.6 L647.0,247.3 L647.8,247.6 L648.6,247.6 L649.4,247.6 L650.2,247.6 L651.0,247.6 L651.8,247.2 L652.6,247.6 L653.4,247.2 L654.2,247.6 L655.0,247.6 L655.8,247.6 L656.6,247.1 L657.4,247.6 L658.2,247.5 L659.0,247.6 L659.8,247.7 L660.6,247.6 L661.4,247.6 L662.2,247.6 L663.0,247.7 L663.8,247.6 L664.6,247.6 L665.4,247.6 L666.2,247.7 L667.0,247.6 L667.8,247.4 L668.6,247.6 L669.4,247.6 L670.2,247.6 L671.0,247.1 L671.8,247.6 L672.6,247.7 L673.4,247.6 L674.2,247.6 L675.0,247.6 L675.8,247.6 L676.6,247.6 L677.4,247.6 L678.2,247.6 L679.0,247.6 L679.8,247.6 L680.6,247.3 L681.4,247.6 L682.2,247.1 L683.0,247.6 L683.8,247.7 L684.6,247.6 L685.4,247.1 L686.2,247.6 L687.0,247.6 L687.8,247.6 L688.6,247.6 L689.4,247.6 L690.2,247.4 L691.0,247.6 L691.8,247.2 L692.6,247.6 L693.4,247.7 L694.2,247.6 L695.0,247.7 L695.8,247.6 L696.6,247.2 L697.4,247.6 L698.2,247.7 L699.0,247.6 L699.8,247.7 L700.6,247.6 L701.4,247.6 L702.2,247.6 L703.0,247.6 L703.8,247.6 L704.6,247.6 L705.4,247.6 L706.2,247.5 L707.0,247.6 L707.8,247.1 L708.6,247.6 L709.4,247.1 L710.2,247.6 L711.0,247.6 L711.8,247.6 L712.6,247.6 L713.4,247.6 L714.2,247.6 L715.0,247.6 L715.8,247.6 L716.6,247.6 L717.4,247.3 L718.2,247.6 L719.0,247.6 L719.8,247.6 L720.6,247.7 L721.4,247.6 L722.2,247.7 L723.0,247.6 L723.8,247.2 L724.6,247.6 L725.4,247.7 L726.2,247.6 L727.0,247.6 L727.8,247.6 L727.8,249.4 L727.0,249.3 L726.2,249.4 L725.4,249.4 L724.6,249.4 L723.8,249.3 L723.0,249.4 L722.2,249.6 L721.4,249.4 L720.6,249.3 L719.8,249.4 L719.0,249.6 L718.2,249.4 L717.4,249.6 L716.6,249.4 L715.8,249.4 L715.0,249.4 L714.2,249.3 L713.4,249.4 L712.6,249.3 L711.8,249.4 L711.0,249.5 L710.2,249.4 L709.4,249.4 L708.6,249.4 L707.8,249.4 L707.0,249.4 L706.2,249.7 L705.4,249.4 L704.6,249.5 L703.8,249.4 L703.0,249.5 L702.2,249.4 L701.4,249.4 L700.6,249.4 L699.8,249.8 L699.0,249.4 L698.2,249.8 L697.4,249.4 L696.6,249.3 L695.8,249.4 L695.0,249.3 L694.2,249.4 L693.4,249.3 L692.6,249.4 L691.8,249.4 L691.0,249.4 L690.2,249.5 L689.4,249.4 L688.6,249.9 L687.8,249.4 L687.0,249.4 L686.2,249.4 L685.4,249.7 L684.6,249.4 L683.8,249.3 L683.0,249.4 L682.2,249.9 L681.4,249.4 L680.6,249.3 L679.8,249.4 L679.0,249.4 L678.2,249.4 L677.4,249.7 L676.6,249.4 L675.8,249.5 L675.0,249.4 L674.2,249.3 L673.4,249.4 L672.6,249.8 L671.8,249.4 L671.0,249.5 L670.2,249.4 L669.4,249.7 L668.6,249.4 L667.8,249.4 L667.0,249.4 L666.2,249.3 L665.4,249.4 L664.6,249.3 L663.8,249.4 L663.0,249.9 L662.2,249.4 L661.4,249.3 L660.6,249.4 L659.8,249.5 L659.0,249.4 L658.2,249.7 L657.4,249.4 L656.6,249.7 L655.8,249.4 L655.0,249.6 L654.2,249.4 L653.4,249.7 L652.6,249.4 L651.8,249.3 L651.0,249.4 L650.2,249.3 L649.4,249.4 L648.6,249.7 L647.8,249.4 L647.0,249.4 L646.2,249.4 L645.4,249.3 L644.6,249.4 L643.8,249.7 L643.0,249.4 L642.2,249.4 L641.4,249.4 L640.6,249.7 L639.8,249.4 L639.0,249.4 L638.2,249.4 L637.4,249.4 L636.6,249.4 L635.8,249.5 L635.0,249.4 L634.2,249.4 L633.4,249.4 L632.6,249.3 L631.8,249.4 L631.0,249.3 L630.2,249.4 L629.4,249.4 L628.6,249.4 L627.8,249.9 L627.0,249.4 L626.2,249.5 L625.4,249.4 L624.6,249.6 L623.8,249.4 L623.0,249.4 L622.2,249.4 L621.4,249.6 L620.6,249.4 L619.8,249.4 L619.0,249.4 L618.2,249.6 L617.4,249.4 L616.6,249.3 L615.8,249.4 L615.0,249.7 L614.2,249.4 L613.4,249.8 L612.6,249.4 L611.8,249.4 L611.0,249.4 L610.2,249.6 L609.4,249.4 L608.6,249.3 L607.8,249.4 L607.0,249.9 L606.2,249.4 L605.4,249.5 L604.6,249.4 L603.8,250.0 L603.0,249.4 L602.2,249.4 L601.4,249.4 L600.6,249.5 L599.8,249.4 L599.0,249.4 L598.2,249.4 L597.4,249.3 L596.6,249.4 L595.8,249.4 L595.0,249.4 L594.2,249.4 L593.4,249.4 L592.6,249.4 L591.8,249.4 L591.0,249.3 L590.2,249.4 L589.4,249.6 L588.6,249.4 L587.8,249.3 L587.0,249.4 L586.2,249.7 L585.4,249.4 L584.6,249.4 L583.8,249.4 L583.0,249.3 L582.2,249.4 L581.4,249.7 L580.6,249.4 L579.8,249.4 L579.0,249.4 L578.2,249.9 L577.4,249.4 L576.6,249.4 L575.8,249.4 L575.0,249.5 L574.2,249.4 L573.4,249.6 L572.6,249.4 L571.8,249.5 L571.0,249.4 L570.2,249.3 L569.4,249.4 L568.6,249.4 L567.8,249.4 L567.0,249.7 L566.2,249.4 L565.4,249.9 L564.6,249.4 L563.8,249.8 L563.0,249.4 L562.2,249.6 L561.4,249.4 L560.6,249.3 L559.8,249.4 L559.0,249.4 L558.2,249.4 L557.4,249.4 L556.6,249.4 L555.8,249.4 L555.0,249.4 L554.2,249.3 L553.4,249.4 L552.6,249.5 L551.8,249.4 L551.0,249.8 L550.2,249.4 L549.4,249.5 L548.6,249.4 L547.8,249.6 L547.0,249.4 L546.2,249.3 L545.4,249.4 L544.6,249.4 L543.8,249.4 L543.0,249.8 L542.2,249.4 L541.4,249.3 L540.6,249.4 L539.8,249.4 L539.0,249.4 L538.2,249.4 L537.4,249.4 L536.6,249.8 L535.8,249.4 L535.0,249.3 L534.2,249.4 L533.4,249.3 L532.6,249.4 L531.8,249.5 L531.0,249.4 L530.2,249.3 L529.4,249.4 L528.6,249.4 L527.8,249.4 L527.0,249.5 L526.2,249.4 L525.4,249.8 L524.6,249.4 L523.8,249.5 L523.0,249.4 L522.2,249.3 L521.4,249.4 L520.6,249.7 L519.8,249.4 L519.0,249.5 L518.2,249.4 L517.4,249.4 L516.6,249.4 L515.8,249.4 L515.0,249.4 L514.2,249.6 L513.4,249.4 L512.6,249.5 L511.8,249.4 L511.0,249.7Z" fill="#5a1e22"/><path d="M511.0,245.2 L511.8,245.3 L512.6,245.1 L513.4,245.3 L514.2,244.9 L515.0,245.3 L515.8,245.3 L516.6,245.3 L517.4,245.4 L518.2,245.3 L519.0,245.1 L519.8,245.3 L520.6,245.3 L521.4,245.3 L522.2,245.4 L523.0,245.3 L523.8,245.4 L524.6,245.3 L525.4,245.4 L526.2,245.3 L527.0,244.9 L527.8,245.3 L528.6,245.4 L529.4,245.3 L530.2,245.4 L531.0,245.3 L531.8,245.0 L532.6,245.3 L533.4,245.2 L534.2,245.3 L535.0,245.1 L535.8,245.3 L536.6,245.4 L537.4,245.3 L538.2,245.4 L539.0,245.3 L539.8,244.9 L540.6,245.3 L541.4,245.3 L542.2,245.3 L543.0,245.1 L543.8,245.3 L544.6,245.4 L545.4,245.3 L546.2,245.4 L547.0,245.3 L547.8,245.4 L548.6,245.3 L549.4,245.2 L550.2,245.3 L551.0,244.8 L551.8,245.3 L552.6,245.3 L553.4,245.3 L554.2,245.4 L555.0,245.3 L555.8,245.0 L556.6,245.3 L557.4,245.2 L558.2,245.3 L559.0,245.4 L559.8,245.3 L560.6,244.8 L561.4,245.3 L562.2,245.3 L563.0,245.3 L563.8,245.4 L564.6,245.3 L565.4,244.8 L566.2,245.3 L567.0,245.4 L567.8,245.3 L568.6,245.4 L569.4,245.3 L570.2,245.2 L571.0,245.3 L571.8,245.4 L572.6,245.3 L573.4,245.4 L574.2,245.3 L575.0,245.4 L575.8,245.3 L576.6,245.3 L577.4,245.3 L578.2,245.4 L579.0,245.3 L579.8,245.4 L580.6,245.3 L581.4,244.8 L582.2,245.3 L583.0,245.4 L583.8,245.3 L584.6,245.2 L585.4,245.3 L586.2,245.1 L587.0,245.3 L587.8,245.2 L588.6,245.3 L589.4,245.4 L590.2,245.3 L591.0,245.4 L591.8,245.3 L592.6,245.3 L593.4,245.3 L594.2,245.4 L595.0,245.3 L595.8,245.3 L596.6,245.3 L597.4,245.4 L598.2,245.3 L599.0,245.4 L599.8,245.3 L600.6,245.4 L601.4,245.3 L602.2,245.3 L603.0,245.3 L603.8,245.0 L604.6,245.3 L605.4,245.4 L606.2,245.3 L607.0,244.8 L607.8,245.3 L608.6,244.9 L609.4,245.3 L610.2,245.3 L611.0,245.3 L611.8,245.4 L612.6,245.3 L613.4,244.8 L614.2,245.3 L615.0,245.3 L615.8,245.3 L616.6,245.4 L617.4,245.3 L618.2,245.4 L619.0,245.3 L619.8,245.4 L620.6,245.3 L621.4,245.4 L622.2,245.3 L623.0,245.1 L623.8,245.3 L624.6,244.8 L625.4,245.3 L626.2,245.2 L627.0,245.3 L627.8,245.1 L628.6,245.3 L629.4,245.4 L630.2,245.3 L631.0,245.1 L631.8,245.3 L632.6,245.3 L633.4,245.3 L634.2,245.4 L635.0,245.3 L635.8,245.2 L636.6,245.3 L637.4,245.4 L638.2,245.3 L639.0,245.4 L639.8,245.3 L640.6,245.2 L641.4,245.3 L642.2,244.9 L643.0,245.3 L643.8,245.3 L644.6,245.3 L645.4,245.1 L646.2,245.3 L647.0,245.1 L647.8,245.3 L648.6,244.8 L649.4,245.3 L650.2,245.0 L651.0,245.3 L651.8,245.2 L652.6,245.3 L653.4,245.4 L654.2,245.3 L655.0,245.2 L655.8,245.3 L656.6,245.4 L657.4,245.3 L658.2,245.0 L659.0,245.3 L659.8,245.3 L660.6,245.3 L661.4,245.4 L662.2,245.3 L663.0,245.3 L663.8,245.3 L664.6,245.4 L665.4,245.3 L666.2,245.3 L667.0,245.3 L667.8,245.1 L668.6,245.3 L669.4,245.4 L670.2,245.3 L671.0,245.3 L671.8,245.3 L672.6,245.4 L673.4,245.3 L674.2,245.4 L675.0,245.3 L675.8,245.4 L676.6,245.3 L677.4,245.0 L678.2,245.3 L679.0,245.4 L679.8,245.3 L680.6,245.4 L681.4,245.3 L682.2,245.1 L683.0,245.3 L683.8,245.3 L684.6,245.3 L685.4,245.4 L686.2,245.3 L687.0,244.9 L687.8,245.3 L688.6,245.3 L689.4,244.8 L690.2,244.8 L691.0,244.8 L691.8,244.9 L692.6,244.8 L693.4,244.9 L694.2,244.8 L695.0,244.9 L695.8,244.8 L696.6,244.9 L697.4,244.8 L698.2,244.8 L699.0,244.8 L699.8,244.9 L700.6,244.8 L701.4,244.9 L702.2,244.8 L703.0,244.9 L703.8,244.8 L704.6,244.8 L705.4,244.8 L706.2,244.9 L707.0,244.8 L707.8,244.7 L708.6,244.8 L709.4,244.9 L710.2,244.8 L711.0,244.8 L711.8,244.8 L712.6,244.9 L713.4,244.8 L714.2,244.1 L715.0,244.8 L715.8,244.9 L716.6,244.8 L717.4,244.9 L718.2,244.8 L719.0,244.9 L719.8,244.8 L720.6,244.9 L721.4,244.8 L722.2,244.2 L723.0,244.8 L723.8,244.9 L724.6,244.8 L725.4,244.9 L726.2,244.8 L727.0,244.9 L727.8,244.8 L727.8,247.8 L727.0,247.8 L726.2,247.8 L725.4,247.9 L724.6,247.8 L723.8,247.8 L723.0,247.8 L722.2,247.9 L721.4,247.8 L720.6,247.7 L719.8,247.8 L719.0,247.8 L718.2,247.8 L717.4,247.7 L716.6,247.8 L715.8,247.7 L715.0,247.8 L714.2,247.7 L713.4,247.8 L712.6,247.7 L711.8,247.8 L711.0,248.6 L710.2,247.8 L709.4,248.1 L708.6,247.8 L707.8,247.7 L707.0,247.8 L706.2,247.7 L705.4,247.8 L704.6,247.7 L703.8,247.8 L703.0,248.6 L702.2,247.8 L701.4,247.7 L700.6,247.8 L699.8,248.0 L699.0,247.8 L698.2,248.5 L697.4,247.8 L696.6,248.5 L695.8,247.8 L695.0,247.8 L694.2,247.8 L693.4,247.7 L692.6,247.8 L691.8,247.7 L691.0,247.8 L690.2,247.7 L689.4,247.8 L688.6,247.7 L687.8,247.3 L687.0,247.3 L686.2,247.3 L685.4,247.2 L684.6,247.3 L683.8,247.3 L683.0,247.3 L682.2,247.2 L681.4,247.3 L680.6,247.2 L679.8,247.3 L679.0,247.2 L678.2,247.3 L677.4,247.2 L676.6,247.3 L675.8,247.2 L675.0,247.3 L674.2,247.2 L673.4,247.3 L672.6,247.5 L671.8,247.3 L671.0,247.2 L670.2,247.3 L669.4,247.4 L668.6,247.3 L667.8,247.2 L667.0,247.3 L666.2,247.2 L665.4,247.3 L664.6,247.3 L663.8,247.3 L663.0,247.7 L662.2,247.3 L661.4,247.4 L660.6,247.3 L659.8,247.3 L659.0,247.3 L658.2,247.2 L657.4,247.3 L656.6,247.2 L655.8,247.3 L655.0,247.2 L654.2,247.3 L653.4,247.3 L652.6,247.3 L651.8,247.2 L651.0,247.3 L650.2,247.2 L649.4,247.3 L648.6,247.8 L647.8,247.3 L647.0,247.4 L646.2,247.3 L645.4,247.2 L644.6,247.3 L643.8,247.2 L643.0,247.3 L642.2,247.2 L641.4,247.3 L640.6,247.2 L639.8,247.3 L639.0,247.6 L638.2,247.3 L637.4,247.2 L636.6,247.3 L635.8,247.4 L635.0,247.3 L634.2,247.5 L633.4,247.3 L632.6,247.7 L631.8,247.3 L631.0,247.3 L630.2,247.3 L629.4,247.3 L628.6,247.3 L627.8,247.2 L627.0,247.3 L626.2,247.3 L625.4,247.3 L624.6,247.2 L623.8,247.3 L623.0,247.2 L622.2,247.3 L621.4,247.3 L620.6,247.3 L619.8,247.2 L619.0,247.3 L618.2,247.3 L617.4,247.3 L616.6,247.2 L615.8,247.3 L615.0,247.2 L614.2,247.3 L613.4,247.2 L612.6,247.3 L611.8,247.2 L611.0,247.3 L610.2,247.2 L609.4,247.3 L608.6,247.2 L607.8,247.3 L607.0,247.8 L606.2,247.3 L605.4,247.2 L604.6,247.3 L603.8,247.2 L603.0,247.3 L602.2,247.2 L601.4,247.3 L600.6,247.2 L599.8,247.3 L599.0,247.2 L598.2,247.3 L597.4,247.7 L596.6,247.3 L595.8,247.2 L595.0,247.3 L594.2,247.2 L593.4,247.3 L592.6,247.2 L591.8,247.3 L591.0,247.4 L590.2,247.3 L589.4,247.2 L588.6,247.3 L587.8,247.5 L587.0,247.3 L586.2,247.3 L585.4,247.3 L584.6,247.4 L583.8,247.3 L583.0,247.6 L582.2,247.3 L581.4,247.8 L580.6,247.3 L579.8,247.6 L579.0,247.3 L578.2,247.4 L577.4,247.3 L576.6,247.5 L575.8,247.3 L575.0,247.3 L574.2,247.3 L573.4,247.7 L572.6,247.3 L571.8,247.3 L571.0,247.3 L570.2,247.5 L569.4,247.3 L568.6,247.5 L567.8,247.3 L567.0,247.2 L566.2,247.3 L565.4,247.4 L564.6,247.3 L563.8,247.2 L563.0,247.3 L562.2,247.4 L561.4,247.3 L560.6,247.6 L559.8,247.3 L559.0,247.6 L558.2,247.3 L557.4,247.5 L556.6,247.3 L555.8,247.2 L555.0,247.3 L554.2,247.7 L553.4,247.3 L552.6,247.6 L551.8,247.3 L551.0,247.3 L550.2,247.3 L549.4,247.8 L548.6,247.3 L547.8,247.2 L547.0,247.3 L546.2,247.7 L545.4,247.3 L544.6,247.2 L543.8,247.3 L543.0,247.6 L542.2,247.3 L541.4,247.5 L540.6,247.3 L539.8,247.7 L539.0,247.3 L538.2,247.8 L537.4,247.3 L536.6,247.3 L535.8,247.3 L535.0,247.6 L534.2,247.3 L533.4,247.2 L532.6,247.3 L531.8,247.3 L531.0,247.3 L530.2,247.4 L529.4,247.3 L528.6,247.2 L527.8,247.3 L527.0,247.2 L526.2,247.3 L525.4,247.7 L524.6,247.3 L523.8,247.8 L523.0,247.3 L522.2,247.2 L521.4,247.3 L520.6,247.2 L519.8,247.3 L519.0,247.2 L518.2,247.3 L517.4,247.2 L516.6,247.3 L515.8,247.2 L515.0,247.3 L514.2,247.4 L513.4,247.3 L512.6,247.7 L511.8,247.3 L511.0,247.5Z" fill="#c98e91"/></svg>
<span class="t" style="left:513px;top:224px;font-size:5px;line-height:8px;color:#e8e0e0">Guit Right.dup1_01-03</span>
<span class="t" style="left:513px;top:261px;font-size:5.5px;line-height:8px;color:#e8e0e0">&#9662; 0 dB</span>
<div class="a" style="left:729px;top:224px;width:50px;height:7px;background:#6a5050"></div><span class="t" style="left:730px;top:223px;font-size:5px;line-height:8px;color:#f0e8e8">Guit Right.dup1_01-04</span>
<div class="a" style="left:729px;top:262px;width:18px;height:7px;background:#6a5050"></div><span class="t" style="left:731px;top:261px;font-size:5.5px;line-height:8px;color:#f0e8e8">&#9662; 0 dB</span>
<div class="a" style="left:167px;top:277.5px;width:9.0px;height:2px;background:#1d5c72"></div>
<div class="a" style="left:235.5px;top:277.5px;width:9.0px;height:2px;background:#1d5c72"></div>
<div class="a" style="left:270px;top:276.3px;width:8.5px;height:2px;background:#1d5c72"></div>
<div class="a" style="left:306px;top:277.5px;width:8.0px;height:2px;background:#1d5c72"></div>
<div class="a" style="left:339px;top:289.8px;width:34.0px;height:2px;background:#1d5c72"></div>
<div class="a" style="left:408px;top:276.3px;width:8.0px;height:2px;background:#1d5c72"></div>
<div class="a" style="left:443.5px;top:277.5px;width:8.0px;height:2px;background:#1d5c72"></div>
<div class="a" style="left:512px;top:277.5px;width:8.0px;height:2px;background:#1d5c72"></div>
<div class="a" style="left:546px;top:276.3px;width:8.0px;height:2px;background:#1d5c72"></div>
<div class="a" style="left:581.5px;top:277.5px;width:8.5px;height:2px;background:#1d5c72"></div>
<div class="a" style="left:614px;top:285.2px;width:34.0px;height:2px;background:#1d5c72"></div>
<div class="a" style="left:683.5px;top:276.3px;width:8.5px;height:2px;background:#1d5c72"></div>
<div class="a" style="left:718.5px;top:277.5px;width:8.5px;height:2px;background:#1d5c72"></div>
<div class="a" style="left:787px;top:277.5px;width:8.5px;height:2px;background:#1d5c72"></div>
<div class="a" style="left:821px;top:276.3px;width:8.0px;height:2px;background:#1d5c72"></div>
<div class="a" style="left:857px;top:277.5px;width:33.0px;height:2px;background:#1d5c72"></div>
<div class="a" style="left:890px;top:276.3px;width:7.0px;height:2px;background:#1d5c72"></div>
<div class="a" style="left:235.5px;top:313.7px;width:68.5px;height:2px;background:#1d5c72"></div>
<div class="a" style="left:339px;top:313.7px;width:34.0px;height:2px;background:#1d5c72"></div>
<div class="a" style="left:407.5px;top:313.7px;width:33.5px;height:2px;background:#1d5c72"></div>
<div class="a" style="left:511px;top:313.7px;width:68.5px;height:2px;background:#1d5c72"></div>
<div class="a" style="left:614px;top:313.7px;width:34.0px;height:2px;background:#1d5c72"></div>
<div class="a" style="left:683.5px;top:313.7px;width:33.5px;height:2px;background:#1d5c72"></div>
<div class="a" style="left:752px;top:313.7px;width:33.5px;height:2px;background:#1d5c72"></div>
<div class="a" style="left:786.5px;top:310.7px;width:33.5px;height:2px;background:#1d5c72"></div>
<div class="a" style="left:821px;top:313.7px;width:51.0px;height:2px;background:#1d5c72"></div>
<div class="a" style="left:889.5px;top:313.7px;width:7.5px;height:2px;background:#1d5c72"></div>
<div class="a" style="left:200px;top:276.5px;width:1.5px;height:2px;background:#1d5c72"></div>
<div class="a" style="left:476px;top:276.5px;width:1.5px;height:2px;background:#1d5c72"></div>
<div class="a" style="left:752px;top:276.5px;width:1.5px;height:2px;background:#1d5c72"></div>
<div class="a" style="left:166px;top:313px;width:2.0px;height:2px;background:#1d5c72"></div>
<div class="a" style="left:304px;top:310.5px;width:1.5px;height:2px;background:#1d5c72"></div>
<div class="a" style="left:441px;top:310.5px;width:1.5px;height:2px;background:#1d5c72"></div>
<div class="a" style="left:580px;top:310.5px;width:1.5px;height:2px;background:#1d5c72"></div>
<div class="a" style="left:871px;top:310.5px;width:1.5px;height:2px;background:#1d5c72"></div>
<div class="a" style="left:157px;top:271px;width:7px;height:47px;background:#f0f0f0"></div>
<div class="a" style="left:157px;top:272.5px;width:4px;height:2px;background:#1a1a1a"></div>
<div class="a" style="left:157px;top:276.4px;width:4px;height:2px;background:#1a1a1a"></div>
<div class="a" style="left:157px;top:284.2px;width:4px;height:2px;background:#1a1a1a"></div>
<div class="a" style="left:157px;top:288.1px;width:4px;height:2px;background:#1a1a1a"></div>
<div class="a" style="left:157px;top:292.0px;width:4px;height:2px;background:#1a1a1a"></div>
<div class="a" style="left:157px;top:299.8px;width:4px;height:2px;background:#1a1a1a"></div>
<div class="a" style="left:157px;top:303.7px;width:4px;height:2px;background:#1a1a1a"></div>
<div class="a" style="left:157px;top:311.5px;width:4px;height:2px;background:#1a1a1a"></div>
<div class="a" style="left:157px;top:315.4px;width:4px;height:2px;background:#1a1a1a"></div>
<div class="a" style="left:897.5px;top:105px;width:8px;height:423px;background:linear-gradient(90deg,#b0b0b0,#c4c4c4 50%,#b0b0b0)"></div>
<div class="a" style="left:897px;top:88px;width:8.5px;height:8px;background:#333"></div><span class="t" style="left:899px;top:88px;font-size:6px;line-height:8px;color:#eee">&#9662;</span>
<div class="a" style="left:897px;top:96px;width:8.5px;height:9.5px;background:#8cb858"></div>
<div class="a" style="left:898px;top:106px;width:7px;height:7.5px;background:linear-gradient(135deg,#e0c020 40%,#222 40%,#222 60%,#e0c020 60%);border:1px solid #333"></div>
<div class="a" style="left:905.5px;top:64px;width:2.5px;height:476px;background:#1c1c1c"></div>
<div class="a" style="left:903px;top:64px;width:5px;height:4px;background:#1a1a1a"></div>
<div class="a" style="left:908px;top:64px;width:52px;height:13px;background:linear-gradient(#606060,#474747)"></div>
<span class="t" style="left:925px;top:66px;font-size:6px;line-height:10px;color:#eee;font-weight:bold">CLIPS</span>
<div class="a" style="left:949px;top:67px;width:7px;height:7px;border-radius:50%;background:#777;border:1px solid #999"></div>
<div class="a" style="left:908px;top:77px;width:52px;height:451px;background:linear-gradient(90deg,#d3d3d3 0,#d3d3d3 12px,#cbcbcb 12px,#cbcbcb 30px,#c9c9c9 30px,#c9c9c9 43px,#ababab 43px,#a6a6a6 50px,#555 50px)"></div>
<div class="a" style="left:910px;top:78.5px;width:4px;height:5px;background:#2a9a2a;clip-path:polygon(50% 0,100% 100%,0 100%)"></div>
<div class="a" style="left:931px;top:78.7px;width:4px;height:4px;border-radius:50%;background:#8a8a8a"></div>
<span class="t" style="left:945px;top:77.5px;font-size:5px;line-height:6px;color:#444;font-weight:bold">EF</span>
<div class="a" style="left:910px;top:85.0px;width:4px;height:5px;background:#2a9a2a;clip-path:polygon(50% 0,100% 100%,0 100%)"></div>
<div class="a" style="left:931px;top:85.2px;width:4px;height:4px;border-radius:50%;background:#8a8a8a"></div>
<span class="t" style="left:945px;top:84.0px;font-size:5px;line-height:6px;color:#444;font-weight:bold">EF</span>
<div class="a" style="left:910px;top:91.4px;width:4px;height:5px;background:#2a9a2a;clip-path:polygon(50% 0,100% 100%,0 100%)"></div>
<div class="a" style="left:931px;top:91.6px;width:4px;height:4px;border-radius:50%;background:#8a8a8a"></div>
<span class="t" style="left:945px;top:90.4px;font-size:5px;line-height:6px;color:#444;font-weight:bold">EF</span>
<div class="a" style="left:910px;top:97.9px;width:4px;height:5px;background:#2a9a2a;clip-path:polygon(50% 0,100% 100%,0 100%)"></div>
<div class="a" style="left:931px;top:98.1px;width:4px;height:4px;border-radius:50%;background:#8a8a8a"></div>
<span class="t" style="left:945px;top:96.9px;font-size:5px;line-height:6px;color:#444;font-weight:bold">EF</span>
<div class="a" style="left:910px;top:104.4px;width:4px;height:5px;background:#2a9a2a;clip-path:polygon(50% 0,100% 100%,0 100%)"></div>
<div class="a" style="left:931px;top:104.6px;width:4px;height:4px;border-radius:50%;background:#8a8a8a"></div>
<span class="t" style="left:945px;top:103.4px;font-size:5px;line-height:6px;color:#444;font-weight:bold">EF</span>
<div class="a" style="left:910px;top:110.8px;width:4px;height:5px;background:#2a9a2a;clip-path:polygon(50% 0,100% 100%,0 100%)"></div>
<div class="a" style="left:931px;top:111.0px;width:4px;height:4px;border-radius:50%;background:#8a8a8a"></div>
<span class="t" style="left:945px;top:109.8px;font-size:5px;line-height:6px;color:#444;font-weight:bold">EF</span>
<div class="a" style="left:910px;top:117.3px;width:4px;height:5px;background:#2a9a2a;clip-path:polygon(50% 0,100% 100%,0 100%)"></div>
<div class="a" style="left:931px;top:117.5px;width:4px;height:4px;border-radius:50%;background:#8a8a8a"></div>
<span class="t" style="left:945px;top:116.3px;font-size:5px;line-height:6px;color:#444;font-weight:bold">EF</span>
<div class="a" style="left:911px;top:124.3px;width:3px;height:3px;border-radius:50%;background:#4a5684"></div>
<div class="a" style="left:932px;top:124.3px;width:3px;height:3px;background:#444;clip-path:polygon(0 0,100% 50%,0 100%)"></div>
<span class="t" style="left:944px;top:122.8px;font-size:5px;line-height:6px;color:#222;font-weight:bold">Gu</span>
<div class="a" style="left:911px;top:130.8px;width:3px;height:3px;border-radius:50%;background:#4a5684"></div>
<div class="a" style="left:932px;top:130.8px;width:3px;height:3px;background:#444;clip-path:polygon(0 0,100% 50%,0 100%)"></div>
<span class="t" style="left:944px;top:129.3px;font-size:5px;line-height:6px;color:#222;font-weight:bold">Gu</span>
<div class="a" style="left:911px;top:137.2px;width:3px;height:3px;border-radius:50%;background:#4a5684"></div>
<div class="a" style="left:932px;top:137.2px;width:3px;height:3px;background:#444;clip-path:polygon(0 0,100% 50%,0 100%)"></div>
<span class="t" style="left:944px;top:135.7px;font-size:5px;line-height:6px;color:#222;font-weight:bold">Gu</span>
<div class="a" style="left:911px;top:143.7px;width:3px;height:3px;border-radius:50%;background:#4a5684"></div>
<div class="a" style="left:932px;top:143.7px;width:3px;height:3px;background:#444;clip-path:polygon(0 0,100% 50%,0 100%)"></div>
<span class="t" style="left:944px;top:142.2px;font-size:5px;line-height:6px;color:#222;font-weight:bold">Gu</span>
<div class="a" style="left:908px;top:148.7px;width:44px;height:6.4px;background:#a8b0b8"></div>
<div class="a" style="left:911px;top:150.2px;width:3px;height:3px;border-radius:50%;background:#4a5684"></div>
<div class="a" style="left:932px;top:150.2px;width:3px;height:3px;background:#444;clip-path:polygon(0 0,100% 50%,0 100%)"></div>
<span class="t" style="left:944px;top:148.7px;font-size:5px;line-height:6px;color:#222;font-weight:bold">Gu</span>
<div class="a" style="left:911px;top:156.6px;width:3px;height:3px;border-radius:50%;background:#4a5684"></div>
<div class="a" style="left:932px;top:156.6px;width:3px;height:3px;background:#444;clip-path:polygon(0 0,100% 50%,0 100%)"></div>
<span class="t" style="left:944px;top:155.1px;font-size:5px;line-height:6px;color:#222;font-weight:bold">Gu</span>
<div class="a" style="left:911px;top:163.1px;width:3px;height:3px;border-radius:50%;background:#4a5684"></div>
<div class="a" style="left:932px;top:163.1px;width:3px;height:3px;background:#444;clip-path:polygon(0 0,100% 50%,0 100%)"></div>
<span class="t" style="left:944px;top:161.6px;font-size:5px;line-height:6px;color:#222;font-weight:bold">Gu</span>
<div class="a" style="left:911px;top:169.6px;width:3px;height:3px;border-radius:50%;background:#4a5684"></div>
<div class="a" style="left:932px;top:169.6px;width:3px;height:3px;background:#444;clip-path:polygon(0 0,100% 50%,0 100%)"></div>
<span class="t" style="left:944px;top:168.1px;font-size:5px;line-height:6px;color:#222;font-weight:bold">Gu</span>
<div class="a" style="left:911px;top:176.1px;width:3px;height:3px;border-radius:50%;background:#4a5684"></div>
<div class="a" style="left:932px;top:176.1px;width:3px;height:3px;background:#444;clip-path:polygon(0 0,100% 50%,0 100%)"></div>
<span class="t" style="left:944px;top:174.6px;font-size:5px;line-height:6px;color:#222;font-weight:bold">Gu</span>
<div class="a" style="left:910px;top:182.0px;width:4px;height:5px;background:#2a9a2a;clip-path:polygon(50% 0,100% 100%,0 100%)"></div>
<div class="a" style="left:931px;top:182.2px;width:4px;height:4px;border-radius:50%;background:#8a8a8a"></div>
<span class="t" style="left:945px;top:181.0px;font-size:5px;line-height:6px;color:#444;font-weight:bold">In</span>
<div class="a" style="left:910px;top:188.5px;width:4px;height:5px;background:#2a9a2a;clip-path:polygon(50% 0,100% 100%,0 100%)"></div>
<div class="a" style="left:931px;top:188.7px;width:4px;height:4px;border-radius:50%;background:#8a8a8a"></div>
<span class="t" style="left:945px;top:187.5px;font-size:5px;line-height:6px;color:#444;font-weight:bold">In</span>
<div class="a" style="left:952px;top:77px;width:8px;height:8px;background:#222"></div>
<div class="a" style="left:3px;top:528px;width:161px;height:7px;background:#4e4e4e"></div>
<span class="t" style="left:5px;top:528px;font-size:5px;line-height:7px;color:#ddd">|&#9656; &#8869;</span>
<div class="a" style="left:164px;top:528px;width:733px;height:7px;background:linear-gradient(#cdcdcd,#b5b5b5)"></div>
<div class="a" style="left:760px;top:528px;width:28px;height:7px;background:linear-gradient(#8a8a8a,#555)"></div>
<div class="a" style="left:859px;top:528px;width:39px;height:7px;background:#b4b4b4"></div><div class="a" style="left:897.5px;top:528px;width:8px;height:7px;background:#4a4a4a"></div>
<div class="a" style="left:862px;top:528.5px;width:6.5px;height:6px;background:linear-gradient(#d0d0d0,#a8a8a8);border-radius:1px"></div><span class="t" style="left:863px;top:528px;font-size:5px;line-height:7px;color:#222">&#9666;</span>
<div class="a" style="left:869px;top:528.5px;width:6.5px;height:6px;background:linear-gradient(#d0d0d0,#a8a8a8);border-radius:1px"></div><span class="t" style="left:870px;top:528px;font-size:5px;line-height:7px;color:#222">&#9656;</span>
<div class="a" style="left:876px;top:528.5px;width:6.5px;height:6px;background:linear-gradient(#d0d0d0,#a8a8a8);border-radius:1px"></div><span class="t" style="left:877px;top:528px;font-size:5px;line-height:7px;color:#222">&#8722;</span>
<div class="a" style="left:883px;top:528.5px;width:6.5px;height:6px;background:linear-gradient(#d0d0d0,#a8a8a8);border-radius:1px"></div><span class="t" style="left:884px;top:528px;font-size:5px;line-height:7px;color:#222">+</span>
<div class="a" style="left:890px;top:528.5px;width:6.5px;height:6px;background:linear-gradient(#d0d0d0,#a8a8a8);border-radius:1px"></div><span class="t" style="left:891px;top:528px;font-size:5px;line-height:7px;color:#222">&#9666;|</span>
<div class="a" style="left:898.5px;top:513px;width:6px;height:6.5px;background:linear-gradient(#d0d0d0,#a8a8a8);border-radius:1px"></div><span class="t" style="left:899.5px;top:513px;font-size:5px;line-height:6.5px;color:#222">&#8722;</span>
<div class="a" style="left:898.5px;top:520px;width:6px;height:6.5px;background:linear-gradient(#d0d0d0,#a8a8a8);border-radius:1px"></div><span class="t" style="left:899.5px;top:520px;font-size:5px;line-height:6.5px;color:#222">+</span>
<div class="a" style="left:908px;top:528px;width:52px;height:7px;background:#555"></div>
<div class="a" style="left:920px;top:528px;width:15px;height:7px;background:#c3c3c3"></div>
<div class="a" style="left:0;top:535px;width:960px;height:5px;background:#191919"></div>
<div class="a" style="left:306px;top:401px;width:255px;height:60px;background:linear-gradient(#c4c4c4,#b0b0b0);border:1px solid #8a8a8a;box-shadow:0 2px 4px rgba(0,0,0,0.35)"></div>
<div class="a" style="left:307px;top:402px;width:253px;height:7px;background:linear-gradient(#fafafa,#e6e6e6)"></div>
<div class="a" style="left:311px;top:403px;width:5px;height:5px;border-radius:50%;border:1px solid #aaa;background:#eee"></div>
<div class="a" style="left:317px;top:403px;width:5px;height:5px;border-radius:50%;border:1px solid #aaa;background:#eee"></div>
<div class="a" style="left:323px;top:403px;width:5px;height:5px;border-radius:50%;border:1px solid #aaa;background:#eee"></div>
<div class="btn" style="left:312px;top:415px;width:15px;height:14px;background:linear-gradient(#e8e8e8,#bdbdbd)"></div>
<div class="btn" style="left:333px;top:415px;width:15px;height:14px;background:linear-gradient(#e8e8e8,#bdbdbd)"></div>
<div class="btn" style="left:351px;top:415px;width:15px;height:14px;background:linear-gradient(#e8e8e8,#bdbdbd)"></div>
<div class="btn" style="left:369px;top:415px;width:15px;height:14px;background:linear-gradient(#e8e8e8,#bdbdbd)"></div>
<div class="btn" style="left:386px;top:415px;width:15px;height:14px;background:linear-gradient(#e8e8e8,#bdbdbd)"></div>
<div class="btn" style="left:406px;top:415px;width:15px;height:14px;background:linear-gradient(#e8e8e8,#bdbdbd)"></div>
<div class="btn" style="left:423px;top:415px;width:15px;height:14px;background:linear-gradient(#e8e8e8,#bdbdbd)"></div>
<div class="btn" style="left:440px;top:415px;width:15px;height:14px;background:linear-gradient(#e8e8e8,#bdbdbd)"></div>
<svg class="a" style="left:314px;top:417px" width="11" height="10" viewBox="0 0 11 10"><circle cx="5.5" cy="5" r="3.6" fill="#2a2a2a"/><path d="M5.5 5 L5.5 1.4 A3.6 3.6 0 0 1 9.1 5 Z" fill="#ddd"/></svg>
<span class="t" style="left:336px;top:416px;font-size:8px;line-height:12px;color:#333">&#9646;&#9664;</span>
<span class="t" style="left:353px;top:416px;font-size:8px;line-height:12px;color:#333;letter-spacing:-3px">&#9664;&#9664;</span>
<span class="t" style="left:371px;top:416px;font-size:8px;line-height:12px;color:#333;letter-spacing:-3px">&#9654;&#9654;</span>
<span class="t" style="left:388px;top:416px;font-size:8px;line-height:12px;color:#333">&#9654;&#9646;</span>
<div class="a" style="left:411px;top:419px;width:5px;height:5px;background:#1e4a6a"></div>
<svg class="a" style="left:424px;top:416px" width="14" height="12" viewBox="0 0 14 12"><path d="M3 7 Q3 10 7 10 Q11 10 11 7" stroke="#3a8a2a" stroke-width="1.6" fill="none"/><path d="M5 2 L8 5 L5 8Z" fill="#2a6a1a"/></svg>
<div class="a" style="left:444.5px;top:418.5px;width:7px;height:7px;border-radius:50%;background:#5a1020;border:1px solid #401018"></div><div class="a" style="left:446.5px;top:420.5px;width:3px;height:3px;border-radius:50%;background:#e03040"></div>
<div class="btn" style="left:459px;top:414px;width:7px;height:7px"></div><div class="btn" style="left:459px;top:422px;width:7px;height:7px"></div>
<div class="lcd" style="left:311px;top:433px;width:144px;height:23px;background:#121a12"></div>
<div class="a" style="left:386px;top:434px;width:1px;height:21px;background:#2a3a2a"></div>
<div class="a" style="left:316px;top:436px;width:32px;height:7px;background:#244a1c"></div><div class="a" style="left:316px;top:444px;width:32px;height:7px;background:#1e3a18"></div>
<span class="t" style="left:323px;top:436px;font-size:5px;line-height:7px;color:#8fd04a">Pre-roll</span><span class="t" style="left:321px;top:444px;font-size:5px;line-height:7px;color:#8fd04a">Post-roll</span>
<span class="t" style="left:360px;top:436px;font-size:6px;line-height:7px;color:#9ae456;font-weight:bold">1| 0| 000</span><span class="t" style="left:360px;top:444px;font-size:6px;line-height:7px;color:#9ae456;font-weight:bold">0| 0| 348</span>
<span class="t" style="left:396px;top:434px;font-size:5px;line-height:6px;color:#eee;font-weight:bold">Début</span><span class="t" style="left:402px;top:441px;font-size:5px;line-height:6px;color:#eee;font-weight:bold">Fin</span><span class="t" style="left:389px;top:448px;font-size:5px;line-height:6px;color:#eee;font-weight:bold">Longueur</span>
<span class="t" style="left:424px;top:434px;font-size:6px;line-height:7px;color:#9ae456;font-weight:bold">59| 3| 000</span><span class="t" style="left:424px;top:441px;font-size:6px;line-height:7px;color:#9ae456;font-weight:bold">60| 2| 149</span><span class="t" style="left:430px;top:448px;font-size:6px;line-height:7px;color:#9ae456;font-weight:bold">0| 3| 149</span>
<div class="lcd" style="left:473px;top:414px;width:71px;height:23px;background:#121a12"></div>
<div class="a" style="left:477px;top:416px;width:28px;height:6px;background:#2a5a1c"></div><span class="t" style="left:478px;top:416px;font-size:5px;line-height:6px;color:#9fe04a">Décompte</span>
<span class="t" style="left:482px;top:422px;font-size:5px;line-height:6px;color:#eee;font-weight:bold">Métrique</span><span class="t" style="left:486px;top:428px;font-size:5px;line-height:6px;color:#eee;font-weight:bold">Tempo</span>
<span class="t" style="left:500px;top:427px;font-size:7px;line-height:8px;color:#cfe040">&#9833;</span>
<span class="t" style="left:517px;top:416px;font-size:5px;line-height:6px;color:#8fd04a">2 mesures</span><span class="t" style="left:533px;top:422px;font-size:5px;line-height:6px;color:#8fd04a">4/4</span><span class="t" style="left:517px;top:428px;font-size:5px;line-height:6px;color:#4a7a2a">100.0000</span>
<div class="btn" style="left:474px;top:445px;width:15px;height:10px"></div><span class="t" style="left:476px;top:445px;font-size:6px;line-height:10px;color:#222">+&#9679;</span>
<div class="bbl" style="left:492px;top:445px;width:16px;height:10px"></div><svg class="a" style="left:492px;top:445px" width="16" height="10" viewBox="0 0 16 10"><path d="M3 8 L8 3 L13 8 Z" fill="#1a2a40"/></svg>
<div class="bbl" style="left:509px;top:445px;width:16px;height:10px"></div><svg class="a" style="left:509px;top:445px" width="16" height="10" viewBox="0 0 16 10"><path d="M2 6 Q5 2 8 6 T14 6" stroke="#1a2a40" stroke-width="1.5" fill="none"/></svg>
<div class="bbl" style="left:527px;top:445px;width:16px;height:10px"></div><svg class="a" style="left:527px;top:445px" width="16" height="10" viewBox="0 0 16 10"><path d="M3 3 L8 8 L13 3 Z" fill="#1a2a40"/><rect x="6.5" y="1" width="3" height="3" fill="#1a2a40"/></svg>
<div class="a" style="left:551px;top:411px;width:9px;height:9px;border-radius:50%;border:1px solid #555;background:linear-gradient(#eee,#aaa)"></div><span class="t" style="left:553px;top:411px;font-size:6px;line-height:9px;color:#222">&#9662;</span>
<svg class="a" style="left:640px;top:253px" width="8" height="11" viewBox="0 0 8 11"><path d="M1 1 L1 9 L3 7 L4.5 10 L5.5 9.5 L4.2 6.5 L7 6.5 Z" fill="#111" stroke="#eee" stroke-width="0.7"/></svg>
</body></html>
